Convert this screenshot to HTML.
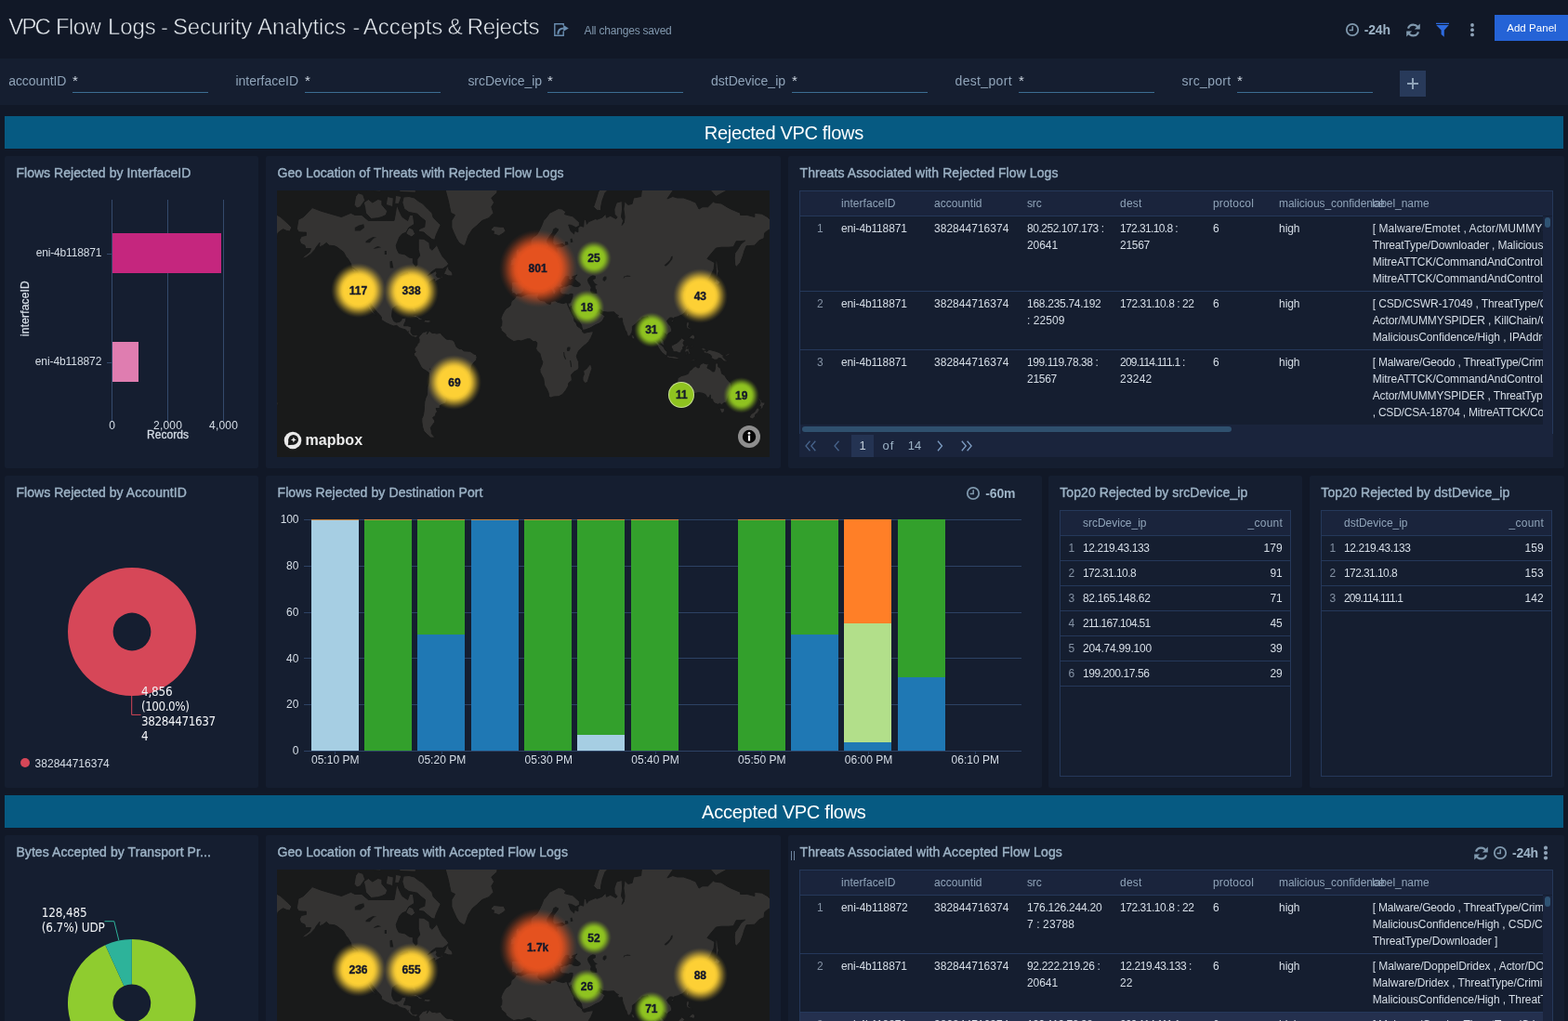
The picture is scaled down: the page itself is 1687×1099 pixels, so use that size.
<!DOCTYPE html>
<html lang="en"><head><meta charset="utf-8"><title>VPC Flow Logs - Security Analytics - Accepts &amp; Rejects</title>
<style>
html,body{margin:0;padding:0;}
body{width:1687px;height:1099px;overflow:hidden;background:#111827;font-family:"Liberation Sans",sans-serif;position:relative;}
.t{position:absolute;white-space:nowrap;}
#root{position:absolute;left:0;top:0;width:1687px;height:1099px;overflow:hidden;will-change:transform;}
.b{position:absolute;box-sizing:border-box;}
svg{position:absolute;overflow:hidden;}
</style></head><body><div id="root">
<!-- header -->
<h1 style="margin:0;font-size:inherit;font-weight:inherit">
<span class="t" style="left:9.20px;top:14.00px;font-size:24px;line-height:30px;color:#e8edf2;letter-spacing:-1.816px;-webkit-text-stroke:0.55px #111827;">VPC</span>
<span class="t" style="left:59.90px;top:14.00px;font-size:24px;line-height:30px;color:#e8edf2;letter-spacing:-0.593px;-webkit-text-stroke:0.55px #111827;">Flow</span>
<span class="t" style="left:115.90px;top:14.00px;font-size:24px;line-height:30px;color:#e8edf2;letter-spacing:-0.036px;-webkit-text-stroke:0.55px #111827;">Logs</span>
<span class="t" style="left:173.00px;top:14.00px;font-size:24px;line-height:30px;color:#e8edf2;-webkit-text-stroke:0.55px #111827;">-</span>
<span class="t" style="left:186.10px;top:14.00px;font-size:24px;line-height:30px;color:#e8edf2;letter-spacing:-0.237px;-webkit-text-stroke:0.55px #111827;">Security</span>
<span class="t" style="left:277.00px;top:14.00px;font-size:24px;line-height:30px;color:#e8edf2;letter-spacing:-0.104px;-webkit-text-stroke:0.55px #111827;">Analytics</span>
<span class="t" style="left:379.20px;top:14.00px;font-size:24px;line-height:30px;color:#e8edf2;-webkit-text-stroke:0.55px #111827;">-</span>
<span class="t" style="left:390.80px;top:14.00px;font-size:24px;line-height:30px;color:#e8edf2;letter-spacing:0.033px;-webkit-text-stroke:0.55px #111827;">Accepts</span>
<span class="t" style="left:481.80px;top:14.00px;font-size:24px;line-height:30px;color:#e8edf2;-webkit-text-stroke:0.55px #111827;">&amp;</span>
<span class="t" style="left:502.70px;top:14.00px;font-size:24px;line-height:30px;color:#e8edf2;letter-spacing:-0.361px;-webkit-text-stroke:0.55px #111827;">Rejects</span>
</h1>
<svg style="left:596px;top:24px" width="17" height="16" viewBox="0 0 17 16"><path d="M10.2 3.6V1.8H0.8V14.2H10.2V9.6" fill="none" stroke="#6a8db0" stroke-width="1.4"/><path d="M4.4 12.8C4.4 8.6 6.6 6.4 10.6 6.4" fill="none" stroke="#6a8db0" stroke-width="2"/><path d="M10.2 3.1L15.8 6.4L10.2 9.7Z" fill="#6a8db0"/></svg>
<span class="t" style="left:628.60px;top:26.00px;font-size:12px;line-height:15px;color:#8097ad;letter-spacing:-0.200px;">All changes saved</span>
<svg style="left:1446px;top:23px" width="18" height="18" viewBox="0 0 18 18"><circle cx="9" cy="9" r="6.2" fill="none" stroke="#7f98ad" stroke-width="1.8"/><path d="M9.2 5.2V9.6H5.6" fill="none" stroke="#7f98ad" stroke-width="1.5"/></svg>
<span class="t" style="left:1467.80px;top:23.00px;font-size:14px;line-height:18px;color:#9db3c6;font-weight:700;letter-spacing:-0.197px;">-24h</span>
<svg style="left:1512.5px;top:24.5px" width="15" height="15" viewBox="0 0 15 15"><path d="M12.9 5.6A5.7 5.7 0 0 0 2 5.6" fill="none" stroke="#7f98ad" stroke-width="2.2"/><path d="M14.8 0.4V6.4H8.8Z" fill="#7f98ad"/><path d="M2.1 9.4A5.7 5.7 0 0 0 13 9.4" fill="none" stroke="#7f98ad" stroke-width="2.2"/><path d="M0.2 14.6V8.6H6.2Z" fill="#7f98ad"/></svg>
<svg style="left:1544px;top:24px" width="16" height="17" viewBox="0 0 16 17"><path d="M1 0.8H15V2H1Z M1.2 3H14.8L9.8 8.6V15.8L6.6 13V8.6Z" fill="#2d6be0"/></svg>
<svg style="left:1580px;top:24px" width="8" height="16" viewBox="0 0 8 16"><circle cx="4" cy="3" r="1.9" fill="#8fa3b8"/><circle cx="4" cy="8.2" r="1.9" fill="#8fa3b8"/><circle cx="4" cy="13.4" r="1.9" fill="#8fa3b8"/></svg>
<div class="b" style="left:1608px;top:16px;width:90px;height:28px;background:#2563d6;"></div>
<span class="t" style="left:1621.20px;top:23.00px;font-size:11.5px;line-height:14px;color:#ffffff;letter-spacing:0.048px;">Add Panel</span>
<!-- filter bar -->
<div class="b" style="left:0px;top:63px;width:1687px;height:50px;background:#151e30;"></div>
<span class="t" style="left:9.20px;top:78.00px;font-size:14px;line-height:18px;color:#8fa3b8;letter-spacing:-0.093px;">accountID</span>
<span class="t" style="left:78.00px;top:77.00px;font-size:15px;line-height:19px;color:#cdd6e0;">*</span>
<div class="b" style="left:78px;top:99px;width:145.6px;height:1px;background:#3c6d92;"></div>
<span class="t" style="left:253.40px;top:78.00px;font-size:14px;line-height:18px;color:#8fa3b8;letter-spacing:-0.009px;">interfaceID</span>
<span class="t" style="left:328.00px;top:77.00px;font-size:15px;line-height:19px;color:#cdd6e0;">*</span>
<div class="b" style="left:328px;top:99px;width:145.6px;height:1px;background:#3c6d92;"></div>
<span class="t" style="left:503.40px;top:78.00px;font-size:14px;line-height:18px;color:#8fa3b8;letter-spacing:-0.045px;">srcDevice_ip</span>
<span class="t" style="left:589.00px;top:77.00px;font-size:15px;line-height:19px;color:#cdd6e0;">*</span>
<div class="b" style="left:589px;top:99px;width:145.6px;height:1px;background:#3c6d92;"></div>
<span class="t" style="left:765.00px;top:78.00px;font-size:14px;line-height:18px;color:#8fa3b8;letter-spacing:-0.013px;">dstDevice_ip</span>
<span class="t" style="left:852.00px;top:77.00px;font-size:15px;line-height:19px;color:#cdd6e0;">*</span>
<div class="b" style="left:852px;top:99px;width:145.6px;height:1px;background:#3c6d92;"></div>
<span class="t" style="left:1027.50px;top:78.00px;font-size:14px;line-height:18px;color:#8fa3b8;letter-spacing:0.348px;">dest_port</span>
<span class="t" style="left:1096.00px;top:77.00px;font-size:15px;line-height:19px;color:#cdd6e0;">*</span>
<div class="b" style="left:1096px;top:99px;width:145.6px;height:1px;background:#3c6d92;"></div>
<span class="t" style="left:1271.50px;top:78.00px;font-size:14px;line-height:18px;color:#8fa3b8;letter-spacing:0.303px;">src_port</span>
<span class="t" style="left:1331.00px;top:77.00px;font-size:15px;line-height:19px;color:#cdd6e0;">*</span>
<div class="b" style="left:1331px;top:99px;width:145.6px;height:1px;background:#3c6d92;"></div>
<div class="b" style="left:1506px;top:76px;width:28px;height:28px;background:#283a5a;"></div>
<div class="b" style="left:1514px;top:89px;width:12px;height:2px;background:#8fa3b8;"></div>
<div class="b" style="left:1519px;top:84px;width:2px;height:12px;background:#8fa3b8;"></div>
<div class="b" style="left:5px;top:125px;width:1677px;height:35px;background:#065a82;"></div>
<span class="t" style="left:757.84px;top:131.00px;font-size:20px;line-height:25px;color:#ffffff;letter-spacing:-0.319px;">Rejected VPC flows</span>
<div class="b" style="left:5px;top:856px;width:1677px;height:35px;background:#065a82;"></div>
<span class="t" style="left:755.12px;top:862.00px;font-size:20px;line-height:25px;color:#ffffff;letter-spacing:-0.261px;">Accepted VPC flows</span>
<div class="b" style="left:5px;top:168px;width:273px;height:336px;background:#151e30;border-radius:2px;"></div>
<div class="b" style="left:286px;top:168px;width:554px;height:336px;background:#151e30;border-radius:2px;"></div>
<div class="b" style="left:848px;top:168px;width:835px;height:336px;background:#151e30;border-radius:2px;"></div>
<div class="b" style="left:5px;top:512px;width:273px;height:336px;background:#151e30;border-radius:2px;"></div>
<div class="b" style="left:286px;top:512px;width:834.7px;height:336px;background:#151e30;border-radius:2px;"></div>
<div class="b" style="left:1128px;top:512px;width:273px;height:336px;background:#151e30;border-radius:2px;"></div>
<div class="b" style="left:1409px;top:512px;width:274px;height:336px;background:#151e30;border-radius:2px;"></div>
<div class="b" style="left:5px;top:899px;width:273px;height:210px;background:#151e30;border-radius:2px;"></div>
<div class="b" style="left:286px;top:899px;width:554px;height:210px;background:#151e30;border-radius:2px;"></div>
<div class="b" style="left:848px;top:899px;width:835px;height:210px;background:#151e30;border-radius:2px;"></div>
<span class="t" style="left:17.40px;top:177.00px;font-size:14px;line-height:18px;color:#9db3c6;letter-spacing:0.043px;-webkit-text-stroke:0.4px #9db3c6;">Flows Rejected by InterfaceID</span>
<span class="t" style="left:298.50px;top:177.00px;font-size:14px;line-height:18px;color:#9db3c6;letter-spacing:0.052px;-webkit-text-stroke:0.4px #9db3c6;">Geo Location of Threats with Rejected Flow Logs</span>
<span class="t" style="left:860.50px;top:177.00px;font-size:14px;line-height:18px;color:#9db3c6;letter-spacing:0.079px;-webkit-text-stroke:0.4px #9db3c6;">Threats Associated with Rejected Flow Logs</span>
<span class="t" style="left:17.40px;top:521.00px;font-size:14px;line-height:18px;color:#9db3c6;letter-spacing:0.052px;-webkit-text-stroke:0.4px #9db3c6;">Flows Rejected by AccountID</span>
<span class="t" style="left:298.50px;top:521.00px;font-size:14px;line-height:18px;color:#9db3c6;letter-spacing:0.092px;-webkit-text-stroke:0.4px #9db3c6;">Flows Rejected by Destination Port</span>
<span class="t" style="left:1140.30px;top:521.00px;font-size:14px;line-height:18px;color:#9db3c6;letter-spacing:0.067px;-webkit-text-stroke:0.4px #9db3c6;">Top20 Rejected by srcDevice_ip</span>
<span class="t" style="left:1421.30px;top:521.00px;font-size:14px;line-height:18px;color:#9db3c6;letter-spacing:0.100px;-webkit-text-stroke:0.4px #9db3c6;">Top20 Rejected by dstDevice_ip</span>
<span class="t" style="left:17.40px;top:908.00px;font-size:14px;line-height:18px;color:#9db3c6;letter-spacing:0.076px;-webkit-text-stroke:0.4px #9db3c6;">Bytes Accepted by Transport Pr...</span>
<span class="t" style="left:298.50px;top:908.00px;font-size:14px;line-height:18px;color:#9db3c6;letter-spacing:0.097px;-webkit-text-stroke:0.4px #9db3c6;">Geo Location of Threats with Accepted Flow Logs</span>
<span class="t" style="left:860.50px;top:908.00px;font-size:14px;line-height:18px;color:#9db3c6;letter-spacing:0.130px;-webkit-text-stroke:0.4px #9db3c6;">Threats Associated with Accepted Flow Logs</span>
<!-- bar chart -->
<div class="b" style="left:120.2px;top:215px;width:1px;height:238px;background:#344a6c;"></div>
<div class="b" style="left:180.3px;top:215px;width:1px;height:238px;background:#344a6c;"></div>
<div class="b" style="left:240.3px;top:215px;width:1px;height:238px;background:#344a6c;"></div>
<div class="b" style="left:120.7px;top:251px;width:117.3px;height:42.8px;background:#c5267e;"></div>
<div class="b" style="left:120.7px;top:368.1px;width:28.3px;height:42.5px;background:#df7db0;"></div>
<div class="b" style="left:115px;top:272.5px;width:5.5px;height:1px;background:#344a6c;"></div>
<div class="b" style="left:115px;top:389.7px;width:5.5px;height:1px;background:#344a6c;"></div>
<span class="t" style="left:38.64px;top:265.00px;font-size:12px;line-height:15px;color:#d5dde6;letter-spacing:-0.159px;">eni-4b118871</span>
<span class="t" style="left:37.72px;top:382.00px;font-size:12px;line-height:15px;color:#d5dde6;letter-spacing:-0.076px;">eni-4b118872</span>
<span class="t" style="left:117.16px;top:451.00px;font-size:12px;line-height:15px;color:#d5dde6;">0</span>
<span class="t" style="left:165.10px;top:451.00px;font-size:12px;line-height:15px;color:#d5dde6;letter-spacing:0.194px;">2,000</span>
<span class="t" style="left:225.10px;top:451.00px;font-size:12px;line-height:15px;color:#d5dde6;letter-spacing:0.194px;">4,000</span>
<span class="t" style="left:158.02px;top:461.00px;font-size:12px;line-height:15px;color:#d5dde6;letter-spacing:0.045px;-webkit-text-stroke:0.3px #d5dde6;">Records</span>
<span class="t" style="left:19.5px;top:361.5px;font-size:12px;line-height:14px;color:#d5dde6;transform:rotate(-90deg);transform-origin:0 0;letter-spacing:0.161px;-webkit-text-stroke:0.3px #d5dde6;">interfaceID</span>
<svg style="left:298px;top:205px" width="530" height="287" viewBox="0 0 530 287"><defs><filter id="bl205" x="-5%" y="-5%" width="110%" height="110%" color-interpolation-filters="sRGB"><feGaussianBlur stdDeviation="0.5"/></filter></defs><rect width="530" height="287" fill="#191a1a"/><g filter="url(#bl205)"><path d="M21.3,41.3L23.0,31.3L28.5,28.5L38.0,18.6L47.5,22.2L60.5,26.0L69.3,28.5L79.5,24.3L83.8,26.4L91.1,26.4L98.4,32.5L108.6,32.5L117.3,32.5L126.0,32.5L127.5,24.3L128.9,15.4L132.6,24.3L134.8,28.5L140.6,32.5L142.8,26.4L146.4,26.4L147.8,36.3L142.0,39.9L139.1,45.1L134.8,46.8L131.8,50.1L128.2,59.2L128.9,62.9L131.1,67.6L137.7,68.9L142.0,72.0L146.4,72.8L146.4,77.7L149.3,81.8L150.8,80.1L150.8,74.0L153.7,70.2L152.2,63.5L152.2,56.9L152.2,52.0L158.0,52.3L163.9,56.3L164.6,62.1L166.8,64.3L170.4,60.7L171.9,58.3L175.5,66.2L178.4,71.5L182.0,75.3L184.7,78.9L182.8,81.3L178.4,84.3L171.1,84.3L168.2,86.3L164.6,89.2L162.4,91.5L164.6,90.3L171.1,86.5L172.1,89.2L171.1,91.3L172.6,93.4L176.2,93.9L176.9,91.3L178.4,93.4L173.3,96.5L169.7,98.6L169.7,95.5L168.2,95.9L163.9,98.6L163.1,101.5L163.9,102.1L160.9,103.5L158.0,104.4L155.8,108.2L155.1,111.0L155.6,114.0L153.7,115.5L150.8,118.1L147.8,120.7L147.4,123.2L149.3,128.2L149.0,130.9L147.8,131.1L145.4,127.4L145.2,124.9L143.5,123.2L140.6,122.7L136.2,122.7L135.5,124.5L133.3,124.4L128.9,123.9L124.6,126.9L124.1,129.8L123.5,135.4L125.6,140.4L128.2,142.1L131.8,141.4L133.7,140.1L134.2,137.7L139.1,137.0L138.4,140.8L137.2,143.1L136.5,145.7L140.6,145.7L144.5,146.9L143.9,151.4L144.2,153.2L146.4,155.9L149.3,155.6L153.2,156.6L151.5,156.9L149.3,158.3L147.1,157.8L144.9,156.9L142.0,154.4L140.9,152.9L138.4,149.9L134.8,148.9L131.5,147.7L128.9,145.4L125.3,145.9L121.7,144.5L117.3,142.4L112.2,139.3L112.5,136.6L110.7,134.1L107.1,130.6L104.9,127.4L102.0,124.0L100.6,121.0L98.8,120.3L98.8,122.9L101.3,126.5L104.2,131.4L106.4,134.3L105.2,133.8L102.7,131.7L99.1,127.4L97.2,123.2L95.3,119.0L93.3,116.3L90.4,115.5L88.2,111.9L87.5,109.5L85.3,104.8L84.8,99.6L85.3,93.0L84.3,88.3L86.7,88.5L87.5,90.3L87.0,87.0L83.8,84.7L80.2,82.5L79.5,78.9L76.6,74.0L74.4,71.5L71.5,66.2L67.8,63.5L64.9,61.2L62.0,59.8L56.2,59.2L53.3,56.3L49.6,59.2L45.3,61.2L46.0,56.3L42.4,60.7L40.9,63.5L36.5,68.4L31.4,72.0L26.4,73.5L30.0,70.2L35.1,66.2L36.5,62.6L30.7,62.6L30.0,59.2L25.6,57.2L24.2,53.2L26.4,49.4L31.4,48.4L31.4,45.1L28.5,45.1L23.4,44.8ZM-502.5,41.3L-500.8,31.3L-495.3,28.5L-485.8,18.6L-476.4,22.2L-463.3,26.0L-454.5,28.5L-444.3,24.3L-440.0,26.4L-432.7,26.4L-425.4,32.5L-415.2,32.5L-406.5,32.5L-397.8,32.5L-396.3,24.3L-394.9,15.4L-391.2,24.3L-389.0,28.5L-383.2,32.5L-381.0,26.4L-377.4,26.4L-376.0,36.3L-381.8,39.9L-384.7,45.1L-389.0,46.8L-392.0,50.1L-395.6,59.2L-394.9,62.9L-392.7,67.6L-386.1,68.9L-381.8,72.0L-377.4,72.8L-377.4,77.7L-374.5,81.8L-373.0,80.1L-373.0,74.0L-370.1,70.2L-371.6,63.5L-371.6,56.9L-371.6,52.0L-365.8,52.3L-359.9,56.3L-359.2,62.1L-357.0,64.3L-353.4,60.7L-351.9,58.3L-348.3,66.2L-345.4,71.5L-341.8,75.3L-339.1,78.9L-341.0,81.3L-345.4,84.3L-352.7,84.3L-355.6,86.3L-359.2,89.2L-361.4,91.5L-359.2,90.3L-352.7,86.5L-351.7,89.2L-352.7,91.3L-351.2,93.4L-347.6,93.9L-346.9,91.3L-345.4,93.4L-350.5,96.5L-354.1,98.6L-354.1,95.5L-355.6,95.9L-359.9,98.6L-360.7,101.5L-359.9,102.1L-362.9,103.5L-365.8,104.4L-368.0,108.2L-368.7,111.0L-368.2,114.0L-370.1,115.5L-373.0,118.1L-376.0,120.7L-376.4,123.2L-374.5,128.2L-374.8,130.9L-376.0,131.1L-378.4,127.4L-378.6,124.9L-380.3,123.2L-383.2,122.7L-387.6,122.7L-388.3,124.5L-390.5,124.4L-394.9,123.9L-399.2,126.9L-399.7,129.8L-400.3,135.4L-398.2,140.4L-395.6,142.1L-392.0,141.4L-390.1,140.1L-389.6,137.7L-384.7,137.0L-385.4,140.8L-386.6,143.1L-387.3,145.7L-383.2,145.7L-379.3,146.9L-379.9,151.4L-379.6,153.2L-377.4,155.9L-374.5,155.6L-370.6,156.6L-372.3,156.9L-374.5,158.3L-376.7,157.8L-378.9,156.9L-381.8,154.4L-382.9,152.9L-385.4,149.9L-389.0,148.9L-392.3,147.7L-394.9,145.4L-398.5,145.9L-402.1,144.5L-406.5,142.4L-411.6,139.3L-411.3,136.6L-413.1,134.1L-416.7,130.6L-418.9,127.4L-421.8,124.0L-423.2,121.0L-425.0,120.3L-425.0,122.9L-422.5,126.5L-419.6,131.4L-417.4,134.3L-418.6,133.8L-421.1,131.7L-424.7,127.4L-426.6,123.2L-428.5,119.0L-430.5,116.3L-433.4,115.5L-435.6,111.9L-436.3,109.5L-438.5,104.8L-439.0,99.6L-438.5,93.0L-439.5,88.3L-437.1,88.5L-436.3,90.3L-436.8,87.0L-440.0,84.7L-443.6,82.5L-444.3,78.9L-447.2,74.0L-449.4,71.5L-452.3,66.2L-456.0,63.5L-458.9,61.2L-461.8,59.8L-467.6,59.2L-470.5,56.3L-474.2,59.2L-478.5,61.2L-477.8,56.3L-481.4,60.7L-482.9,63.5L-487.3,68.4L-492.4,72.0L-497.4,73.5L-493.8,70.2L-488.7,66.2L-487.3,62.6L-493.1,62.6L-493.8,59.2L-498.2,57.2L-499.6,53.2L-497.4,49.4L-492.4,48.4L-492.4,45.1L-495.3,45.1L-500.4,44.8ZM545.1,41.3L546.8,31.3L552.3,28.5L561.8,18.6L571.2,22.2L584.3,26.0L593.1,28.5L603.3,24.3L607.6,26.4L614.9,26.4L622.2,32.5L632.4,32.5L641.1,32.5L649.8,32.5L651.3,24.3L652.7,15.4L656.4,24.3L658.6,28.5L664.4,32.5L666.6,26.4L670.2,26.4L671.6,36.3L665.8,39.9L662.9,45.1L658.6,46.8L655.6,50.1L652.0,59.2L652.7,62.9L654.9,67.6L661.5,68.9L665.8,72.0L670.2,72.8L670.2,77.7L673.1,81.8L674.6,80.1L674.6,74.0L677.5,70.2L676.0,63.5L676.0,56.9L676.0,52.0L681.8,52.3L687.7,56.3L688.4,62.1L690.6,64.3L694.2,60.7L695.7,58.3L699.3,66.2L702.2,71.5L705.8,75.3L708.5,78.9L706.6,81.3L702.2,84.3L694.9,84.3L692.0,86.3L688.4,89.2L686.2,91.5L688.4,90.3L694.9,86.5L695.9,89.2L694.9,91.3L696.4,93.4L700.0,93.9L700.7,91.3L702.2,93.4L697.1,96.5L693.5,98.6L693.5,95.5L692.0,95.9L687.7,98.6L686.9,101.5L687.7,102.1L684.7,103.5L681.8,104.4L679.6,108.2L678.9,111.0L679.4,114.0L677.5,115.5L674.6,118.1L671.6,120.7L671.2,123.2L673.1,128.2L672.8,130.9L671.6,131.1L669.2,127.4L669.0,124.9L667.3,123.2L664.4,122.7L660.0,122.7L659.3,124.5L657.1,124.4L652.7,123.9L648.4,126.9L647.9,129.8L647.3,135.4L649.4,140.4L652.0,142.1L655.6,141.4L657.5,140.1L658.0,137.7L662.9,137.0L662.2,140.8L661.0,143.1L660.3,145.7L664.4,145.7L668.3,146.9L667.7,151.4L668.0,153.2L670.2,155.9L673.1,155.6L677.0,156.6L675.3,156.9L673.1,158.3L670.9,157.8L668.7,156.9L665.8,154.4L664.7,152.9L662.2,149.9L658.6,148.9L655.3,147.7L652.7,145.4L649.1,145.9L645.5,144.5L641.1,142.4L636.0,139.3L636.3,136.6L634.5,134.1L630.9,130.6L628.7,127.4L625.8,124.0L624.4,121.0L622.6,120.3L622.6,122.9L625.1,126.5L628.0,131.4L630.2,134.3L629.0,133.8L626.5,131.7L622.9,127.4L621.0,123.2L619.1,119.0L617.1,116.3L614.2,115.5L612.0,111.9L611.3,109.5L609.1,104.8L608.6,99.6L609.1,93.0L608.1,88.3L610.5,88.5L611.3,90.3L610.8,87.0L607.6,84.7L604.0,82.5L603.3,78.9L600.4,74.0L598.2,71.5L595.3,66.2L591.6,63.5L588.7,61.2L585.8,59.8L580.0,59.2L577.1,56.3L573.4,59.2L569.1,61.2L569.8,56.3L566.2,60.7L564.7,63.5L560.3,68.4L555.2,72.0L550.2,73.5L553.8,70.2L558.9,66.2L560.3,62.6L554.5,62.6L553.8,59.2L549.4,57.2L548.0,53.2L550.2,49.4L555.2,48.4L555.2,45.1L552.3,45.1L547.2,44.8ZM79.0,82.9L83.8,84.7L86.0,88.3L83.1,87.4L79.0,82.9ZM-444.8,82.9L-440.0,84.7L-437.8,88.3L-440.7,87.4L-444.8,82.9ZM602.8,82.9L607.6,84.7L609.8,88.3L606.9,87.4L602.8,82.9ZM176.2,37.0L173.3,43.4L171.1,48.4L169.7,53.2L166.8,52.6L160.9,47.8L158.0,45.1L152.2,44.1L152.9,41.7L158.8,39.2L159.5,32.5L154.4,28.5L150.8,25.2L146.4,24.3L142.0,23.5L136.9,20.0L134.8,13.0L136.2,7.0L142.0,6.5L147.8,8.0L152.2,11.5L156.6,14.0L162.4,20.0L166.8,24.3L168.2,29.3L173.3,34.4ZM-347.6,37.0L-350.5,43.4L-352.7,48.4L-354.1,53.2L-357.0,52.6L-362.9,47.8L-365.8,45.1L-371.6,44.1L-370.9,41.7L-365.0,39.2L-364.3,32.5L-369.4,28.5L-373.0,25.2L-377.4,24.3L-381.8,23.5L-386.9,20.0L-389.0,13.0L-387.6,7.0L-381.8,6.5L-376.0,8.0L-371.6,11.5L-367.2,14.0L-361.4,20.0L-357.0,24.3L-355.6,29.3L-350.5,34.4ZM700.0,37.0L697.1,43.4L694.9,48.4L693.5,53.2L690.6,52.6L684.7,47.8L681.8,45.1L676.0,44.1L676.7,41.7L682.6,39.2L683.3,32.5L678.2,28.5L674.6,25.2L670.2,24.3L665.8,23.5L660.7,20.0L658.6,13.0L660.0,7.0L665.8,6.5L671.6,8.0L676.0,11.5L680.4,14.0L686.2,20.0L690.6,24.3L692.0,29.3L697.1,34.4ZM95.5,24.3L101.3,30.5L108.6,29.7L112.9,28.5L117.3,26.4L118.7,22.2L112.9,15.4L112.9,10.5L108.6,9.5L102.7,13.0L98.4,9.5L93.3,13.0L94.7,18.6ZM-428.3,24.3L-422.5,30.5L-415.2,29.7L-410.9,28.5L-406.5,26.4L-405.1,22.2L-410.9,15.4L-410.9,10.5L-415.2,9.5L-421.1,13.0L-425.4,9.5L-430.5,13.0L-429.1,18.6ZM619.3,24.3L625.1,30.5L632.4,29.7L636.7,28.5L641.1,26.4L642.5,22.2L636.7,15.4L636.7,10.5L632.4,9.5L626.5,13.0L622.2,9.5L617.1,13.0L618.5,18.6ZM83.1,15.4L86.0,19.1L89.6,17.7L94.7,10.5L92.6,4.4L87.5,2.7L84.6,6.5ZM-440.7,15.4L-437.8,19.1L-434.2,17.7L-429.1,10.5L-431.2,4.4L-436.3,2.7L-439.2,6.5ZM606.9,15.4L609.8,19.1L613.4,17.7L618.5,10.5L616.4,4.4L611.3,2.7L608.4,6.5ZM131.8,1.6L149.3,2.2L149.3,-4.6L142.0,-12.1L131.8,-8.9ZM-392.0,1.6L-374.5,2.2L-374.5,-4.6L-381.8,-12.1L-392.0,-8.9ZM655.6,1.6L673.1,2.2L673.1,-4.6L665.8,-12.1L655.6,-8.9ZM117.3,15.4L124.6,17.7L125.3,8.0L118.7,6.5ZM-406.5,15.4L-399.2,17.7L-398.5,8.0L-405.1,6.5ZM641.1,15.4L648.4,17.7L649.1,8.0L642.5,6.5ZM126.7,14.4L131.1,14.4L134.0,6.5L127.5,5.4ZM-397.1,14.4L-392.7,14.4L-389.8,6.5L-396.3,5.4ZM650.5,14.4L654.9,14.4L657.8,6.5L651.3,5.4ZM96.9,-0.0L111.5,1.1L114.4,-5.8L105.7,-12.1L95.5,-7.7ZM-426.9,-0.0L-412.3,1.1L-409.4,-5.8L-418.1,-12.1L-428.3,-7.7ZM620.7,-0.0L635.3,1.1L638.2,-5.8L629.5,-12.1L619.3,-7.7ZM114.4,-0.0L124.6,-0.0L124.6,-10.8L115.8,-9.5ZM-409.4,-0.0L-399.2,-0.0L-399.2,-10.8L-408.0,-9.5ZM638.2,-0.0L648.4,-0.0L648.4,-10.8L639.6,-9.5ZM134.8,-8.9L152.2,-8.9L163.9,-26.1L175.5,-52.8L156.6,-63.9L131.8,-42.9L137.7,-18.8ZM-389.0,-8.9L-371.6,-8.9L-359.9,-26.1L-348.3,-52.8L-367.2,-63.9L-392.0,-42.9L-386.1,-18.8ZM658.6,-8.9L676.0,-8.9L687.7,-26.1L699.3,-52.8L680.4,-63.9L655.6,-42.9L661.5,-18.8ZM139.1,46.8L144.9,50.1L148.6,46.8L146.4,41.7L142.0,39.9L139.1,45.1ZM-384.7,46.8L-378.9,50.1L-375.2,46.8L-377.4,41.7L-381.8,39.9L-384.7,45.1ZM662.9,46.8L668.7,50.1L672.4,46.8L670.2,41.7L665.8,39.9L662.9,45.1ZM179.4,89.8L184.2,91.8L188.6,92.0L189.0,90.0L187.9,87.4L184.9,85.2L184.5,81.3L182.5,82.9L180.6,87.4ZM-344.4,89.8L-339.6,91.8L-335.2,92.0L-334.8,90.0L-335.9,87.4L-338.9,85.2L-339.3,81.3L-341.3,82.9L-343.2,87.4ZM703.2,89.8L708.0,91.8L712.4,92.0L712.8,90.0L711.7,87.4L708.7,85.2L708.3,81.3L706.3,82.9L704.4,87.4ZM142.0,136.5L145.7,134.6L149.3,134.4L153.7,137.0L157.7,139.0L152.9,139.4L152.2,138.5L150.8,137.0L146.4,135.7L143.5,136.2ZM-381.8,136.5L-378.1,134.6L-374.5,134.4L-370.1,137.0L-366.1,139.0L-370.9,139.4L-371.6,138.5L-373.0,137.0L-377.4,135.7L-380.3,136.2ZM665.8,136.5L669.5,134.6L673.1,134.4L677.5,137.0L681.5,139.0L676.7,139.4L676.0,138.5L674.6,137.0L670.2,135.7L667.3,136.2ZM157.4,141.8L159.5,139.4L163.9,139.6L166.2,141.4L162.4,142.4L160.2,142.1ZM-366.4,141.8L-364.3,139.4L-359.9,139.6L-357.6,141.4L-361.4,142.4L-363.6,142.1ZM681.2,141.8L683.3,139.4L687.7,139.6L690.0,141.4L686.2,142.4L684.0,142.1ZM160.9,-18.8L165.3,-8.9L169.7,-5.8L178.4,-5.8L181.3,-0.0L184.2,10.5L185.7,17.7L187.1,24.3L191.5,26.4L187.9,32.5L187.9,39.9L190.0,45.1L193.0,51.6L195.9,56.3L200.2,59.2L202.4,59.2L203.9,54.7L206.0,48.4L210.4,41.7L214.8,38.1L220.6,32.5L227.9,29.7L233.0,24.3L230.8,17.7L233.7,13.0L230.8,8.0L236.6,2.7L238.1,-5.8L236.6,-18.8L236.6,-34.1L207.5,-63.9L178.4,-52.8ZM-362.9,-18.8L-358.5,-8.9L-354.1,-5.8L-345.4,-5.8L-342.5,-0.0L-339.6,10.5L-338.1,17.7L-336.7,24.3L-332.3,26.4L-335.9,32.5L-335.9,39.9L-333.8,45.1L-330.9,51.6L-327.9,56.3L-323.6,59.2L-321.4,59.2L-319.9,54.7L-317.8,48.4L-313.4,41.7L-309.0,38.1L-303.2,32.5L-295.9,29.7L-290.8,24.3L-293.0,17.7L-290.1,13.0L-293.0,8.0L-287.2,2.7L-285.7,-5.8L-287.2,-18.8L-287.2,-34.1L-316.3,-63.9L-345.4,-52.8ZM684.7,-18.8L689.1,-8.9L693.5,-5.8L702.2,-5.8L705.1,-0.0L708.0,10.5L709.5,17.7L710.9,24.3L715.3,26.4L711.7,32.5L711.7,39.9L713.8,45.1L716.8,51.6L719.7,56.3L724.0,59.2L726.2,59.2L727.7,54.7L729.8,48.4L734.2,41.7L738.6,38.1L744.4,32.5L751.7,29.7L756.8,24.3L754.6,17.7L757.5,13.0L754.6,8.0L760.4,2.7L761.9,-5.8L760.4,-18.8L760.4,-34.1L731.3,-63.9L702.2,-52.8ZM230.3,41.7L233.7,38.5L239.5,39.2L243.9,39.2L245.9,43.4L243.9,45.8L238.8,48.8L235.1,47.5L232.7,46.8L233.7,44.1L230.8,43.4ZM-293.5,41.7L-290.1,38.5L-284.3,39.2L-279.9,39.2L-277.9,43.4L-279.9,45.8L-285.0,48.8L-288.7,47.5L-291.1,46.8L-290.1,44.1L-293.0,43.4ZM754.1,41.7L757.5,38.5L763.3,39.2L767.7,39.2L769.7,43.4L767.7,45.8L762.6,48.8L758.9,47.5L756.5,46.8L757.5,44.1L754.6,43.4ZM153.2,156.6L155.1,155.1L155.8,153.5L157.7,152.6L160.6,151.7L161.5,150.8L162.1,152.9L161.2,154.8L162.4,153.2L163.9,151.3L166.3,152.9L166.8,153.6L169.7,153.5L171.9,154.1L175.5,153.3L176.9,154.7L178.4,156.6L180.6,158.8L182.8,160.3L185.7,160.4L188.6,161.0L190.8,162.7L192.2,166.1L193.0,168.3L195.1,169.7L195.9,170.5L198.8,170.7L201.2,172.8L204.6,173.1L207.5,173.2L209.7,174.4L211.9,176.1L214.3,176.7L215.1,179.5L214.5,182.4L211.9,185.1L209.7,188.1L209.0,191.1L208.7,195.3L207.5,198.7L206.0,201.8L204.6,203.4L201.0,203.7L198.0,205.0L195.1,207.9L195.0,211.5L193.0,214.0L190.8,217.3L189.3,219.9L187.9,222.0L185.7,223.2L182.8,222.5L180.7,221.7L182.5,225.2L181.7,228.9L176.9,230.7L175.2,231.7L175.1,234.5L171.1,234.5L171.9,237.0L172.9,238.0L171.1,239.4L170.4,242.5L167.5,244.6L169.7,247.7L169.7,249.3L167.1,252.8L165.3,255.5L166.2,258.8L166.3,261.5L168.9,264.7L170.8,264.5L168.2,266.2L165.3,266.0L161.7,262.7L158.0,259.1L156.6,254.4L155.8,248.8L155.8,245.6L157.3,242.5L158.3,236.5L158.5,231.7L158.8,227.6L159.9,223.4L161.5,219.9L161.7,214.8L162.0,211.5L163.1,207.4L163.4,201.8L163.4,196.2L160.9,194.4L156.6,191.8L154.7,189.3L153.4,186.6L151.5,182.9L149.6,179.2L147.6,177.7L147.4,175.3L149.3,173.8L148.1,172.3L148.0,170.5L149.3,168.3L150.8,166.8L151.0,165.4L152.9,163.5L153.1,160.3L152.4,158.5ZM-370.6,156.6L-368.7,155.1L-368.0,153.5L-366.1,152.6L-363.2,151.7L-362.3,150.8L-361.7,152.9L-362.6,154.8L-361.4,153.2L-359.9,151.3L-357.5,152.9L-357.0,153.6L-354.1,153.5L-351.9,154.1L-348.3,153.3L-346.9,154.7L-345.4,156.6L-343.2,158.8L-341.0,160.3L-338.1,160.4L-335.2,161.0L-333.0,162.7L-331.6,166.1L-330.9,168.3L-328.7,169.7L-327.9,170.5L-325.0,170.7L-322.6,172.8L-319.2,173.1L-316.3,173.2L-314.1,174.4L-311.9,176.1L-309.5,176.7L-308.7,179.5L-309.3,182.4L-311.9,185.1L-314.1,188.1L-314.8,191.1L-315.1,195.3L-316.3,198.7L-317.8,201.8L-319.2,203.4L-322.8,203.7L-325.8,205.0L-328.7,207.9L-328.8,211.5L-330.9,214.0L-333.0,217.3L-334.5,219.9L-335.9,222.0L-338.1,223.2L-341.0,222.5L-343.1,221.7L-341.3,225.2L-342.1,228.9L-346.9,230.7L-348.6,231.7L-348.7,234.5L-352.7,234.5L-351.9,237.0L-350.9,238.0L-352.7,239.4L-353.4,242.5L-356.3,244.6L-354.1,247.7L-354.1,249.3L-356.7,252.8L-358.5,255.5L-357.6,258.8L-357.5,261.5L-354.9,264.7L-353.0,264.5L-355.6,266.2L-358.5,266.0L-362.1,262.7L-365.8,259.1L-367.2,254.4L-368.0,248.8L-368.0,245.6L-366.5,242.5L-365.5,236.5L-365.3,231.7L-365.0,227.6L-363.9,223.4L-362.3,219.9L-362.1,214.8L-361.8,211.5L-360.7,207.4L-360.4,201.8L-360.4,196.2L-362.9,194.4L-367.2,191.8L-369.1,189.3L-370.4,186.6L-372.3,182.9L-374.2,179.2L-376.2,177.7L-376.4,175.3L-374.5,173.8L-375.7,172.3L-375.8,170.5L-374.5,168.3L-373.0,166.8L-372.8,165.4L-370.9,163.5L-370.7,160.3L-371.4,158.5ZM677.0,156.6L678.9,155.1L679.6,153.5L681.5,152.6L684.4,151.7L685.3,150.8L685.9,152.9L685.0,154.8L686.2,153.2L687.7,151.3L690.1,152.9L690.6,153.6L693.5,153.5L695.7,154.1L699.3,153.3L700.7,154.7L702.2,156.6L704.4,158.8L706.6,160.3L709.5,160.4L712.4,161.0L714.6,162.7L716.0,166.1L716.8,168.3L718.9,169.7L719.7,170.5L722.6,170.7L725.0,172.8L728.4,173.1L731.3,173.2L733.5,174.4L735.7,176.1L738.1,176.7L738.9,179.5L738.3,182.4L735.7,185.1L733.5,188.1L732.8,191.1L732.5,195.3L731.3,198.7L729.8,201.8L728.4,203.4L724.8,203.7L721.8,205.0L718.9,207.9L718.8,211.5L716.8,214.0L714.6,217.3L713.1,219.9L711.7,222.0L709.5,223.2L706.6,222.5L704.5,221.7L706.3,225.2L705.5,228.9L700.7,230.7L699.0,231.7L698.9,234.5L694.9,234.5L695.7,237.0L696.7,238.0L694.9,239.4L694.2,242.5L691.3,244.6L693.5,247.7L693.5,249.3L690.9,252.8L689.1,255.5L690.0,258.8L690.1,261.5L692.7,264.7L694.6,264.5L692.0,266.2L689.1,266.0L685.5,262.7L681.8,259.1L680.4,254.4L679.6,248.8L679.6,245.6L681.1,242.5L682.1,236.5L682.3,231.7L682.6,227.6L683.7,223.4L685.3,219.9L685.5,214.8L685.8,211.5L686.9,207.4L687.2,201.8L687.2,196.2L684.7,194.4L680.4,191.8L678.5,189.3L677.2,186.6L675.3,182.9L673.4,179.2L671.4,177.7L671.2,175.3L673.1,173.8L671.9,172.3L671.8,170.5L673.1,168.3L674.6,166.8L674.8,165.4L676.7,163.5L676.9,160.3L676.2,158.5ZM257.1,113.1L262.8,114.2L265.7,113.1L270.1,111.3L277.3,111.2L280.3,110.4L281.7,111.2L280.7,115.5L281.4,116.9L283.2,118.3L287.8,119.1L290.4,121.5L294.1,122.5L295.1,119.5L299.2,118.8L302.1,120.3L307.9,121.7L310.8,120.7L312.7,121.2L313.0,123.2L314.4,126.5L316.6,131.7L317.6,133.8L319.5,137.0L320.0,140.8L321.7,142.4L323.2,146.2L325.6,147.7L328.6,150.7L328.7,152.2L330.4,153.6L334.1,152.6L340.2,151.6L339.9,153.8L337.7,158.8L335.5,162.4L332.6,165.4L329.7,167.5L326.8,170.5L324.6,172.6L323.2,175.8L322.3,178.5L323.2,181.4L324.6,184.4L324.9,190.3L323.9,192.9L319.5,195.3L316.6,198.4L317.4,204.2L313.7,207.4L313.4,210.6L311.1,214.5L307.2,219.6L303.1,221.7L297.7,222.0L294.8,223.1L292.5,222.0L292.2,218.2L290.4,214.0L287.8,209.8L286.8,202.6L283.2,195.6L282.9,192.6L285.3,187.3L285.8,184.4L284.6,182.1L283.5,177.7L282.9,175.6L279.5,172.2L278.5,170.0L279.5,167.5L279.8,163.9L278.4,162.4L275.9,162.7L273.7,161.0L272.2,159.8L269.3,159.8L267.2,160.5L262.8,162.0L259.9,161.4L254.8,162.6L252.2,161.0L249.0,158.9L246.3,156.6L246.1,154.7L243.9,152.9L241.3,150.8L241.3,149.2L240.2,147.4L241.7,145.4L242.0,140.8L241.0,137.7L242.4,133.8L244.6,129.8L246.8,126.9L249.7,125.2L251.4,123.5L251.7,121.5L252.3,119.0L255.5,116.7L257.0,114.2ZM-266.7,113.1L-261.0,114.2L-258.1,113.1L-253.7,111.3L-246.5,111.2L-243.5,110.4L-242.1,111.2L-243.1,115.5L-242.4,116.9L-240.6,118.3L-236.0,119.1L-233.4,121.5L-229.7,122.5L-228.7,119.5L-224.6,118.8L-221.7,120.3L-215.9,121.7L-213.0,120.7L-211.1,121.2L-210.8,123.2L-209.4,126.5L-207.2,131.7L-206.2,133.8L-204.3,137.0L-203.8,140.8L-202.1,142.4L-200.6,146.2L-198.2,147.7L-195.2,150.7L-195.1,152.2L-193.4,153.6L-189.7,152.6L-183.6,151.6L-183.9,153.8L-186.1,158.8L-188.3,162.4L-191.2,165.4L-194.1,167.5L-197.0,170.5L-199.2,172.6L-200.6,175.8L-201.5,178.5L-200.6,181.4L-199.2,184.4L-198.9,190.3L-199.9,192.9L-204.3,195.3L-207.2,198.4L-206.4,204.2L-210.1,207.4L-210.4,210.6L-212.7,214.5L-216.6,219.6L-220.7,221.7L-226.1,222.0L-229.0,223.1L-231.3,222.0L-231.6,218.2L-233.4,214.0L-236.0,209.8L-237.0,202.6L-240.6,195.6L-240.9,192.6L-238.5,187.3L-238.0,184.4L-239.2,182.1L-240.3,177.7L-240.9,175.6L-244.3,172.2L-245.3,170.0L-244.3,167.5L-244.0,163.9L-245.4,162.4L-247.9,162.7L-250.1,161.0L-251.6,159.8L-254.5,159.8L-256.6,160.5L-261.0,162.0L-263.9,161.4L-269.0,162.6L-271.6,161.0L-274.8,158.9L-277.5,156.6L-277.7,154.7L-279.9,152.9L-282.5,150.8L-282.5,149.2L-283.6,147.4L-282.1,145.4L-281.8,140.8L-282.8,137.7L-281.4,133.8L-279.2,129.8L-277.0,126.9L-274.1,125.2L-272.4,123.5L-272.1,121.5L-271.5,119.0L-268.3,116.7L-266.8,114.2ZM780.9,113.1L786.6,114.2L789.5,113.1L793.9,111.3L801.1,111.2L804.1,110.4L805.5,111.2L804.5,115.5L805.2,116.9L807.0,118.3L811.6,119.1L814.2,121.5L817.9,122.5L818.9,119.5L823.0,118.8L825.9,120.3L831.7,121.7L834.6,120.7L836.5,121.2L836.8,123.2L838.2,126.5L840.4,131.7L841.4,133.8L843.3,137.0L843.8,140.8L845.5,142.4L847.0,146.2L849.4,147.7L852.4,150.7L852.5,152.2L854.2,153.6L857.9,152.6L864.0,151.6L863.7,153.8L861.5,158.8L859.3,162.4L856.4,165.4L853.5,167.5L850.6,170.5L848.4,172.6L847.0,175.8L846.1,178.5L847.0,181.4L848.4,184.4L848.7,190.3L847.7,192.9L843.3,195.3L840.4,198.4L841.2,204.2L837.5,207.4L837.2,210.6L834.9,214.5L831.0,219.6L826.9,221.7L821.5,222.0L818.6,223.1L816.3,222.0L816.0,218.2L814.2,214.0L811.6,209.8L810.6,202.6L807.0,195.6L806.7,192.6L809.1,187.3L809.6,184.4L808.4,182.1L807.3,177.7L806.7,175.6L803.3,172.2L802.3,170.0L803.3,167.5L803.6,163.9L802.2,162.4L799.7,162.7L797.5,161.0L796.0,159.8L793.1,159.8L791.0,160.5L786.6,162.0L783.7,161.4L778.6,162.6L776.0,161.0L772.8,158.9L770.1,156.6L769.9,154.7L767.7,152.9L765.1,150.8L765.1,149.2L764.0,147.4L765.5,145.4L765.8,140.8L764.8,137.7L766.2,133.8L768.4,129.8L770.6,126.9L773.5,125.2L775.2,123.5L775.5,121.5L776.1,119.0L779.3,116.7L780.8,114.2ZM337.4,186.6L338.9,191.8L337.7,194.9L335.5,201.8L334.1,206.6L331.2,207.4L329.0,204.2L329.0,201.0L330.3,197.9L329.7,194.1L332.6,192.3L335.5,188.8ZM-186.4,186.6L-184.9,191.8L-186.1,194.9L-188.3,201.8L-189.7,206.6L-192.6,207.4L-194.8,204.2L-194.8,201.0L-193.5,197.9L-194.1,194.1L-191.2,192.3L-188.3,188.8ZM861.2,186.6L862.7,191.8L861.5,194.9L859.3,201.8L857.9,206.6L855.0,207.4L852.8,204.2L852.8,201.0L854.1,197.9L853.5,194.1L856.4,192.3L859.3,188.8ZM257.6,112.8L256.5,111.5L254.9,110.6L252.8,111.0L252.9,108.2L251.9,107.7L252.9,103.5L252.3,99.6L254.1,98.2L258.4,98.6L263.1,98.8L264.0,95.5L264.0,93.4L262.1,90.7L258.9,89.2L259.0,87.9L261.3,87.4L263.4,87.6L263.4,85.4L266.0,85.9L267.9,84.3L268.0,82.7L270.8,81.5L272.2,78.9L272.7,77.7L275.9,76.5L278.2,75.3L277.8,71.5L277.6,67.6L281.0,65.7L281.0,68.9L280.3,71.5L281.4,75.3L283.9,74.3L286.4,75.3L289.7,74.0L292.6,73.3L294.5,74.0L296.3,72.0L296.3,67.6L298.4,65.7L301.1,67.0L301.1,64.0L299.9,61.5L303.5,60.7L306.4,60.7L309.4,59.2L307.2,57.4L302.1,58.6L298.4,59.2L296.7,56.3L297.0,51.6L297.7,49.1L302.1,43.4L302.5,41.7L299.9,40.6L297.7,41.7L296.7,45.1L293.3,49.4L290.9,53.2L290.7,56.3L293.1,59.2L290.4,62.9L289.7,66.2L289.0,69.7L286.5,71.5L284.5,71.8L283.9,69.4L282.9,64.9L281.7,62.1L281.0,60.7L278.8,63.5L275.9,64.9L273.7,62.1L273.0,56.3L273.3,53.2L275.9,50.1L279.5,47.8L281.7,44.1L284.6,38.1L286.8,32.5L290.4,28.5L293.3,24.3L297.7,22.2L302.8,19.5L306.4,20.0L310.8,23.0L309.4,25.6L313.7,26.8L318.1,27.7L325.4,34.4L325.4,38.1L321.7,39.9L316.6,37.4L313.7,37.0L315.9,43.4L319.5,46.8L320.3,43.4L323.9,44.8L323.9,39.9L326.8,38.1L329.7,39.2L330.4,30.5L332.6,32.5L333.4,36.3L335.5,33.6L342.8,30.5L344.3,31.3L350.1,28.9L353.7,25.2L354.5,29.3L358.8,27.3L364.6,30.5L366.1,28.9L363.2,25.6L362.9,20.0L365.4,13.0L371.2,11.5L371.6,20.0L370.5,28.5L372.6,32.5L371.2,37.4L373.4,34.4L374.1,28.5L372.9,20.0L374.1,11.5L377.7,15.4L382.1,14.4L383.6,8.0L391.6,6.5L392.3,-0.0L401.0,-5.8L411.2,-8.3L417.0,-16.7L421.4,-12.1L430.1,-5.8L419.9,9.0L425.8,6.5L430.8,8.0L437.4,8.0L444.7,10.5L450.5,13.0L454.1,20.0L457.8,17.7L463.6,17.7L469.4,12.0L470.9,13.0L478.1,14.0L484.0,17.7L488.3,20.0L498.5,24.3L498.5,26.4L505.8,26.4L513.8,28.5L513.8,24.3L521.8,25.2L527.6,28.5L534.9,35.1L539.7,39.9L537.5,44.1L534.1,43.4L530.5,41.7L527.6,43.4L524.7,45.8L524.0,51.6L518.9,53.8L513.8,59.2L505.0,59.8L502.9,64.9L501.4,70.2L498.5,77.7L494.1,82.5L492.7,80.1L492.2,72.8L492.7,67.6L495.6,63.5L499.2,57.7L503.6,54.1L498.5,54.7L494.1,54.7L491.2,60.7L485.4,61.2L478.1,61.2L472.3,62.1L466.5,68.9L462.9,73.5L466.5,75.3L470.9,77.7L470.1,84.7L467.9,89.2L466.5,92.4L462.9,97.6L457.8,99.6L455.9,101.0L454.4,103.5L451.9,105.4L451.2,106.7L453.8,111.0L453.8,113.7L451.9,114.6L449.8,115.6L449.6,111.9L450.2,110.1L447.6,109.1L448.3,106.3L446.4,105.4L443.2,107.3L442.5,103.9L438.8,106.9L437.1,107.7L438.6,109.9L441.8,109.7L443.9,110.6L441.0,112.8L439.3,114.6L441.5,119.0L443.1,121.5L442.5,124.0L442.5,126.5L440.3,129.0L438.8,131.4L435.9,133.8L431.6,135.7L427.2,137.0L426.2,138.8L425.5,137.0L422.8,137.0L420.7,138.8L419.6,140.8L421.4,143.9L423.6,146.2L424.7,149.9L424.3,152.2L421.4,153.6L419.2,155.9L418.3,156.3L418.5,154.4L416.3,153.5L414.8,151.4L412.7,150.4L411.5,149.3L411.2,151.4L410.2,154.4L411.6,157.3L412.7,159.1L414.5,160.0L416.1,162.4L416.3,165.4L417.3,167.0L416.1,167.1L413.1,164.9L411.8,161.7L411.5,159.5L408.7,157.3L409.2,154.4L409.3,151.4L407.9,146.9L407.6,144.3L404.7,145.6L402.9,145.4L403.2,142.4L401.7,139.6L399.6,137.0L398.8,135.4L397.1,136.2L394.5,136.6L392.3,137.3L391.6,139.3L389.4,140.1L385.4,144.3L382.4,146.2L382.4,149.9L381.8,152.9L381.1,153.9L380.6,155.4L379.5,156.0L378.5,157.2L377.0,155.9L376.0,152.2L374.5,149.9L373.7,146.9L372.4,143.9L371.6,140.8L371.5,137.7L370.8,137.4L368.3,138.0L366.1,135.7L367.6,134.6L364.9,133.5L363.6,131.7L362.5,130.8L355.9,131.1L350.1,130.4L348.6,128.2L347.6,127.8L345.0,128.8L342.8,127.8L340.6,126.7L339.2,124.0L337.0,122.5L335.5,123.2L335.5,124.0L336.7,126.9L338.5,129.0L339.2,130.6L340.2,132.2L340.6,129.8L341.4,132.7L344.3,132.7L347.2,130.1L347.8,129.3L347.9,132.2L350.8,133.5L352.7,135.4L351.1,138.5L349.8,140.8L346.5,143.1L342.1,145.1L337.0,148.0L331.9,149.9L329.0,150.4L328.0,147.2L327.5,144.7L324.6,140.1L322.4,137.0L321.7,133.8L319.5,130.6L316.9,126.5L316.5,124.0L315.6,126.7L313.7,125.4L313.0,123.2L312.7,121.2L315.5,121.0L316.6,118.4L317.9,114.6L318.1,111.5L315.9,111.3L313.7,112.4L310.1,111.9L307.9,111.9L305.6,111.0L304.3,108.2L304.7,106.3L303.8,105.0L307.9,104.1L307.9,103.1L311.5,103.1L314.4,101.5L316.9,101.5L318.8,102.9L321.7,103.5L323.9,103.5L326.2,102.3L326.1,100.4L322.4,97.6L320.3,95.5L321.0,92.8L322.9,90.9L320.3,92.0L317.4,93.0L318.8,94.9L317.4,95.5L315.2,96.8L314.4,95.1L313.0,94.5L314.4,93.2L312.3,92.4L310.5,92.4L308.9,94.5L307.5,96.5L306.4,98.8L306.0,100.6L307.2,102.5L307.9,103.3L305.7,103.7L304.0,105.0L303.5,103.9L300.6,103.7L300.3,105.4L298.9,104.6L298.7,106.3L299.5,107.7L300.6,109.1L299.5,109.5L299.2,111.9L298.1,111.7L297.0,111.0L296.5,108.6L294.8,106.0L293.9,104.4L294.1,101.9L292.6,100.6L290.4,99.2L288.3,97.2L286.8,95.1L285.6,94.3L283.6,94.9L283.7,97.2L285.5,98.6L286.8,101.2L289.0,101.7L289.0,102.7L292.6,105.2L291.9,105.8L290.4,104.4L289.7,106.0L290.7,107.3L289.7,108.6L289.0,109.1L288.5,109.1L289.0,107.3L288.3,105.4L286.8,104.1L284.6,103.1L283.5,101.9L281.7,100.6L281.0,99.6L280.3,97.6L278.4,96.8L276.6,98.0L274.4,99.4L272.2,98.8L270.4,99.2L270.4,101.5L268.9,102.9L266.7,103.9L265.3,106.3L266.0,107.7L264.7,109.1L263.2,110.4L262.5,111.3L259.2,111.5ZM-266.2,112.8L-267.3,111.5L-268.9,110.6L-271.0,111.0L-270.9,108.2L-271.9,107.7L-270.9,103.5L-271.5,99.6L-269.7,98.2L-265.4,98.6L-260.7,98.8L-259.8,95.5L-259.8,93.4L-261.7,90.7L-264.9,89.2L-264.8,87.9L-262.5,87.4L-260.4,87.6L-260.4,85.4L-257.8,85.9L-255.9,84.3L-255.8,82.7L-253.0,81.5L-251.6,78.9L-251.1,77.7L-247.9,76.5L-245.6,75.3L-246.0,71.5L-246.2,67.6L-242.8,65.7L-242.8,68.9L-243.5,71.5L-242.4,75.3L-239.9,74.3L-237.4,75.3L-234.1,74.0L-231.2,73.3L-229.3,74.0L-227.5,72.0L-227.5,67.6L-225.4,65.7L-222.7,67.0L-222.7,64.0L-223.9,61.5L-220.3,60.7L-217.4,60.7L-214.4,59.2L-216.6,57.4L-221.7,58.6L-225.4,59.2L-227.1,56.3L-226.8,51.6L-226.1,49.1L-221.7,43.4L-221.3,41.7L-223.9,40.6L-226.1,41.7L-227.1,45.1L-230.5,49.4L-232.9,53.2L-233.1,56.3L-230.7,59.2L-233.4,62.9L-234.1,66.2L-234.8,69.7L-237.3,71.5L-239.3,71.8L-239.9,69.4L-240.9,64.9L-242.1,62.1L-242.8,60.7L-245.0,63.5L-247.9,64.9L-250.1,62.1L-250.8,56.3L-250.5,53.2L-247.9,50.1L-244.3,47.8L-242.1,44.1L-239.2,38.1L-237.0,32.5L-233.4,28.5L-230.5,24.3L-226.1,22.2L-221.0,19.5L-217.4,20.0L-213.0,23.0L-214.4,25.6L-210.1,26.8L-205.7,27.7L-198.4,34.4L-198.4,38.1L-202.1,39.9L-207.2,37.4L-210.1,37.0L-207.9,43.4L-204.3,46.8L-203.5,43.4L-199.9,44.8L-199.9,39.9L-197.0,38.1L-194.1,39.2L-193.4,30.5L-191.2,32.5L-190.4,36.3L-188.3,33.6L-181.0,30.5L-179.5,31.3L-173.7,28.9L-170.1,25.2L-169.3,29.3L-165.0,27.3L-159.2,30.5L-157.7,28.9L-160.6,25.6L-160.9,20.0L-158.4,13.0L-152.6,11.5L-152.2,20.0L-153.3,28.5L-151.2,32.5L-152.6,37.4L-150.4,34.4L-149.7,28.5L-150.9,20.0L-149.7,11.5L-146.1,15.4L-141.7,14.4L-140.2,8.0L-132.2,6.5L-131.5,-0.0L-122.8,-5.8L-112.6,-8.3L-106.8,-16.7L-102.4,-12.1L-93.7,-5.8L-103.9,9.0L-98.0,6.5L-93.0,8.0L-86.4,8.0L-79.1,10.5L-73.3,13.0L-69.7,20.0L-66.0,17.7L-60.2,17.7L-54.4,12.0L-52.9,13.0L-45.7,14.0L-39.8,17.7L-35.5,20.0L-25.3,24.3L-25.3,26.4L-18.0,26.4L-10.0,28.5L-10.0,24.3L-2.0,25.2L3.8,28.5L11.1,35.1L15.9,39.9L13.7,44.1L10.3,43.4L6.7,41.7L3.8,43.4L0.9,45.8L0.2,51.6L-4.9,53.8L-10.0,59.2L-18.8,59.8L-20.9,64.9L-22.4,70.2L-25.3,77.7L-29.7,82.5L-31.1,80.1L-31.6,72.8L-31.1,67.6L-28.2,63.5L-24.6,57.7L-20.2,54.1L-25.3,54.7L-29.7,54.7L-32.6,60.7L-38.4,61.2L-45.7,61.2L-51.5,62.1L-57.3,68.9L-60.9,73.5L-57.3,75.3L-52.9,77.7L-53.7,84.7L-55.9,89.2L-57.3,92.4L-60.9,97.6L-66.0,99.6L-67.9,101.0L-69.4,103.5L-71.9,105.4L-72.6,106.7L-70.0,111.0L-70.0,113.7L-71.9,114.6L-74.0,115.6L-74.2,111.9L-73.6,110.1L-76.2,109.1L-75.5,106.3L-77.4,105.4L-80.6,107.3L-81.3,103.9L-85.0,106.9L-86.7,107.7L-85.2,109.9L-82.0,109.7L-79.9,110.6L-82.8,112.8L-84.5,114.6L-82.3,119.0L-80.7,121.5L-81.3,124.0L-81.3,126.5L-83.5,129.0L-85.0,131.4L-87.9,133.8L-92.2,135.7L-96.6,137.0L-97.6,138.8L-98.3,137.0L-101.0,137.0L-103.1,138.8L-104.2,140.8L-102.4,143.9L-100.2,146.2L-99.1,149.9L-99.5,152.2L-102.4,153.6L-104.6,155.9L-105.5,156.3L-105.3,154.4L-107.5,153.5L-109.0,151.4L-111.1,150.4L-112.3,149.3L-112.6,151.4L-113.6,154.4L-112.2,157.3L-111.1,159.1L-109.3,160.0L-107.7,162.4L-107.5,165.4L-106.5,167.0L-107.7,167.1L-110.7,164.9L-112.0,161.7L-112.3,159.5L-115.1,157.3L-114.6,154.4L-114.5,151.4L-115.9,146.9L-116.2,144.3L-119.1,145.6L-120.9,145.4L-120.6,142.4L-122.1,139.6L-124.2,137.0L-125.0,135.4L-126.7,136.2L-129.3,136.6L-131.5,137.3L-132.2,139.3L-134.4,140.1L-138.4,144.3L-141.4,146.2L-141.4,149.9L-142.0,152.9L-142.7,153.9L-143.2,155.4L-144.3,156.0L-145.3,157.2L-146.8,155.9L-147.8,152.2L-149.3,149.9L-150.1,146.9L-151.4,143.9L-152.2,140.8L-152.3,137.7L-153.0,137.4L-155.5,138.0L-157.7,135.7L-156.2,134.6L-158.9,133.5L-160.2,131.7L-161.3,130.8L-167.9,131.1L-173.7,130.4L-175.2,128.2L-176.2,127.8L-178.8,128.8L-181.0,127.8L-183.2,126.7L-184.6,124.0L-186.8,122.5L-188.3,123.2L-188.3,124.0L-187.1,126.9L-185.3,129.0L-184.6,130.6L-183.6,132.2L-183.2,129.8L-182.4,132.7L-179.5,132.7L-176.6,130.1L-176.0,129.3L-175.9,132.2L-173.0,133.5L-171.1,135.4L-172.7,138.5L-174.0,140.8L-177.3,143.1L-181.7,145.1L-186.8,148.0L-191.9,149.9L-194.8,150.4L-195.8,147.2L-196.3,144.7L-199.2,140.1L-201.4,137.0L-202.1,133.8L-204.3,130.6L-206.9,126.5L-207.3,124.0L-208.2,126.7L-210.1,125.4L-210.8,123.2L-211.1,121.2L-208.3,121.0L-207.2,118.4L-205.9,114.6L-205.7,111.5L-207.9,111.3L-210.1,112.4L-213.7,111.9L-215.9,111.9L-218.2,111.0L-219.5,108.2L-219.1,106.3L-220.0,105.0L-215.9,104.1L-215.9,103.1L-212.3,103.1L-209.4,101.5L-206.9,101.5L-205.0,102.9L-202.1,103.5L-199.9,103.5L-197.6,102.3L-197.7,100.4L-201.4,97.6L-203.5,95.5L-202.8,92.8L-200.9,90.9L-203.5,92.0L-206.4,93.0L-205.0,94.9L-206.4,95.5L-208.6,96.8L-209.4,95.1L-210.8,94.5L-209.4,93.2L-211.5,92.4L-213.3,92.4L-214.9,94.5L-216.3,96.5L-217.4,98.8L-217.8,100.6L-216.6,102.5L-215.9,103.3L-218.1,103.7L-219.8,105.0L-220.3,103.9L-223.2,103.7L-223.5,105.4L-224.9,104.6L-225.1,106.3L-224.3,107.7L-223.2,109.1L-224.3,109.5L-224.6,111.9L-225.7,111.7L-226.8,111.0L-227.3,108.6L-229.0,106.0L-229.9,104.4L-229.7,101.9L-231.2,100.6L-233.4,99.2L-235.5,97.2L-237.0,95.1L-238.2,94.3L-240.2,94.9L-240.1,97.2L-238.3,98.6L-237.0,101.2L-234.8,101.7L-234.8,102.7L-231.2,105.2L-231.9,105.8L-233.4,104.4L-234.1,106.0L-233.1,107.3L-234.1,108.6L-234.8,109.1L-235.3,109.1L-234.8,107.3L-235.5,105.4L-237.0,104.1L-239.2,103.1L-240.3,101.9L-242.1,100.6L-242.8,99.6L-243.5,97.6L-245.4,96.8L-247.2,98.0L-249.4,99.4L-251.6,98.8L-253.4,99.2L-253.4,101.5L-254.9,102.9L-257.1,103.9L-258.5,106.3L-257.8,107.7L-259.1,109.1L-260.6,110.4L-261.3,111.3L-264.6,111.5ZM781.4,112.8L780.3,111.5L778.7,110.6L776.6,111.0L776.7,108.2L775.7,107.7L776.7,103.5L776.1,99.6L777.9,98.2L782.2,98.6L786.9,98.8L787.8,95.5L787.8,93.4L785.9,90.7L782.7,89.2L782.8,87.9L785.1,87.4L787.2,87.6L787.2,85.4L789.8,85.9L791.7,84.3L791.8,82.7L794.6,81.5L796.0,78.9L796.5,77.7L799.7,76.5L802.0,75.3L801.6,71.5L801.4,67.6L804.8,65.7L804.8,68.9L804.1,71.5L805.2,75.3L807.7,74.3L810.2,75.3L813.5,74.0L816.4,73.3L818.3,74.0L820.1,72.0L820.1,67.6L822.2,65.7L824.9,67.0L824.9,64.0L823.7,61.5L827.3,60.7L830.2,60.7L833.2,59.2L831.0,57.4L825.9,58.6L822.2,59.2L820.5,56.3L820.8,51.6L821.5,49.1L825.9,43.4L826.3,41.7L823.7,40.6L821.5,41.7L820.5,45.1L817.1,49.4L814.7,53.2L814.5,56.3L816.9,59.2L814.2,62.9L813.5,66.2L812.8,69.7L810.3,71.5L808.3,71.8L807.7,69.4L806.7,64.9L805.5,62.1L804.8,60.7L802.6,63.5L799.7,64.9L797.5,62.1L796.8,56.3L797.1,53.2L799.7,50.1L803.3,47.8L805.5,44.1L808.4,38.1L810.6,32.5L814.2,28.5L817.1,24.3L821.5,22.2L826.6,19.5L830.2,20.0L834.6,23.0L833.2,25.6L837.5,26.8L841.9,27.7L849.2,34.4L849.2,38.1L845.5,39.9L840.4,37.4L837.5,37.0L839.7,43.4L843.3,46.8L844.1,43.4L847.7,44.8L847.7,39.9L850.6,38.1L853.5,39.2L854.2,30.5L856.4,32.5L857.2,36.3L859.3,33.6L866.6,30.5L868.1,31.3L873.9,28.9L877.5,25.2L878.3,29.3L882.6,27.3L888.4,30.5L889.9,28.9L887.0,25.6L886.7,20.0L889.2,13.0L895.0,11.5L895.4,20.0L894.3,28.5L896.4,32.5L895.0,37.4L897.2,34.4L897.9,28.5L896.7,20.0L897.9,11.5L901.5,15.4L905.9,14.4L907.4,8.0L915.4,6.5L916.1,-0.0L924.8,-5.8L935.0,-8.3L940.8,-16.7L945.2,-12.1L953.9,-5.8L943.7,9.0L949.6,6.5L954.6,8.0L961.2,8.0L968.5,10.5L974.3,13.0L977.9,20.0L981.6,17.7L987.4,17.7L993.2,12.0L994.7,13.0L1001.9,14.0L1007.8,17.7L1012.1,20.0L1022.3,24.3L1022.3,26.4L1029.6,26.4L1037.6,28.5L1037.6,24.3L1045.6,25.2L1051.4,28.5L1058.7,35.1L1063.5,39.9L1061.3,44.1L1057.9,43.4L1054.3,41.7L1051.4,43.4L1048.5,45.8L1047.8,51.6L1042.7,53.8L1037.6,59.2L1028.8,59.8L1026.7,64.9L1025.2,70.2L1022.3,77.7L1017.9,82.5L1016.5,80.1L1016.0,72.8L1016.5,67.6L1019.4,63.5L1023.0,57.7L1027.4,54.1L1022.3,54.7L1017.9,54.7L1015.0,60.7L1009.2,61.2L1001.9,61.2L996.1,62.1L990.3,68.9L986.7,73.5L990.3,75.3L994.7,77.7L993.9,84.7L991.7,89.2L990.3,92.4L986.7,97.6L981.6,99.6L979.7,101.0L978.2,103.5L975.7,105.4L975.0,106.7L977.6,111.0L977.6,113.7L975.7,114.6L973.6,115.6L973.4,111.9L974.0,110.1L971.4,109.1L972.1,106.3L970.2,105.4L967.0,107.3L966.3,103.9L962.6,106.9L960.9,107.7L962.4,109.9L965.6,109.7L967.7,110.6L964.8,112.8L963.1,114.6L965.3,119.0L966.9,121.5L966.3,124.0L966.3,126.5L964.1,129.0L962.6,131.4L959.7,133.8L955.4,135.7L951.0,137.0L950.0,138.8L949.3,137.0L946.6,137.0L944.5,138.8L943.4,140.8L945.2,143.9L947.4,146.2L948.5,149.9L948.1,152.2L945.2,153.6L943.0,155.9L942.1,156.3L942.3,154.4L940.1,153.5L938.6,151.4L936.5,150.4L935.3,149.3L935.0,151.4L934.0,154.4L935.4,157.3L936.5,159.1L938.3,160.0L939.9,162.4L940.1,165.4L941.1,167.0L939.9,167.1L936.9,164.9L935.6,161.7L935.3,159.5L932.5,157.3L933.0,154.4L933.1,151.4L931.7,146.9L931.4,144.3L928.5,145.6L926.7,145.4L927.0,142.4L925.5,139.6L923.4,137.0L922.6,135.4L920.9,136.2L918.3,136.6L916.1,137.3L915.4,139.3L913.2,140.1L909.2,144.3L906.2,146.2L906.2,149.9L905.6,152.9L904.9,153.9L904.4,155.4L903.3,156.0L902.3,157.2L900.8,155.9L899.8,152.2L898.3,149.9L897.5,146.9L896.2,143.9L895.4,140.8L895.3,137.7L894.6,137.4L892.1,138.0L889.9,135.7L891.4,134.6L888.7,133.5L887.4,131.7L886.3,130.8L879.7,131.1L873.9,130.4L872.4,128.2L871.4,127.8L868.8,128.8L866.6,127.8L864.4,126.7L863.0,124.0L860.8,122.5L859.3,123.2L859.3,124.0L860.5,126.9L862.3,129.0L863.0,130.6L864.0,132.2L864.4,129.8L865.2,132.7L868.1,132.7L871.0,130.1L871.6,129.3L871.7,132.2L874.6,133.5L876.5,135.4L874.9,138.5L873.6,140.8L870.3,143.1L865.9,145.1L860.8,148.0L855.7,149.9L852.8,150.4L851.8,147.2L851.3,144.7L848.4,140.1L846.2,137.0L845.5,133.8L843.3,130.6L840.7,126.5L840.3,124.0L839.4,126.7L837.5,125.4L836.8,123.2L836.5,121.2L839.3,121.0L840.4,118.4L841.7,114.6L841.9,111.5L839.7,111.3L837.5,112.4L833.9,111.9L831.7,111.9L829.4,111.0L828.1,108.2L828.5,106.3L827.6,105.0L831.7,104.1L831.7,103.1L835.3,103.1L838.2,101.5L840.7,101.5L842.6,102.9L845.5,103.5L847.7,103.5L850.0,102.3L849.9,100.4L846.2,97.6L844.1,95.5L844.8,92.8L846.7,90.9L844.1,92.0L841.2,93.0L842.6,94.9L841.2,95.5L839.0,96.8L838.2,95.1L836.8,94.5L838.2,93.2L836.1,92.4L834.3,92.4L832.7,94.5L831.3,96.5L830.2,98.8L829.8,100.6L831.0,102.5L831.7,103.3L829.5,103.7L827.8,105.0L827.3,103.9L824.4,103.7L824.1,105.4L822.7,104.6L822.5,106.3L823.3,107.7L824.4,109.1L823.3,109.5L823.0,111.9L821.9,111.7L820.8,111.0L820.3,108.6L818.6,106.0L817.7,104.4L817.9,101.9L816.4,100.6L814.2,99.2L812.1,97.2L810.6,95.1L809.4,94.3L807.4,94.9L807.5,97.2L809.3,98.6L810.6,101.2L812.8,101.7L812.8,102.7L816.4,105.2L815.7,105.8L814.2,104.4L813.5,106.0L814.5,107.3L813.5,108.6L812.8,109.1L812.3,109.1L812.8,107.3L812.1,105.4L810.6,104.1L808.4,103.1L807.3,101.9L805.5,100.6L804.8,99.6L804.1,97.6L802.2,96.8L800.4,98.0L798.2,99.4L796.0,98.8L794.2,99.2L794.2,101.5L792.7,102.9L790.5,103.9L789.1,106.3L789.8,107.7L788.5,109.1L787.0,110.4L786.3,111.3L783.0,111.5ZM257.4,84.5L260.6,84.1L263.5,83.1L267.6,82.0L268.2,78.5L266.1,77.7L265.4,75.3L263.5,72.8L262.8,70.2L262.8,65.7L259.9,65.7L261.0,63.2L258.4,63.2L257.0,66.2L257.7,70.2L258.4,72.8L260.9,73.0L261.3,75.8L259.2,77.0L259.6,79.4L258.1,80.6L261.0,81.5L259.4,82.5ZM-266.4,84.5L-263.2,84.1L-260.3,83.1L-256.2,82.0L-255.6,78.5L-257.7,77.7L-258.4,75.3L-260.3,72.8L-261.0,70.2L-261.0,65.7L-263.9,65.7L-262.8,63.2L-265.4,63.2L-266.8,66.2L-266.1,70.2L-265.4,72.8L-262.9,73.0L-262.5,75.8L-264.6,77.0L-264.2,79.4L-265.7,80.6L-262.8,81.5L-264.4,82.5ZM781.2,84.5L784.4,84.1L787.3,83.1L791.4,82.0L792.0,78.5L789.9,77.7L789.2,75.3L787.3,72.8L786.6,70.2L786.6,65.7L783.7,65.7L784.8,63.2L782.2,63.2L780.8,66.2L781.5,70.2L782.2,72.8L784.7,73.0L785.1,75.8L783.0,77.0L783.4,79.4L781.9,80.6L784.8,81.5L783.2,82.5ZM251.2,81.1L254.1,80.8L256.7,79.6L257.0,76.5L257.6,73.8L256.2,72.0L253.8,72.3L253.3,74.3L251.2,74.8L251.9,77.2L251.2,79.6ZM-272.6,81.1L-269.7,80.8L-267.1,79.6L-266.8,76.5L-266.2,73.8L-267.6,72.0L-270.0,72.3L-270.5,74.3L-272.6,74.8L-271.9,77.2L-272.6,79.6ZM775.0,81.1L777.9,80.8L780.5,79.6L780.8,76.5L781.4,73.8L780.0,72.0L777.6,72.3L777.1,74.3L775.0,74.8L775.7,77.2L775.0,79.6ZM283.9,109.1L288.4,108.8L287.8,111.5L283.9,109.9ZM-239.9,109.1L-235.4,108.8L-236.0,111.5L-239.9,109.9ZM807.7,109.1L812.2,108.8L811.6,111.5L807.7,109.9ZM277.6,107.3L279.8,106.9L279.8,103.5L277.8,103.9ZM-246.2,107.3L-244.0,106.9L-244.0,103.5L-246.0,103.9ZM801.4,107.3L803.6,106.9L803.6,103.5L801.6,103.9ZM340.6,17.7L343.5,9.0L345.7,1.6L349.4,-3.5L355.9,-7.7L364.6,-12.1L366.1,-8.9L358.8,-3.5L353.0,2.7L350.1,10.5L348.6,17.7L348.6,21.7L344.3,21.3ZM-183.2,17.7L-180.3,9.0L-178.1,1.6L-174.4,-3.5L-167.9,-7.7L-159.2,-12.1L-157.7,-8.9L-165.0,-3.5L-170.8,2.7L-173.7,10.5L-175.2,17.7L-175.2,21.7L-179.5,21.3ZM864.4,17.7L867.3,9.0L869.5,1.6L873.2,-3.5L879.7,-7.7L888.4,-12.1L889.9,-8.9L882.6,-3.5L876.8,2.7L873.9,10.5L872.4,17.7L872.4,21.7L868.1,21.3ZM465.0,-1.7L472.3,6.5L484.0,-0.0L476.7,-5.8L465.0,-5.8ZM-58.8,-1.7L-51.5,6.5L-39.8,-0.0L-47.1,-5.8L-58.8,-5.8ZM988.8,-1.7L996.1,6.5L1007.8,-0.0L1000.5,-5.8L988.8,-5.8ZM281.7,-26.1L290.4,-9.5L300.6,-18.8L305.0,-34.1L290.4,-36.7ZM-242.1,-26.1L-233.4,-9.5L-223.2,-18.8L-218.8,-34.1L-233.4,-36.7ZM805.5,-26.1L814.2,-9.5L824.4,-18.8L828.8,-34.1L814.2,-36.7ZM456.2,116.3L457.8,116.0L462.1,115.5L464.7,115.5L467.7,115.1L469.4,114.2L470.6,111.9L470.9,109.1L472.3,106.0L471.4,102.7L469.7,103.5L469.4,106.0L468.7,108.2L465.8,111.0L464.7,110.4L463.6,112.8L462.9,113.5L459.2,113.7L456.3,115.5ZM-67.6,116.3L-66.0,116.0L-61.7,115.5L-59.1,115.5L-56.1,115.1L-54.4,114.2L-53.2,111.9L-52.9,109.1L-51.5,106.0L-52.4,102.7L-54.1,103.5L-54.4,106.0L-55.1,108.2L-58.0,111.0L-59.1,110.4L-60.2,112.8L-60.9,113.5L-64.6,113.7L-67.5,115.5ZM980.0,116.3L981.6,116.0L985.9,115.5L988.5,115.5L991.5,115.1L993.2,114.2L994.4,111.9L994.7,109.1L996.1,106.0L995.2,102.7L993.5,103.5L993.2,106.0L992.5,108.2L989.6,111.0L988.5,110.4L987.4,112.8L986.7,113.5L983.0,113.7L980.1,115.5ZM469.4,102.5L470.9,100.6L474.2,101.5L477.4,99.0L475.7,97.6L472.0,94.5L471.6,98.6L469.8,99.6ZM-54.4,102.5L-52.9,100.6L-49.6,101.5L-46.4,99.0L-48.1,97.6L-51.8,94.5L-52.2,98.6L-54.0,99.6ZM993.2,102.5L994.7,100.6L998.0,101.5L1001.2,99.0L999.5,97.6L995.8,94.5L995.4,98.6L993.6,99.6ZM454.9,117.2L457.3,117.0L457.0,120.7L455.3,121.2L454.4,118.1ZM-68.9,117.2L-66.5,117.0L-66.8,120.7L-68.5,121.2L-69.4,118.1ZM978.7,117.2L981.1,117.0L980.8,120.7L979.1,121.2L978.2,118.1ZM472.3,74.5L473.8,77.7L474.2,82.5L475.2,87.0L473.8,91.8L472.3,93.4L472.3,89.2L472.3,84.7L472.0,80.1ZM-51.5,74.5L-50.0,77.7L-49.6,82.5L-48.6,87.0L-50.0,91.8L-51.5,93.4L-51.5,89.2L-51.5,84.7L-51.8,80.1ZM996.1,74.5L997.6,77.7L998.0,82.5L999.0,87.0L997.6,91.8L996.1,93.4L996.1,89.2L996.1,84.7L995.8,80.1ZM441.8,131.1L443.2,131.7L441.5,136.2L440.4,134.1ZM-82.0,131.1L-80.6,131.7L-82.3,136.2L-83.4,134.1ZM965.6,131.1L967.0,131.7L965.3,136.2L964.2,134.1ZM423.9,140.5L426.5,139.3L427.2,139.8L425.0,142.1ZM-99.9,140.5L-97.3,139.3L-96.6,139.8L-98.8,142.1ZM947.7,140.5L950.3,139.3L951.0,139.8L948.8,142.1ZM381.8,154.8L383.8,156.6L384.7,158.8L382.8,160.3L381.8,158.1ZM-142.0,154.8L-140.0,156.6L-139.1,158.8L-141.0,160.3L-142.0,158.1ZM905.6,154.8L907.6,156.6L908.5,158.8L906.6,160.3L905.6,158.1ZM441.0,141.6L443.5,141.8L443.2,144.7L442.5,146.9L445.4,148.7L446.1,150.4L443.9,149.2L441.8,148.7L440.7,147.2L440.2,145.0ZM-82.8,141.6L-80.3,141.8L-80.6,144.7L-81.3,146.9L-78.4,148.7L-77.7,150.4L-79.9,149.2L-82.0,148.7L-83.1,147.2L-83.6,145.0ZM964.8,141.6L967.3,141.8L967.0,144.7L966.3,146.9L969.2,148.7L969.9,150.4L967.7,149.2L965.6,148.7L964.5,147.2L964.0,145.0ZM443.2,158.8L445.4,156.4L448.2,154.8L449.8,158.1L448.3,160.5L446.1,159.5ZM-80.6,158.8L-78.4,156.4L-75.6,154.8L-74.0,158.1L-75.5,160.5L-77.7,159.5ZM967.0,158.8L969.2,156.4L972.0,154.8L973.6,158.1L972.1,160.5L969.9,159.5ZM424.3,166.8L425.8,166.5L427.6,165.4L430.1,164.2L433.0,161.7L435.6,158.8L437.0,159.8L438.8,161.4L437.4,162.7L437.0,164.6L438.6,167.5L436.7,168.3L436.7,170.5L435.2,172.2L434.5,174.8L432.3,174.8L430.1,173.7L427.9,173.8L426.0,173.1L425.8,171.2L424.3,169.0ZM-99.5,166.8L-98.0,166.5L-96.2,165.4L-93.7,164.2L-90.8,161.7L-88.2,158.8L-86.8,159.8L-85.0,161.4L-86.4,162.7L-86.8,164.6L-85.2,167.5L-87.1,168.3L-87.1,170.5L-88.6,172.2L-89.3,174.8L-91.5,174.8L-93.7,173.7L-95.9,173.8L-97.8,173.1L-98.0,171.2L-99.5,169.0ZM948.1,166.8L949.6,166.5L951.4,165.4L953.9,164.2L956.8,161.7L959.4,158.8L960.8,159.8L962.6,161.4L961.2,162.7L960.8,164.6L962.4,167.5L960.5,168.3L960.5,170.5L959.0,172.2L958.3,174.8L956.1,174.8L953.9,173.7L951.7,173.8L949.8,173.1L949.6,171.2L948.1,169.0ZM404.4,160.8L407.6,161.4L411.6,165.4L413.4,166.1L416.3,169.0L417.7,171.9L419.9,173.7L419.6,177.5L417.7,177.3L414.5,174.8L412.4,172.2L410.5,169.4L409.0,166.5L406.8,164.2ZM-119.4,160.8L-116.2,161.4L-112.2,165.4L-110.4,166.1L-107.5,169.0L-106.1,171.9L-103.9,173.7L-104.2,177.5L-106.1,177.3L-109.3,174.8L-111.4,172.2L-113.3,169.4L-114.8,166.5L-117.0,164.2ZM928.2,160.8L931.4,161.4L935.4,165.4L937.2,166.1L940.1,169.0L941.5,171.9L943.7,173.7L943.4,177.5L941.5,177.3L938.3,174.8L936.2,172.2L934.3,169.4L932.8,166.5L930.6,164.2ZM418.8,178.9L420.7,177.7L423.6,178.6L426.9,178.5L429.7,179.2L432.3,180.4L432.2,181.6L427.2,181.1L422.8,180.4L420.5,179.8ZM-105.0,178.9L-103.1,177.7L-100.2,178.6L-96.9,178.5L-94.1,179.2L-91.5,180.4L-91.6,181.6L-96.6,181.1L-101.0,180.4L-103.3,179.8ZM942.6,178.9L944.5,177.7L947.4,178.6L950.7,178.5L953.5,179.2L956.1,180.4L956.0,181.6L951.0,181.1L946.6,180.4L944.3,179.8ZM445.4,184.1L447.6,182.1L450.8,181.3L449.8,182.4L446.8,183.9ZM-78.4,184.1L-76.2,182.1L-73.0,181.3L-74.0,182.4L-77.0,183.9ZM969.2,184.1L971.4,182.1L974.6,181.3L973.6,182.4L970.6,183.9ZM440.0,167.8L441.5,167.1L444.7,167.7L447.9,166.7L446.8,168.4L441.8,168.4L440.6,170.2L442.5,170.3L445.1,170.2L445.1,170.7L442.9,171.8L443.9,173.8L444.7,175.6L443.6,176.3L442.5,175.1L441.8,173.1L440.7,173.4L440.9,177.0L439.6,177.0L439.6,174.1L438.6,173.1L439.6,170.5ZM-83.8,167.8L-82.3,167.1L-79.1,167.7L-75.9,166.7L-77.0,168.4L-82.0,168.4L-83.2,170.2L-81.3,170.3L-78.7,170.2L-78.7,170.7L-80.9,171.8L-79.9,173.8L-79.1,175.6L-80.2,176.3L-81.3,175.1L-82.0,173.1L-83.1,173.4L-82.9,177.0L-84.2,177.0L-84.2,174.1L-85.2,173.1L-84.2,170.5ZM963.8,167.8L965.3,167.1L968.5,167.7L971.7,166.7L970.6,168.4L965.6,168.4L964.4,170.2L966.3,170.3L968.9,170.2L968.9,170.7L966.7,171.8L967.7,173.8L968.5,175.6L967.4,176.3L966.3,175.1L965.6,173.1L964.5,173.4L964.7,177.0L963.4,177.0L963.4,174.1L962.4,173.1L963.4,170.5ZM456.3,170.2L458.5,169.6L460.7,170.2L462.1,173.8L465.0,171.3L470.9,172.8L475.9,174.5L478.1,176.3L480.7,177.7L479.6,178.9L481.8,181.4L485.0,184.1L481.0,183.9L478.1,181.0L475.2,180.2L473.8,182.1L470.9,182.3L467.9,180.7L466.5,181.1L467.7,178.9L466.5,177.0L462.9,175.4L459.2,174.8L458.9,173.1L460.7,172.3L458.5,172.2ZM-67.5,170.2L-65.3,169.6L-63.1,170.2L-61.7,173.8L-58.8,171.3L-52.9,172.8L-47.9,174.5L-45.7,176.3L-43.1,177.7L-44.2,178.9L-42.0,181.4L-38.8,184.1L-42.8,183.9L-45.7,181.0L-48.6,180.2L-50.0,182.1L-52.9,182.3L-55.9,180.7L-57.3,181.1L-56.1,178.9L-57.3,177.0L-60.9,175.4L-64.6,174.8L-64.9,173.1L-63.1,172.3L-65.3,172.2ZM980.1,170.2L982.3,169.6L984.5,170.2L985.9,173.8L988.8,171.3L994.7,172.8L999.7,174.5L1001.9,176.3L1004.5,177.7L1003.4,178.9L1005.6,181.4L1008.8,184.1L1004.8,183.9L1001.9,181.0L999.0,180.2L997.6,182.1L994.7,182.3L991.7,180.7L990.3,181.1L991.5,178.9L990.3,177.0L986.7,175.4L983.0,174.8L982.7,173.1L984.5,172.3L982.3,172.2ZM481.8,177.2L486.9,175.1L487.3,176.3L484.0,178.2ZM-42.0,177.2L-36.9,175.1L-36.5,176.3L-39.8,178.2ZM1005.6,177.2L1010.7,175.1L1011.1,176.3L1007.8,178.2ZM431.1,202.6L431.9,201.5L435.2,199.5L438.8,198.7L442.5,197.2L443.6,194.4L445.8,193.0L448.3,190.3L450.5,189.3L452.7,190.8L454.1,190.9L455.1,187.8L456.3,186.9L458.5,185.7L462.1,186.9L464.7,186.6L463.6,188.8L462.9,191.1L465.8,192.6L468.7,194.9L470.6,194.9L471.6,191.1L471.7,187.3L473.0,184.7L474.5,187.3L474.9,190.0L477.1,191.1L478.1,194.9L478.6,197.2L481.8,199.0L483.5,202.3L485.4,204.7L488.3,207.4L489.0,211.8L488.3,216.5L486.1,220.8L484.4,225.2L483.8,227.9L480.3,228.9L478.6,230.9L476.4,229.2L474.5,230.3L470.9,229.0L469.1,227.0L468.7,224.9L466.5,224.5L466.5,221.7L466.2,219.9L465.3,222.5L463.6,223.1L462.9,222.9L461.0,219.6L457.8,218.2L453.4,217.5L449.0,218.7L446.1,219.9L445.4,221.5L440.3,221.5L437.4,223.4L434.5,223.2L433.0,222.2L434.0,218.2L433.0,214.8L432.3,211.5L430.8,208.2L430.8,205.8ZM-92.7,202.6L-91.9,201.5L-88.6,199.5L-85.0,198.7L-81.3,197.2L-80.2,194.4L-78.0,193.0L-75.5,190.3L-73.3,189.3L-71.1,190.8L-69.7,190.9L-68.7,187.8L-67.5,186.9L-65.3,185.7L-61.7,186.9L-59.1,186.6L-60.2,188.8L-60.9,191.1L-58.0,192.6L-55.1,194.9L-53.2,194.9L-52.2,191.1L-52.1,187.3L-50.8,184.7L-49.3,187.3L-48.9,190.0L-46.7,191.1L-45.7,194.9L-45.2,197.2L-42.0,199.0L-40.3,202.3L-38.4,204.7L-35.5,207.4L-34.8,211.8L-35.5,216.5L-37.7,220.8L-39.4,225.2L-40.0,227.9L-43.5,228.9L-45.2,230.9L-47.4,229.2L-49.3,230.3L-52.9,229.0L-54.7,227.0L-55.1,224.9L-57.3,224.5L-57.3,221.7L-57.6,219.9L-58.5,222.5L-60.2,223.1L-60.9,222.9L-62.8,219.6L-66.0,218.2L-70.4,217.5L-74.8,218.7L-77.7,219.9L-78.4,221.5L-83.5,221.5L-86.4,223.4L-89.3,223.2L-90.8,222.2L-89.8,218.2L-90.8,214.8L-91.5,211.5L-93.0,208.2L-93.0,205.8ZM954.9,202.6L955.7,201.5L959.0,199.5L962.6,198.7L966.3,197.2L967.4,194.4L969.6,193.0L972.1,190.3L974.3,189.3L976.5,190.8L977.9,190.9L978.9,187.8L980.1,186.9L982.3,185.7L985.9,186.9L988.5,186.6L987.4,188.8L986.7,191.1L989.6,192.6L992.5,194.9L994.4,194.9L995.4,191.1L995.5,187.3L996.8,184.7L998.3,187.3L998.7,190.0L1000.9,191.1L1001.9,194.9L1002.4,197.2L1005.6,199.0L1007.3,202.3L1009.2,204.7L1012.1,207.4L1012.8,211.8L1012.1,216.5L1009.9,220.8L1008.2,225.2L1007.6,227.9L1004.1,228.9L1002.4,230.9L1000.2,229.2L998.3,230.3L994.7,229.0L992.9,227.0L992.5,224.9L990.3,224.5L990.3,221.7L990.0,219.9L989.1,222.5L987.4,223.1L986.7,222.9L984.8,219.6L981.6,218.2L977.2,217.5L972.8,218.7L969.9,219.9L969.2,221.5L964.1,221.5L961.2,223.4L958.3,223.2L956.8,222.2L957.8,218.2L956.8,214.8L956.1,211.5L954.6,208.2L954.6,205.8ZM476.2,233.9L478.9,234.7L481.5,234.3L481.3,237.4L479.6,239.4L478.1,239.4L477.0,236.8ZM-47.6,233.9L-44.9,234.7L-42.3,234.3L-42.5,237.4L-44.2,239.4L-45.7,239.4L-46.8,236.8ZM1000.0,233.9L1002.7,234.7L1005.3,234.3L1005.1,237.4L1003.4,239.4L1001.9,239.4L1000.8,236.8ZM517.0,222.4L519.3,224.3L521.1,226.1L521.8,228.1L525.1,228.1L524.5,231.1L523.2,231.7L522.9,233.6L520.8,235.7L519.9,235.1L520.6,232.8L518.6,231.3L519.9,229.8L519.9,227.4L519.2,225.8L517.4,223.8ZM-6.8,222.4L-4.5,224.3L-2.7,226.1L-2.0,228.1L1.3,228.1L0.7,231.1L-0.6,231.7L-0.9,233.6L-3.0,235.7L-3.9,235.1L-3.2,232.8L-5.2,231.3L-3.9,229.8L-3.9,227.4L-4.6,225.8L-6.4,223.8ZM1040.8,222.4L1043.1,224.3L1044.9,226.1L1045.6,228.1L1048.9,228.1L1048.3,231.1L1047.0,231.7L1046.7,233.6L1044.6,235.7L1043.7,235.1L1044.4,232.8L1042.4,231.3L1043.7,229.8L1043.7,227.4L1043.0,225.8L1041.2,223.8ZM517.0,233.6L519.3,235.9L517.1,239.8L514.9,241.0L514.1,244.1L511.6,245.8L509.4,245.0L508.0,244.1L510.1,240.8L513.8,238.4L515.2,235.9ZM-6.8,233.6L-4.5,235.9L-6.7,239.8L-8.9,241.0L-9.7,244.1L-12.2,245.8L-14.4,245.0L-15.8,244.1L-13.7,240.8L-10.0,238.4L-8.6,235.9ZM1040.8,233.6L1043.1,235.9L1040.9,239.8L1038.7,241.0L1037.9,244.1L1035.4,245.8L1033.2,245.0L1031.8,244.1L1033.9,240.8L1037.6,238.4L1039.0,235.9ZM166.8,305.5L172.6,294.6L181.3,288.6L182.8,291.2L175.5,298.1L172.6,307.5ZM-357.0,305.5L-351.2,294.6L-342.5,288.6L-341.0,291.2L-348.3,298.1L-351.2,307.5ZM690.6,305.5L696.4,294.6L705.1,288.6L706.6,291.2L699.3,298.1L696.4,307.5Z" fill="#343332" stroke="#191a1a" stroke-width="1" stroke-linejoin="round"/><path d="M337.7,110.1L339.9,111.3L344.3,111.0L344.0,106.9L342.8,105.4L342.5,102.5L345.0,101.5L342.1,100.0L339.9,96.5L342.8,95.1L342.8,92.0L339.9,91.3L337.0,92.4L334.8,94.5L333.8,96.5L334.8,99.6L336.4,101.9L337.7,104.4L337.0,106.9ZM350.5,96.5L352.3,98.0L354.5,95.5L354.5,92.8L352.3,92.4L350.8,93.9ZM416.7,81.1L418.5,81.5L421.4,78.9L425.3,74.0L425.8,70.7L424.3,71.0L422.8,74.8L419.9,77.7L417.7,79.6ZM372.6,94.9L374.8,92.8L379.9,92.8L380.6,92.0L377.0,91.5L373.4,92.4ZM309.6,59.2L313.4,58.3L313.0,55.4L310.1,55.0ZM315.9,56.3L318.5,55.4L317.4,51.6L315.6,52.3ZM312.0,169.7L313.0,168.6L315.5,168.6L315.6,170.5L314.4,172.9L312.3,172.9L311.8,171.2ZM308.2,173.9L309.1,173.9L309.6,177.7L311.1,181.6L310.2,181.9L308.6,178.5ZM315.0,182.9L316.0,183.0L316.8,186.6L317.1,190.2L316.0,190.0L315.6,186.6ZM131.8,92.0L136.2,89.2L140.6,88.1L142.5,91.3L142.3,92.4L139.1,92.4L134.8,92.0ZM138.0,101.5L140.1,101.5L141.6,94.9L142.0,93.7L139.1,94.1L137.7,96.5ZM142.8,93.7L147.1,93.4L149.3,95.5L148.6,96.5L146.8,99.2L145.7,99.6L144.2,97.6L144.5,95.1ZM144.5,102.3L147.8,102.1L150.8,100.2L150.8,99.6L147.1,100.2L144.6,101.5ZM149.7,99.0L154.7,98.6L154.4,97.2L150.8,97.8ZM121.7,83.6L125.3,83.6L123.8,75.8L121.4,76.5ZM95.5,56.3L99.8,56.3L104.2,51.6L107.1,50.7L103.5,50.1L98.4,52.6L95.5,54.7ZM83.8,43.4L89.6,43.4L94.0,39.9L93.3,36.3L88.2,37.4L83.8,39.9ZM103.5,62.9L108.6,62.1L112.2,61.2L108.6,60.1L105.7,61.2ZM115.8,68.9L118.0,68.9L118.0,64.9L115.8,64.9ZM140.6,152.6L142.0,152.6L142.0,151.4L140.9,151.3ZM163.9,191.5L164.9,191.8L165.6,193.3L164.6,193.0Z" fill="#191a1a"/></g></svg>
<div class="b" style="left:356.0px;top:282.9px;width:59.0px;height:59.0px;border-radius:50%;background:radial-gradient(circle closest-side,#fdd035 0%,#fdd035 52%,#fdd035ee 60%,#fdd035c0 68%,#fdd03580 77%,#fdd03540 86%,#fdd03514 94%,#fdd03500 100%);"></div>
<span class="t" style="left:375.82px;top:306.00px;font-size:12px;line-height:15px;color:#14182a;font-weight:700;-webkit-text-stroke:0.35px #14182a;">117</span>
<div class="b" style="left:413.1px;top:283.5px;width:59.0px;height:59.0px;border-radius:50%;background:radial-gradient(circle closest-side,#fdd035 0%,#fdd035 52%,#fdd035ee 60%,#fdd035c0 68%,#fdd03580 77%,#fdd03540 86%,#fdd03514 94%,#fdd03500 100%);"></div>
<span class="t" style="left:432.59px;top:306.00px;font-size:12px;line-height:15px;color:#14182a;font-weight:700;-webkit-text-stroke:0.35px #14182a;">338</span>
<div class="b" style="left:536.6px;top:246.6px;width:84.0px;height:84.0px;border-radius:50%;background:radial-gradient(circle closest-side,#e5521f 0%,#e5521f 52%,#e5521fee 60%,#e5521fc0 68%,#e5521f80 77%,#e5521f40 86%,#e5521f14 94%,#e5521f00 100%);"></div>
<span class="t" style="left:568.59px;top:282.00px;font-size:12px;line-height:15px;color:#14182a;font-weight:700;-webkit-text-stroke:0.35px #14182a;">801</span>
<div class="b" style="left:619.6px;top:258.8px;width:38.6px;height:38.6px;border-radius:50%;background:radial-gradient(circle closest-side,#8fc320 0%,#8fc320 52%,#8fc320ee 60%,#8fc320c0 68%,#8fc32080 77%,#8fc32040 86%,#8fc32014 94%,#8fc32000 100%);"></div>
<span class="t" style="left:632.23px;top:271.00px;font-size:12px;line-height:15px;color:#14182a;font-weight:700;-webkit-text-stroke:0.35px #14182a;">25</span>
<div class="b" style="left:612.1px;top:311.7px;width:38.6px;height:38.6px;border-radius:50%;background:radial-gradient(circle closest-side,#8fc320 0%,#8fc320 52%,#8fc320ee 60%,#8fc320c0 68%,#8fc32080 77%,#8fc32040 86%,#8fc32014 94%,#8fc32000 100%);"></div>
<span class="t" style="left:624.73px;top:324.00px;font-size:12px;line-height:15px;color:#14182a;font-weight:700;-webkit-text-stroke:0.35px #14182a;">18</span>
<div class="b" style="left:723.8px;top:288.7px;width:59.0px;height:59.0px;border-radius:50%;background:radial-gradient(circle closest-side,#fdd035 0%,#fdd035 52%,#fdd035ee 60%,#fdd035c0 68%,#fdd03580 77%,#fdd03540 86%,#fdd03514 94%,#fdd03500 100%);"></div>
<span class="t" style="left:746.63px;top:312.00px;font-size:12px;line-height:15px;color:#14182a;font-weight:700;-webkit-text-stroke:0.35px #14182a;">43</span>
<div class="b" style="left:681.5px;top:335.5px;width:38.6px;height:38.6px;border-radius:50%;background:radial-gradient(circle closest-side,#8fc320 0%,#8fc320 52%,#8fc320ee 60%,#8fc320c0 68%,#8fc32080 77%,#8fc32040 86%,#8fc32014 94%,#8fc32000 100%);"></div>
<span class="t" style="left:694.13px;top:348.00px;font-size:12px;line-height:15px;color:#14182a;font-weight:700;-webkit-text-stroke:0.35px #14182a;">31</span>
<div class="b" style="left:459.4px;top:382.3px;width:59.0px;height:59.0px;border-radius:50%;background:radial-gradient(circle closest-side,#fdd035 0%,#fdd035 52%,#fdd035ee 60%,#fdd035c0 68%,#fdd03580 77%,#fdd03540 86%,#fdd03514 94%,#fdd03500 100%);"></div>
<span class="t" style="left:482.23px;top:405.00px;font-size:12px;line-height:15px;color:#14182a;font-weight:700;-webkit-text-stroke:0.35px #14182a;">69</span>
<div class="b" style="left:719.4px;top:410.9px;width:28.0px;height:28.0px;border-radius:50%;background:#8fc320;border:1px solid rgba(255,255,255,0.5);"></div>
<span class="t" style="left:727.06px;top:418.00px;font-size:12px;line-height:15px;color:#14182a;font-weight:700;-webkit-text-stroke:0.35px #14182a;">11</span>
<div class="b" style="left:778.4px;top:406.2px;width:38.6px;height:38.6px;border-radius:50%;background:radial-gradient(circle closest-side,#8fc320 0%,#8fc320 52%,#8fc320ee 60%,#8fc320c0 68%,#8fc32080 77%,#8fc32040 86%,#8fc32014 94%,#8fc32000 100%);"></div>
<span class="t" style="left:791.03px;top:419.00px;font-size:12px;line-height:15px;color:#14182a;font-weight:700;-webkit-text-stroke:0.35px #14182a;">19</span>
<svg style="left:304.4px;top:463.4px" width="22" height="22" viewBox="0 0 22 22"><circle cx="11" cy="11" r="9.3" fill="#e9e9e9"/><circle cx="11.7" cy="10.3" r="5.3" fill="#191a1a"/><path d="M5.8 16.2L6.6 9.2L12.8 15.4Z" fill="#191a1a"/><path d="M11.9 7.4L12.8 9.5L14.9 10.4L12.8 11.3L11.9 13.4L11 11.3L8.9 10.4L11 9.5Z" fill="#e9e9e9"/></svg>
<span class="t" style="left:328.60px;top:464.00px;font-size:16px;line-height:20px;color:#ececec;font-weight:700;letter-spacing:0.026px;">mapbox</span>
<svg style="left:794px;top:458px" width="24" height="24" viewBox="0 0 24 24"><circle cx="12" cy="12" r="12" fill="#8e8e8e"/><circle cx="12" cy="12" r="7.2" fill="#050505"/><circle cx="12" cy="8.3" r="1.35" fill="#fff"/><rect x="10.9" y="10.6" width="2.2" height="6" fill="#fff"/></svg>
<svg style="left:298px;top:936px" width="530" height="170" viewBox="0 0 530 170"><defs><filter id="bl936" x="-5%" y="-5%" width="110%" height="110%" color-interpolation-filters="sRGB"><feGaussianBlur stdDeviation="0.5"/></filter></defs><rect width="530" height="170" fill="#191a1a"/><g filter="url(#bl936)"><path d="M21.3,41.3L23.0,31.3L28.5,28.5L38.0,18.6L47.5,22.2L60.5,26.0L69.3,28.5L79.5,24.3L83.8,26.4L91.1,26.4L98.4,32.5L108.6,32.5L117.3,32.5L126.0,32.5L127.5,24.3L128.9,15.4L132.6,24.3L134.8,28.5L140.6,32.5L142.8,26.4L146.4,26.4L147.8,36.3L142.0,39.9L139.1,45.1L134.8,46.8L131.8,50.1L128.2,59.2L128.9,62.9L131.1,67.6L137.7,68.9L142.0,72.0L146.4,72.8L146.4,77.7L149.3,81.8L150.8,80.1L150.8,74.0L153.7,70.2L152.2,63.5L152.2,56.9L152.2,52.0L158.0,52.3L163.9,56.3L164.6,62.1L166.8,64.3L170.4,60.7L171.9,58.3L175.5,66.2L178.4,71.5L182.0,75.3L184.7,78.9L182.8,81.3L178.4,84.3L171.1,84.3L168.2,86.3L164.6,89.2L162.4,91.5L164.6,90.3L171.1,86.5L172.1,89.2L171.1,91.3L172.6,93.4L176.2,93.9L176.9,91.3L178.4,93.4L173.3,96.5L169.7,98.6L169.7,95.5L168.2,95.9L163.9,98.6L163.1,101.5L163.9,102.1L160.9,103.5L158.0,104.4L155.8,108.2L155.1,111.0L155.6,114.0L153.7,115.5L150.8,118.1L147.8,120.7L147.4,123.2L149.3,128.2L149.0,130.9L147.8,131.1L145.4,127.4L145.2,124.9L143.5,123.2L140.6,122.7L136.2,122.7L135.5,124.5L133.3,124.4L128.9,123.9L124.6,126.9L124.1,129.8L123.5,135.4L125.6,140.4L128.2,142.1L131.8,141.4L133.7,140.1L134.2,137.7L139.1,137.0L138.4,140.8L137.2,143.1L136.5,145.7L140.6,145.7L144.5,146.9L143.9,151.4L144.2,153.2L146.4,155.9L149.3,155.6L153.2,156.6L151.5,156.9L149.3,158.3L147.1,157.8L144.9,156.9L142.0,154.4L140.9,152.9L138.4,149.9L134.8,148.9L131.5,147.7L128.9,145.4L125.3,145.9L121.7,144.5L117.3,142.4L112.2,139.3L112.5,136.6L110.7,134.1L107.1,130.6L104.9,127.4L102.0,124.0L100.6,121.0L98.8,120.3L98.8,122.9L101.3,126.5L104.2,131.4L106.4,134.3L105.2,133.8L102.7,131.7L99.1,127.4L97.2,123.2L95.3,119.0L93.3,116.3L90.4,115.5L88.2,111.9L87.5,109.5L85.3,104.8L84.8,99.6L85.3,93.0L84.3,88.3L86.7,88.5L87.5,90.3L87.0,87.0L83.8,84.7L80.2,82.5L79.5,78.9L76.6,74.0L74.4,71.5L71.5,66.2L67.8,63.5L64.9,61.2L62.0,59.8L56.2,59.2L53.3,56.3L49.6,59.2L45.3,61.2L46.0,56.3L42.4,60.7L40.9,63.5L36.5,68.4L31.4,72.0L26.4,73.5L30.0,70.2L35.1,66.2L36.5,62.6L30.7,62.6L30.0,59.2L25.6,57.2L24.2,53.2L26.4,49.4L31.4,48.4L31.4,45.1L28.5,45.1L23.4,44.8ZM-502.5,41.3L-500.8,31.3L-495.3,28.5L-485.8,18.6L-476.4,22.2L-463.3,26.0L-454.5,28.5L-444.3,24.3L-440.0,26.4L-432.7,26.4L-425.4,32.5L-415.2,32.5L-406.5,32.5L-397.8,32.5L-396.3,24.3L-394.9,15.4L-391.2,24.3L-389.0,28.5L-383.2,32.5L-381.0,26.4L-377.4,26.4L-376.0,36.3L-381.8,39.9L-384.7,45.1L-389.0,46.8L-392.0,50.1L-395.6,59.2L-394.9,62.9L-392.7,67.6L-386.1,68.9L-381.8,72.0L-377.4,72.8L-377.4,77.7L-374.5,81.8L-373.0,80.1L-373.0,74.0L-370.1,70.2L-371.6,63.5L-371.6,56.9L-371.6,52.0L-365.8,52.3L-359.9,56.3L-359.2,62.1L-357.0,64.3L-353.4,60.7L-351.9,58.3L-348.3,66.2L-345.4,71.5L-341.8,75.3L-339.1,78.9L-341.0,81.3L-345.4,84.3L-352.7,84.3L-355.6,86.3L-359.2,89.2L-361.4,91.5L-359.2,90.3L-352.7,86.5L-351.7,89.2L-352.7,91.3L-351.2,93.4L-347.6,93.9L-346.9,91.3L-345.4,93.4L-350.5,96.5L-354.1,98.6L-354.1,95.5L-355.6,95.9L-359.9,98.6L-360.7,101.5L-359.9,102.1L-362.9,103.5L-365.8,104.4L-368.0,108.2L-368.7,111.0L-368.2,114.0L-370.1,115.5L-373.0,118.1L-376.0,120.7L-376.4,123.2L-374.5,128.2L-374.8,130.9L-376.0,131.1L-378.4,127.4L-378.6,124.9L-380.3,123.2L-383.2,122.7L-387.6,122.7L-388.3,124.5L-390.5,124.4L-394.9,123.9L-399.2,126.9L-399.7,129.8L-400.3,135.4L-398.2,140.4L-395.6,142.1L-392.0,141.4L-390.1,140.1L-389.6,137.7L-384.7,137.0L-385.4,140.8L-386.6,143.1L-387.3,145.7L-383.2,145.7L-379.3,146.9L-379.9,151.4L-379.6,153.2L-377.4,155.9L-374.5,155.6L-370.6,156.6L-372.3,156.9L-374.5,158.3L-376.7,157.8L-378.9,156.9L-381.8,154.4L-382.9,152.9L-385.4,149.9L-389.0,148.9L-392.3,147.7L-394.9,145.4L-398.5,145.9L-402.1,144.5L-406.5,142.4L-411.6,139.3L-411.3,136.6L-413.1,134.1L-416.7,130.6L-418.9,127.4L-421.8,124.0L-423.2,121.0L-425.0,120.3L-425.0,122.9L-422.5,126.5L-419.6,131.4L-417.4,134.3L-418.6,133.8L-421.1,131.7L-424.7,127.4L-426.6,123.2L-428.5,119.0L-430.5,116.3L-433.4,115.5L-435.6,111.9L-436.3,109.5L-438.5,104.8L-439.0,99.6L-438.5,93.0L-439.5,88.3L-437.1,88.5L-436.3,90.3L-436.8,87.0L-440.0,84.7L-443.6,82.5L-444.3,78.9L-447.2,74.0L-449.4,71.5L-452.3,66.2L-456.0,63.5L-458.9,61.2L-461.8,59.8L-467.6,59.2L-470.5,56.3L-474.2,59.2L-478.5,61.2L-477.8,56.3L-481.4,60.7L-482.9,63.5L-487.3,68.4L-492.4,72.0L-497.4,73.5L-493.8,70.2L-488.7,66.2L-487.3,62.6L-493.1,62.6L-493.8,59.2L-498.2,57.2L-499.6,53.2L-497.4,49.4L-492.4,48.4L-492.4,45.1L-495.3,45.1L-500.4,44.8ZM545.1,41.3L546.8,31.3L552.3,28.5L561.8,18.6L571.2,22.2L584.3,26.0L593.1,28.5L603.3,24.3L607.6,26.4L614.9,26.4L622.2,32.5L632.4,32.5L641.1,32.5L649.8,32.5L651.3,24.3L652.7,15.4L656.4,24.3L658.6,28.5L664.4,32.5L666.6,26.4L670.2,26.4L671.6,36.3L665.8,39.9L662.9,45.1L658.6,46.8L655.6,50.1L652.0,59.2L652.7,62.9L654.9,67.6L661.5,68.9L665.8,72.0L670.2,72.8L670.2,77.7L673.1,81.8L674.6,80.1L674.6,74.0L677.5,70.2L676.0,63.5L676.0,56.9L676.0,52.0L681.8,52.3L687.7,56.3L688.4,62.1L690.6,64.3L694.2,60.7L695.7,58.3L699.3,66.2L702.2,71.5L705.8,75.3L708.5,78.9L706.6,81.3L702.2,84.3L694.9,84.3L692.0,86.3L688.4,89.2L686.2,91.5L688.4,90.3L694.9,86.5L695.9,89.2L694.9,91.3L696.4,93.4L700.0,93.9L700.7,91.3L702.2,93.4L697.1,96.5L693.5,98.6L693.5,95.5L692.0,95.9L687.7,98.6L686.9,101.5L687.7,102.1L684.7,103.5L681.8,104.4L679.6,108.2L678.9,111.0L679.4,114.0L677.5,115.5L674.6,118.1L671.6,120.7L671.2,123.2L673.1,128.2L672.8,130.9L671.6,131.1L669.2,127.4L669.0,124.9L667.3,123.2L664.4,122.7L660.0,122.7L659.3,124.5L657.1,124.4L652.7,123.9L648.4,126.9L647.9,129.8L647.3,135.4L649.4,140.4L652.0,142.1L655.6,141.4L657.5,140.1L658.0,137.7L662.9,137.0L662.2,140.8L661.0,143.1L660.3,145.7L664.4,145.7L668.3,146.9L667.7,151.4L668.0,153.2L670.2,155.9L673.1,155.6L677.0,156.6L675.3,156.9L673.1,158.3L670.9,157.8L668.7,156.9L665.8,154.4L664.7,152.9L662.2,149.9L658.6,148.9L655.3,147.7L652.7,145.4L649.1,145.9L645.5,144.5L641.1,142.4L636.0,139.3L636.3,136.6L634.5,134.1L630.9,130.6L628.7,127.4L625.8,124.0L624.4,121.0L622.6,120.3L622.6,122.9L625.1,126.5L628.0,131.4L630.2,134.3L629.0,133.8L626.5,131.7L622.9,127.4L621.0,123.2L619.1,119.0L617.1,116.3L614.2,115.5L612.0,111.9L611.3,109.5L609.1,104.8L608.6,99.6L609.1,93.0L608.1,88.3L610.5,88.5L611.3,90.3L610.8,87.0L607.6,84.7L604.0,82.5L603.3,78.9L600.4,74.0L598.2,71.5L595.3,66.2L591.6,63.5L588.7,61.2L585.8,59.8L580.0,59.2L577.1,56.3L573.4,59.2L569.1,61.2L569.8,56.3L566.2,60.7L564.7,63.5L560.3,68.4L555.2,72.0L550.2,73.5L553.8,70.2L558.9,66.2L560.3,62.6L554.5,62.6L553.8,59.2L549.4,57.2L548.0,53.2L550.2,49.4L555.2,48.4L555.2,45.1L552.3,45.1L547.2,44.8ZM79.0,82.9L83.8,84.7L86.0,88.3L83.1,87.4L79.0,82.9ZM-444.8,82.9L-440.0,84.7L-437.8,88.3L-440.7,87.4L-444.8,82.9ZM602.8,82.9L607.6,84.7L609.8,88.3L606.9,87.4L602.8,82.9ZM176.2,37.0L173.3,43.4L171.1,48.4L169.7,53.2L166.8,52.6L160.9,47.8L158.0,45.1L152.2,44.1L152.9,41.7L158.8,39.2L159.5,32.5L154.4,28.5L150.8,25.2L146.4,24.3L142.0,23.5L136.9,20.0L134.8,13.0L136.2,7.0L142.0,6.5L147.8,8.0L152.2,11.5L156.6,14.0L162.4,20.0L166.8,24.3L168.2,29.3L173.3,34.4ZM-347.6,37.0L-350.5,43.4L-352.7,48.4L-354.1,53.2L-357.0,52.6L-362.9,47.8L-365.8,45.1L-371.6,44.1L-370.9,41.7L-365.0,39.2L-364.3,32.5L-369.4,28.5L-373.0,25.2L-377.4,24.3L-381.8,23.5L-386.9,20.0L-389.0,13.0L-387.6,7.0L-381.8,6.5L-376.0,8.0L-371.6,11.5L-367.2,14.0L-361.4,20.0L-357.0,24.3L-355.6,29.3L-350.5,34.4ZM700.0,37.0L697.1,43.4L694.9,48.4L693.5,53.2L690.6,52.6L684.7,47.8L681.8,45.1L676.0,44.1L676.7,41.7L682.6,39.2L683.3,32.5L678.2,28.5L674.6,25.2L670.2,24.3L665.8,23.5L660.7,20.0L658.6,13.0L660.0,7.0L665.8,6.5L671.6,8.0L676.0,11.5L680.4,14.0L686.2,20.0L690.6,24.3L692.0,29.3L697.1,34.4ZM95.5,24.3L101.3,30.5L108.6,29.7L112.9,28.5L117.3,26.4L118.7,22.2L112.9,15.4L112.9,10.5L108.6,9.5L102.7,13.0L98.4,9.5L93.3,13.0L94.7,18.6ZM-428.3,24.3L-422.5,30.5L-415.2,29.7L-410.9,28.5L-406.5,26.4L-405.1,22.2L-410.9,15.4L-410.9,10.5L-415.2,9.5L-421.1,13.0L-425.4,9.5L-430.5,13.0L-429.1,18.6ZM619.3,24.3L625.1,30.5L632.4,29.7L636.7,28.5L641.1,26.4L642.5,22.2L636.7,15.4L636.7,10.5L632.4,9.5L626.5,13.0L622.2,9.5L617.1,13.0L618.5,18.6ZM83.1,15.4L86.0,19.1L89.6,17.7L94.7,10.5L92.6,4.4L87.5,2.7L84.6,6.5ZM-440.7,15.4L-437.8,19.1L-434.2,17.7L-429.1,10.5L-431.2,4.4L-436.3,2.7L-439.2,6.5ZM606.9,15.4L609.8,19.1L613.4,17.7L618.5,10.5L616.4,4.4L611.3,2.7L608.4,6.5ZM131.8,1.6L149.3,2.2L149.3,-4.6L142.0,-12.1L131.8,-8.9ZM-392.0,1.6L-374.5,2.2L-374.5,-4.6L-381.8,-12.1L-392.0,-8.9ZM655.6,1.6L673.1,2.2L673.1,-4.6L665.8,-12.1L655.6,-8.9ZM117.3,15.4L124.6,17.7L125.3,8.0L118.7,6.5ZM-406.5,15.4L-399.2,17.7L-398.5,8.0L-405.1,6.5ZM641.1,15.4L648.4,17.7L649.1,8.0L642.5,6.5ZM126.7,14.4L131.1,14.4L134.0,6.5L127.5,5.4ZM-397.1,14.4L-392.7,14.4L-389.8,6.5L-396.3,5.4ZM650.5,14.4L654.9,14.4L657.8,6.5L651.3,5.4ZM96.9,-0.0L111.5,1.1L114.4,-5.8L105.7,-12.1L95.5,-7.7ZM-426.9,-0.0L-412.3,1.1L-409.4,-5.8L-418.1,-12.1L-428.3,-7.7ZM620.7,-0.0L635.3,1.1L638.2,-5.8L629.5,-12.1L619.3,-7.7ZM114.4,-0.0L124.6,-0.0L124.6,-10.8L115.8,-9.5ZM-409.4,-0.0L-399.2,-0.0L-399.2,-10.8L-408.0,-9.5ZM638.2,-0.0L648.4,-0.0L648.4,-10.8L639.6,-9.5ZM134.8,-8.9L152.2,-8.9L163.9,-26.1L175.5,-52.8L156.6,-63.9L131.8,-42.9L137.7,-18.8ZM-389.0,-8.9L-371.6,-8.9L-359.9,-26.1L-348.3,-52.8L-367.2,-63.9L-392.0,-42.9L-386.1,-18.8ZM658.6,-8.9L676.0,-8.9L687.7,-26.1L699.3,-52.8L680.4,-63.9L655.6,-42.9L661.5,-18.8ZM139.1,46.8L144.9,50.1L148.6,46.8L146.4,41.7L142.0,39.9L139.1,45.1ZM-384.7,46.8L-378.9,50.1L-375.2,46.8L-377.4,41.7L-381.8,39.9L-384.7,45.1ZM662.9,46.8L668.7,50.1L672.4,46.8L670.2,41.7L665.8,39.9L662.9,45.1ZM179.4,89.8L184.2,91.8L188.6,92.0L189.0,90.0L187.9,87.4L184.9,85.2L184.5,81.3L182.5,82.9L180.6,87.4ZM-344.4,89.8L-339.6,91.8L-335.2,92.0L-334.8,90.0L-335.9,87.4L-338.9,85.2L-339.3,81.3L-341.3,82.9L-343.2,87.4ZM703.2,89.8L708.0,91.8L712.4,92.0L712.8,90.0L711.7,87.4L708.7,85.2L708.3,81.3L706.3,82.9L704.4,87.4ZM142.0,136.5L145.7,134.6L149.3,134.4L153.7,137.0L157.7,139.0L152.9,139.4L152.2,138.5L150.8,137.0L146.4,135.7L143.5,136.2ZM-381.8,136.5L-378.1,134.6L-374.5,134.4L-370.1,137.0L-366.1,139.0L-370.9,139.4L-371.6,138.5L-373.0,137.0L-377.4,135.7L-380.3,136.2ZM665.8,136.5L669.5,134.6L673.1,134.4L677.5,137.0L681.5,139.0L676.7,139.4L676.0,138.5L674.6,137.0L670.2,135.7L667.3,136.2ZM157.4,141.8L159.5,139.4L163.9,139.6L166.2,141.4L162.4,142.4L160.2,142.1ZM-366.4,141.8L-364.3,139.4L-359.9,139.6L-357.6,141.4L-361.4,142.4L-363.6,142.1ZM681.2,141.8L683.3,139.4L687.7,139.6L690.0,141.4L686.2,142.4L684.0,142.1ZM160.9,-18.8L165.3,-8.9L169.7,-5.8L178.4,-5.8L181.3,-0.0L184.2,10.5L185.7,17.7L187.1,24.3L191.5,26.4L187.9,32.5L187.9,39.9L190.0,45.1L193.0,51.6L195.9,56.3L200.2,59.2L202.4,59.2L203.9,54.7L206.0,48.4L210.4,41.7L214.8,38.1L220.6,32.5L227.9,29.7L233.0,24.3L230.8,17.7L233.7,13.0L230.8,8.0L236.6,2.7L238.1,-5.8L236.6,-18.8L236.6,-34.1L207.5,-63.9L178.4,-52.8ZM-362.9,-18.8L-358.5,-8.9L-354.1,-5.8L-345.4,-5.8L-342.5,-0.0L-339.6,10.5L-338.1,17.7L-336.7,24.3L-332.3,26.4L-335.9,32.5L-335.9,39.9L-333.8,45.1L-330.9,51.6L-327.9,56.3L-323.6,59.2L-321.4,59.2L-319.9,54.7L-317.8,48.4L-313.4,41.7L-309.0,38.1L-303.2,32.5L-295.9,29.7L-290.8,24.3L-293.0,17.7L-290.1,13.0L-293.0,8.0L-287.2,2.7L-285.7,-5.8L-287.2,-18.8L-287.2,-34.1L-316.3,-63.9L-345.4,-52.8ZM684.7,-18.8L689.1,-8.9L693.5,-5.8L702.2,-5.8L705.1,-0.0L708.0,10.5L709.5,17.7L710.9,24.3L715.3,26.4L711.7,32.5L711.7,39.9L713.8,45.1L716.8,51.6L719.7,56.3L724.0,59.2L726.2,59.2L727.7,54.7L729.8,48.4L734.2,41.7L738.6,38.1L744.4,32.5L751.7,29.7L756.8,24.3L754.6,17.7L757.5,13.0L754.6,8.0L760.4,2.7L761.9,-5.8L760.4,-18.8L760.4,-34.1L731.3,-63.9L702.2,-52.8ZM230.3,41.7L233.7,38.5L239.5,39.2L243.9,39.2L245.9,43.4L243.9,45.8L238.8,48.8L235.1,47.5L232.7,46.8L233.7,44.1L230.8,43.4ZM-293.5,41.7L-290.1,38.5L-284.3,39.2L-279.9,39.2L-277.9,43.4L-279.9,45.8L-285.0,48.8L-288.7,47.5L-291.1,46.8L-290.1,44.1L-293.0,43.4ZM754.1,41.7L757.5,38.5L763.3,39.2L767.7,39.2L769.7,43.4L767.7,45.8L762.6,48.8L758.9,47.5L756.5,46.8L757.5,44.1L754.6,43.4ZM153.2,156.6L155.1,155.1L155.8,153.5L157.7,152.6L160.6,151.7L161.5,150.8L162.1,152.9L161.2,154.8L162.4,153.2L163.9,151.3L166.3,152.9L166.8,153.6L169.7,153.5L171.9,154.1L175.5,153.3L176.9,154.7L178.4,156.6L180.6,158.8L182.8,160.3L185.7,160.4L188.6,161.0L190.8,162.7L192.2,166.1L193.0,168.3L195.1,169.7L195.9,170.5L198.8,170.7L201.2,172.8L204.6,173.1L207.5,173.2L209.7,174.4L211.9,176.1L214.3,176.7L215.1,179.5L214.5,182.4L211.9,185.1L209.7,188.1L209.0,191.1L208.7,195.3L207.5,198.7L206.0,201.8L204.6,203.4L201.0,203.7L198.0,205.0L195.1,207.9L195.0,211.5L193.0,214.0L190.8,217.3L189.3,219.9L187.9,222.0L185.7,223.2L182.8,222.5L180.7,221.7L182.5,225.2L181.7,228.9L176.9,230.7L175.2,231.7L175.1,234.5L171.1,234.5L171.9,237.0L172.9,238.0L171.1,239.4L170.4,242.5L167.5,244.6L169.7,247.7L169.7,249.3L167.1,252.8L165.3,255.5L166.2,258.8L166.3,261.5L168.9,264.7L170.8,264.5L168.2,266.2L165.3,266.0L161.7,262.7L158.0,259.1L156.6,254.4L155.8,248.8L155.8,245.6L157.3,242.5L158.3,236.5L158.5,231.7L158.8,227.6L159.9,223.4L161.5,219.9L161.7,214.8L162.0,211.5L163.1,207.4L163.4,201.8L163.4,196.2L160.9,194.4L156.6,191.8L154.7,189.3L153.4,186.6L151.5,182.9L149.6,179.2L147.6,177.7L147.4,175.3L149.3,173.8L148.1,172.3L148.0,170.5L149.3,168.3L150.8,166.8L151.0,165.4L152.9,163.5L153.1,160.3L152.4,158.5ZM-370.6,156.6L-368.7,155.1L-368.0,153.5L-366.1,152.6L-363.2,151.7L-362.3,150.8L-361.7,152.9L-362.6,154.8L-361.4,153.2L-359.9,151.3L-357.5,152.9L-357.0,153.6L-354.1,153.5L-351.9,154.1L-348.3,153.3L-346.9,154.7L-345.4,156.6L-343.2,158.8L-341.0,160.3L-338.1,160.4L-335.2,161.0L-333.0,162.7L-331.6,166.1L-330.9,168.3L-328.7,169.7L-327.9,170.5L-325.0,170.7L-322.6,172.8L-319.2,173.1L-316.3,173.2L-314.1,174.4L-311.9,176.1L-309.5,176.7L-308.7,179.5L-309.3,182.4L-311.9,185.1L-314.1,188.1L-314.8,191.1L-315.1,195.3L-316.3,198.7L-317.8,201.8L-319.2,203.4L-322.8,203.7L-325.8,205.0L-328.7,207.9L-328.8,211.5L-330.9,214.0L-333.0,217.3L-334.5,219.9L-335.9,222.0L-338.1,223.2L-341.0,222.5L-343.1,221.7L-341.3,225.2L-342.1,228.9L-346.9,230.7L-348.6,231.7L-348.7,234.5L-352.7,234.5L-351.9,237.0L-350.9,238.0L-352.7,239.4L-353.4,242.5L-356.3,244.6L-354.1,247.7L-354.1,249.3L-356.7,252.8L-358.5,255.5L-357.6,258.8L-357.5,261.5L-354.9,264.7L-353.0,264.5L-355.6,266.2L-358.5,266.0L-362.1,262.7L-365.8,259.1L-367.2,254.4L-368.0,248.8L-368.0,245.6L-366.5,242.5L-365.5,236.5L-365.3,231.7L-365.0,227.6L-363.9,223.4L-362.3,219.9L-362.1,214.8L-361.8,211.5L-360.7,207.4L-360.4,201.8L-360.4,196.2L-362.9,194.4L-367.2,191.8L-369.1,189.3L-370.4,186.6L-372.3,182.9L-374.2,179.2L-376.2,177.7L-376.4,175.3L-374.5,173.8L-375.7,172.3L-375.8,170.5L-374.5,168.3L-373.0,166.8L-372.8,165.4L-370.9,163.5L-370.7,160.3L-371.4,158.5ZM677.0,156.6L678.9,155.1L679.6,153.5L681.5,152.6L684.4,151.7L685.3,150.8L685.9,152.9L685.0,154.8L686.2,153.2L687.7,151.3L690.1,152.9L690.6,153.6L693.5,153.5L695.7,154.1L699.3,153.3L700.7,154.7L702.2,156.6L704.4,158.8L706.6,160.3L709.5,160.4L712.4,161.0L714.6,162.7L716.0,166.1L716.8,168.3L718.9,169.7L719.7,170.5L722.6,170.7L725.0,172.8L728.4,173.1L731.3,173.2L733.5,174.4L735.7,176.1L738.1,176.7L738.9,179.5L738.3,182.4L735.7,185.1L733.5,188.1L732.8,191.1L732.5,195.3L731.3,198.7L729.8,201.8L728.4,203.4L724.8,203.7L721.8,205.0L718.9,207.9L718.8,211.5L716.8,214.0L714.6,217.3L713.1,219.9L711.7,222.0L709.5,223.2L706.6,222.5L704.5,221.7L706.3,225.2L705.5,228.9L700.7,230.7L699.0,231.7L698.9,234.5L694.9,234.5L695.7,237.0L696.7,238.0L694.9,239.4L694.2,242.5L691.3,244.6L693.5,247.7L693.5,249.3L690.9,252.8L689.1,255.5L690.0,258.8L690.1,261.5L692.7,264.7L694.6,264.5L692.0,266.2L689.1,266.0L685.5,262.7L681.8,259.1L680.4,254.4L679.6,248.8L679.6,245.6L681.1,242.5L682.1,236.5L682.3,231.7L682.6,227.6L683.7,223.4L685.3,219.9L685.5,214.8L685.8,211.5L686.9,207.4L687.2,201.8L687.2,196.2L684.7,194.4L680.4,191.8L678.5,189.3L677.2,186.6L675.3,182.9L673.4,179.2L671.4,177.7L671.2,175.3L673.1,173.8L671.9,172.3L671.8,170.5L673.1,168.3L674.6,166.8L674.8,165.4L676.7,163.5L676.9,160.3L676.2,158.5ZM257.1,113.1L262.8,114.2L265.7,113.1L270.1,111.3L277.3,111.2L280.3,110.4L281.7,111.2L280.7,115.5L281.4,116.9L283.2,118.3L287.8,119.1L290.4,121.5L294.1,122.5L295.1,119.5L299.2,118.8L302.1,120.3L307.9,121.7L310.8,120.7L312.7,121.2L313.0,123.2L314.4,126.5L316.6,131.7L317.6,133.8L319.5,137.0L320.0,140.8L321.7,142.4L323.2,146.2L325.6,147.7L328.6,150.7L328.7,152.2L330.4,153.6L334.1,152.6L340.2,151.6L339.9,153.8L337.7,158.8L335.5,162.4L332.6,165.4L329.7,167.5L326.8,170.5L324.6,172.6L323.2,175.8L322.3,178.5L323.2,181.4L324.6,184.4L324.9,190.3L323.9,192.9L319.5,195.3L316.6,198.4L317.4,204.2L313.7,207.4L313.4,210.6L311.1,214.5L307.2,219.6L303.1,221.7L297.7,222.0L294.8,223.1L292.5,222.0L292.2,218.2L290.4,214.0L287.8,209.8L286.8,202.6L283.2,195.6L282.9,192.6L285.3,187.3L285.8,184.4L284.6,182.1L283.5,177.7L282.9,175.6L279.5,172.2L278.5,170.0L279.5,167.5L279.8,163.9L278.4,162.4L275.9,162.7L273.7,161.0L272.2,159.8L269.3,159.8L267.2,160.5L262.8,162.0L259.9,161.4L254.8,162.6L252.2,161.0L249.0,158.9L246.3,156.6L246.1,154.7L243.9,152.9L241.3,150.8L241.3,149.2L240.2,147.4L241.7,145.4L242.0,140.8L241.0,137.7L242.4,133.8L244.6,129.8L246.8,126.9L249.7,125.2L251.4,123.5L251.7,121.5L252.3,119.0L255.5,116.7L257.0,114.2ZM-266.7,113.1L-261.0,114.2L-258.1,113.1L-253.7,111.3L-246.5,111.2L-243.5,110.4L-242.1,111.2L-243.1,115.5L-242.4,116.9L-240.6,118.3L-236.0,119.1L-233.4,121.5L-229.7,122.5L-228.7,119.5L-224.6,118.8L-221.7,120.3L-215.9,121.7L-213.0,120.7L-211.1,121.2L-210.8,123.2L-209.4,126.5L-207.2,131.7L-206.2,133.8L-204.3,137.0L-203.8,140.8L-202.1,142.4L-200.6,146.2L-198.2,147.7L-195.2,150.7L-195.1,152.2L-193.4,153.6L-189.7,152.6L-183.6,151.6L-183.9,153.8L-186.1,158.8L-188.3,162.4L-191.2,165.4L-194.1,167.5L-197.0,170.5L-199.2,172.6L-200.6,175.8L-201.5,178.5L-200.6,181.4L-199.2,184.4L-198.9,190.3L-199.9,192.9L-204.3,195.3L-207.2,198.4L-206.4,204.2L-210.1,207.4L-210.4,210.6L-212.7,214.5L-216.6,219.6L-220.7,221.7L-226.1,222.0L-229.0,223.1L-231.3,222.0L-231.6,218.2L-233.4,214.0L-236.0,209.8L-237.0,202.6L-240.6,195.6L-240.9,192.6L-238.5,187.3L-238.0,184.4L-239.2,182.1L-240.3,177.7L-240.9,175.6L-244.3,172.2L-245.3,170.0L-244.3,167.5L-244.0,163.9L-245.4,162.4L-247.9,162.7L-250.1,161.0L-251.6,159.8L-254.5,159.8L-256.6,160.5L-261.0,162.0L-263.9,161.4L-269.0,162.6L-271.6,161.0L-274.8,158.9L-277.5,156.6L-277.7,154.7L-279.9,152.9L-282.5,150.8L-282.5,149.2L-283.6,147.4L-282.1,145.4L-281.8,140.8L-282.8,137.7L-281.4,133.8L-279.2,129.8L-277.0,126.9L-274.1,125.2L-272.4,123.5L-272.1,121.5L-271.5,119.0L-268.3,116.7L-266.8,114.2ZM780.9,113.1L786.6,114.2L789.5,113.1L793.9,111.3L801.1,111.2L804.1,110.4L805.5,111.2L804.5,115.5L805.2,116.9L807.0,118.3L811.6,119.1L814.2,121.5L817.9,122.5L818.9,119.5L823.0,118.8L825.9,120.3L831.7,121.7L834.6,120.7L836.5,121.2L836.8,123.2L838.2,126.5L840.4,131.7L841.4,133.8L843.3,137.0L843.8,140.8L845.5,142.4L847.0,146.2L849.4,147.7L852.4,150.7L852.5,152.2L854.2,153.6L857.9,152.6L864.0,151.6L863.7,153.8L861.5,158.8L859.3,162.4L856.4,165.4L853.5,167.5L850.6,170.5L848.4,172.6L847.0,175.8L846.1,178.5L847.0,181.4L848.4,184.4L848.7,190.3L847.7,192.9L843.3,195.3L840.4,198.4L841.2,204.2L837.5,207.4L837.2,210.6L834.9,214.5L831.0,219.6L826.9,221.7L821.5,222.0L818.6,223.1L816.3,222.0L816.0,218.2L814.2,214.0L811.6,209.8L810.6,202.6L807.0,195.6L806.7,192.6L809.1,187.3L809.6,184.4L808.4,182.1L807.3,177.7L806.7,175.6L803.3,172.2L802.3,170.0L803.3,167.5L803.6,163.9L802.2,162.4L799.7,162.7L797.5,161.0L796.0,159.8L793.1,159.8L791.0,160.5L786.6,162.0L783.7,161.4L778.6,162.6L776.0,161.0L772.8,158.9L770.1,156.6L769.9,154.7L767.7,152.9L765.1,150.8L765.1,149.2L764.0,147.4L765.5,145.4L765.8,140.8L764.8,137.7L766.2,133.8L768.4,129.8L770.6,126.9L773.5,125.2L775.2,123.5L775.5,121.5L776.1,119.0L779.3,116.7L780.8,114.2ZM337.4,186.6L338.9,191.8L337.7,194.9L335.5,201.8L334.1,206.6L331.2,207.4L329.0,204.2L329.0,201.0L330.3,197.9L329.7,194.1L332.6,192.3L335.5,188.8ZM-186.4,186.6L-184.9,191.8L-186.1,194.9L-188.3,201.8L-189.7,206.6L-192.6,207.4L-194.8,204.2L-194.8,201.0L-193.5,197.9L-194.1,194.1L-191.2,192.3L-188.3,188.8ZM861.2,186.6L862.7,191.8L861.5,194.9L859.3,201.8L857.9,206.6L855.0,207.4L852.8,204.2L852.8,201.0L854.1,197.9L853.5,194.1L856.4,192.3L859.3,188.8ZM257.6,112.8L256.5,111.5L254.9,110.6L252.8,111.0L252.9,108.2L251.9,107.7L252.9,103.5L252.3,99.6L254.1,98.2L258.4,98.6L263.1,98.8L264.0,95.5L264.0,93.4L262.1,90.7L258.9,89.2L259.0,87.9L261.3,87.4L263.4,87.6L263.4,85.4L266.0,85.9L267.9,84.3L268.0,82.7L270.8,81.5L272.2,78.9L272.7,77.7L275.9,76.5L278.2,75.3L277.8,71.5L277.6,67.6L281.0,65.7L281.0,68.9L280.3,71.5L281.4,75.3L283.9,74.3L286.4,75.3L289.7,74.0L292.6,73.3L294.5,74.0L296.3,72.0L296.3,67.6L298.4,65.7L301.1,67.0L301.1,64.0L299.9,61.5L303.5,60.7L306.4,60.7L309.4,59.2L307.2,57.4L302.1,58.6L298.4,59.2L296.7,56.3L297.0,51.6L297.7,49.1L302.1,43.4L302.5,41.7L299.9,40.6L297.7,41.7L296.7,45.1L293.3,49.4L290.9,53.2L290.7,56.3L293.1,59.2L290.4,62.9L289.7,66.2L289.0,69.7L286.5,71.5L284.5,71.8L283.9,69.4L282.9,64.9L281.7,62.1L281.0,60.7L278.8,63.5L275.9,64.9L273.7,62.1L273.0,56.3L273.3,53.2L275.9,50.1L279.5,47.8L281.7,44.1L284.6,38.1L286.8,32.5L290.4,28.5L293.3,24.3L297.7,22.2L302.8,19.5L306.4,20.0L310.8,23.0L309.4,25.6L313.7,26.8L318.1,27.7L325.4,34.4L325.4,38.1L321.7,39.9L316.6,37.4L313.7,37.0L315.9,43.4L319.5,46.8L320.3,43.4L323.9,44.8L323.9,39.9L326.8,38.1L329.7,39.2L330.4,30.5L332.6,32.5L333.4,36.3L335.5,33.6L342.8,30.5L344.3,31.3L350.1,28.9L353.7,25.2L354.5,29.3L358.8,27.3L364.6,30.5L366.1,28.9L363.2,25.6L362.9,20.0L365.4,13.0L371.2,11.5L371.6,20.0L370.5,28.5L372.6,32.5L371.2,37.4L373.4,34.4L374.1,28.5L372.9,20.0L374.1,11.5L377.7,15.4L382.1,14.4L383.6,8.0L391.6,6.5L392.3,-0.0L401.0,-5.8L411.2,-8.3L417.0,-16.7L421.4,-12.1L430.1,-5.8L419.9,9.0L425.8,6.5L430.8,8.0L437.4,8.0L444.7,10.5L450.5,13.0L454.1,20.0L457.8,17.7L463.6,17.7L469.4,12.0L470.9,13.0L478.1,14.0L484.0,17.7L488.3,20.0L498.5,24.3L498.5,26.4L505.8,26.4L513.8,28.5L513.8,24.3L521.8,25.2L527.6,28.5L534.9,35.1L539.7,39.9L537.5,44.1L534.1,43.4L530.5,41.7L527.6,43.4L524.7,45.8L524.0,51.6L518.9,53.8L513.8,59.2L505.0,59.8L502.9,64.9L501.4,70.2L498.5,77.7L494.1,82.5L492.7,80.1L492.2,72.8L492.7,67.6L495.6,63.5L499.2,57.7L503.6,54.1L498.5,54.7L494.1,54.7L491.2,60.7L485.4,61.2L478.1,61.2L472.3,62.1L466.5,68.9L462.9,73.5L466.5,75.3L470.9,77.7L470.1,84.7L467.9,89.2L466.5,92.4L462.9,97.6L457.8,99.6L455.9,101.0L454.4,103.5L451.9,105.4L451.2,106.7L453.8,111.0L453.8,113.7L451.9,114.6L449.8,115.6L449.6,111.9L450.2,110.1L447.6,109.1L448.3,106.3L446.4,105.4L443.2,107.3L442.5,103.9L438.8,106.9L437.1,107.7L438.6,109.9L441.8,109.7L443.9,110.6L441.0,112.8L439.3,114.6L441.5,119.0L443.1,121.5L442.5,124.0L442.5,126.5L440.3,129.0L438.8,131.4L435.9,133.8L431.6,135.7L427.2,137.0L426.2,138.8L425.5,137.0L422.8,137.0L420.7,138.8L419.6,140.8L421.4,143.9L423.6,146.2L424.7,149.9L424.3,152.2L421.4,153.6L419.2,155.9L418.3,156.3L418.5,154.4L416.3,153.5L414.8,151.4L412.7,150.4L411.5,149.3L411.2,151.4L410.2,154.4L411.6,157.3L412.7,159.1L414.5,160.0L416.1,162.4L416.3,165.4L417.3,167.0L416.1,167.1L413.1,164.9L411.8,161.7L411.5,159.5L408.7,157.3L409.2,154.4L409.3,151.4L407.9,146.9L407.6,144.3L404.7,145.6L402.9,145.4L403.2,142.4L401.7,139.6L399.6,137.0L398.8,135.4L397.1,136.2L394.5,136.6L392.3,137.3L391.6,139.3L389.4,140.1L385.4,144.3L382.4,146.2L382.4,149.9L381.8,152.9L381.1,153.9L380.6,155.4L379.5,156.0L378.5,157.2L377.0,155.9L376.0,152.2L374.5,149.9L373.7,146.9L372.4,143.9L371.6,140.8L371.5,137.7L370.8,137.4L368.3,138.0L366.1,135.7L367.6,134.6L364.9,133.5L363.6,131.7L362.5,130.8L355.9,131.1L350.1,130.4L348.6,128.2L347.6,127.8L345.0,128.8L342.8,127.8L340.6,126.7L339.2,124.0L337.0,122.5L335.5,123.2L335.5,124.0L336.7,126.9L338.5,129.0L339.2,130.6L340.2,132.2L340.6,129.8L341.4,132.7L344.3,132.7L347.2,130.1L347.8,129.3L347.9,132.2L350.8,133.5L352.7,135.4L351.1,138.5L349.8,140.8L346.5,143.1L342.1,145.1L337.0,148.0L331.9,149.9L329.0,150.4L328.0,147.2L327.5,144.7L324.6,140.1L322.4,137.0L321.7,133.8L319.5,130.6L316.9,126.5L316.5,124.0L315.6,126.7L313.7,125.4L313.0,123.2L312.7,121.2L315.5,121.0L316.6,118.4L317.9,114.6L318.1,111.5L315.9,111.3L313.7,112.4L310.1,111.9L307.9,111.9L305.6,111.0L304.3,108.2L304.7,106.3L303.8,105.0L307.9,104.1L307.9,103.1L311.5,103.1L314.4,101.5L316.9,101.5L318.8,102.9L321.7,103.5L323.9,103.5L326.2,102.3L326.1,100.4L322.4,97.6L320.3,95.5L321.0,92.8L322.9,90.9L320.3,92.0L317.4,93.0L318.8,94.9L317.4,95.5L315.2,96.8L314.4,95.1L313.0,94.5L314.4,93.2L312.3,92.4L310.5,92.4L308.9,94.5L307.5,96.5L306.4,98.8L306.0,100.6L307.2,102.5L307.9,103.3L305.7,103.7L304.0,105.0L303.5,103.9L300.6,103.7L300.3,105.4L298.9,104.6L298.7,106.3L299.5,107.7L300.6,109.1L299.5,109.5L299.2,111.9L298.1,111.7L297.0,111.0L296.5,108.6L294.8,106.0L293.9,104.4L294.1,101.9L292.6,100.6L290.4,99.2L288.3,97.2L286.8,95.1L285.6,94.3L283.6,94.9L283.7,97.2L285.5,98.6L286.8,101.2L289.0,101.7L289.0,102.7L292.6,105.2L291.9,105.8L290.4,104.4L289.7,106.0L290.7,107.3L289.7,108.6L289.0,109.1L288.5,109.1L289.0,107.3L288.3,105.4L286.8,104.1L284.6,103.1L283.5,101.9L281.7,100.6L281.0,99.6L280.3,97.6L278.4,96.8L276.6,98.0L274.4,99.4L272.2,98.8L270.4,99.2L270.4,101.5L268.9,102.9L266.7,103.9L265.3,106.3L266.0,107.7L264.7,109.1L263.2,110.4L262.5,111.3L259.2,111.5ZM-266.2,112.8L-267.3,111.5L-268.9,110.6L-271.0,111.0L-270.9,108.2L-271.9,107.7L-270.9,103.5L-271.5,99.6L-269.7,98.2L-265.4,98.6L-260.7,98.8L-259.8,95.5L-259.8,93.4L-261.7,90.7L-264.9,89.2L-264.8,87.9L-262.5,87.4L-260.4,87.6L-260.4,85.4L-257.8,85.9L-255.9,84.3L-255.8,82.7L-253.0,81.5L-251.6,78.9L-251.1,77.7L-247.9,76.5L-245.6,75.3L-246.0,71.5L-246.2,67.6L-242.8,65.7L-242.8,68.9L-243.5,71.5L-242.4,75.3L-239.9,74.3L-237.4,75.3L-234.1,74.0L-231.2,73.3L-229.3,74.0L-227.5,72.0L-227.5,67.6L-225.4,65.7L-222.7,67.0L-222.7,64.0L-223.9,61.5L-220.3,60.7L-217.4,60.7L-214.4,59.2L-216.6,57.4L-221.7,58.6L-225.4,59.2L-227.1,56.3L-226.8,51.6L-226.1,49.1L-221.7,43.4L-221.3,41.7L-223.9,40.6L-226.1,41.7L-227.1,45.1L-230.5,49.4L-232.9,53.2L-233.1,56.3L-230.7,59.2L-233.4,62.9L-234.1,66.2L-234.8,69.7L-237.3,71.5L-239.3,71.8L-239.9,69.4L-240.9,64.9L-242.1,62.1L-242.8,60.7L-245.0,63.5L-247.9,64.9L-250.1,62.1L-250.8,56.3L-250.5,53.2L-247.9,50.1L-244.3,47.8L-242.1,44.1L-239.2,38.1L-237.0,32.5L-233.4,28.5L-230.5,24.3L-226.1,22.2L-221.0,19.5L-217.4,20.0L-213.0,23.0L-214.4,25.6L-210.1,26.8L-205.7,27.7L-198.4,34.4L-198.4,38.1L-202.1,39.9L-207.2,37.4L-210.1,37.0L-207.9,43.4L-204.3,46.8L-203.5,43.4L-199.9,44.8L-199.9,39.9L-197.0,38.1L-194.1,39.2L-193.4,30.5L-191.2,32.5L-190.4,36.3L-188.3,33.6L-181.0,30.5L-179.5,31.3L-173.7,28.9L-170.1,25.2L-169.3,29.3L-165.0,27.3L-159.2,30.5L-157.7,28.9L-160.6,25.6L-160.9,20.0L-158.4,13.0L-152.6,11.5L-152.2,20.0L-153.3,28.5L-151.2,32.5L-152.6,37.4L-150.4,34.4L-149.7,28.5L-150.9,20.0L-149.7,11.5L-146.1,15.4L-141.7,14.4L-140.2,8.0L-132.2,6.5L-131.5,-0.0L-122.8,-5.8L-112.6,-8.3L-106.8,-16.7L-102.4,-12.1L-93.7,-5.8L-103.9,9.0L-98.0,6.5L-93.0,8.0L-86.4,8.0L-79.1,10.5L-73.3,13.0L-69.7,20.0L-66.0,17.7L-60.2,17.7L-54.4,12.0L-52.9,13.0L-45.7,14.0L-39.8,17.7L-35.5,20.0L-25.3,24.3L-25.3,26.4L-18.0,26.4L-10.0,28.5L-10.0,24.3L-2.0,25.2L3.8,28.5L11.1,35.1L15.9,39.9L13.7,44.1L10.3,43.4L6.7,41.7L3.8,43.4L0.9,45.8L0.2,51.6L-4.9,53.8L-10.0,59.2L-18.8,59.8L-20.9,64.9L-22.4,70.2L-25.3,77.7L-29.7,82.5L-31.1,80.1L-31.6,72.8L-31.1,67.6L-28.2,63.5L-24.6,57.7L-20.2,54.1L-25.3,54.7L-29.7,54.7L-32.6,60.7L-38.4,61.2L-45.7,61.2L-51.5,62.1L-57.3,68.9L-60.9,73.5L-57.3,75.3L-52.9,77.7L-53.7,84.7L-55.9,89.2L-57.3,92.4L-60.9,97.6L-66.0,99.6L-67.9,101.0L-69.4,103.5L-71.9,105.4L-72.6,106.7L-70.0,111.0L-70.0,113.7L-71.9,114.6L-74.0,115.6L-74.2,111.9L-73.6,110.1L-76.2,109.1L-75.5,106.3L-77.4,105.4L-80.6,107.3L-81.3,103.9L-85.0,106.9L-86.7,107.7L-85.2,109.9L-82.0,109.7L-79.9,110.6L-82.8,112.8L-84.5,114.6L-82.3,119.0L-80.7,121.5L-81.3,124.0L-81.3,126.5L-83.5,129.0L-85.0,131.4L-87.9,133.8L-92.2,135.7L-96.6,137.0L-97.6,138.8L-98.3,137.0L-101.0,137.0L-103.1,138.8L-104.2,140.8L-102.4,143.9L-100.2,146.2L-99.1,149.9L-99.5,152.2L-102.4,153.6L-104.6,155.9L-105.5,156.3L-105.3,154.4L-107.5,153.5L-109.0,151.4L-111.1,150.4L-112.3,149.3L-112.6,151.4L-113.6,154.4L-112.2,157.3L-111.1,159.1L-109.3,160.0L-107.7,162.4L-107.5,165.4L-106.5,167.0L-107.7,167.1L-110.7,164.9L-112.0,161.7L-112.3,159.5L-115.1,157.3L-114.6,154.4L-114.5,151.4L-115.9,146.9L-116.2,144.3L-119.1,145.6L-120.9,145.4L-120.6,142.4L-122.1,139.6L-124.2,137.0L-125.0,135.4L-126.7,136.2L-129.3,136.6L-131.5,137.3L-132.2,139.3L-134.4,140.1L-138.4,144.3L-141.4,146.2L-141.4,149.9L-142.0,152.9L-142.7,153.9L-143.2,155.4L-144.3,156.0L-145.3,157.2L-146.8,155.9L-147.8,152.2L-149.3,149.9L-150.1,146.9L-151.4,143.9L-152.2,140.8L-152.3,137.7L-153.0,137.4L-155.5,138.0L-157.7,135.7L-156.2,134.6L-158.9,133.5L-160.2,131.7L-161.3,130.8L-167.9,131.1L-173.7,130.4L-175.2,128.2L-176.2,127.8L-178.8,128.8L-181.0,127.8L-183.2,126.7L-184.6,124.0L-186.8,122.5L-188.3,123.2L-188.3,124.0L-187.1,126.9L-185.3,129.0L-184.6,130.6L-183.6,132.2L-183.2,129.8L-182.4,132.7L-179.5,132.7L-176.6,130.1L-176.0,129.3L-175.9,132.2L-173.0,133.5L-171.1,135.4L-172.7,138.5L-174.0,140.8L-177.3,143.1L-181.7,145.1L-186.8,148.0L-191.9,149.9L-194.8,150.4L-195.8,147.2L-196.3,144.7L-199.2,140.1L-201.4,137.0L-202.1,133.8L-204.3,130.6L-206.9,126.5L-207.3,124.0L-208.2,126.7L-210.1,125.4L-210.8,123.2L-211.1,121.2L-208.3,121.0L-207.2,118.4L-205.9,114.6L-205.7,111.5L-207.9,111.3L-210.1,112.4L-213.7,111.9L-215.9,111.9L-218.2,111.0L-219.5,108.2L-219.1,106.3L-220.0,105.0L-215.9,104.1L-215.9,103.1L-212.3,103.1L-209.4,101.5L-206.9,101.5L-205.0,102.9L-202.1,103.5L-199.9,103.5L-197.6,102.3L-197.7,100.4L-201.4,97.6L-203.5,95.5L-202.8,92.8L-200.9,90.9L-203.5,92.0L-206.4,93.0L-205.0,94.9L-206.4,95.5L-208.6,96.8L-209.4,95.1L-210.8,94.5L-209.4,93.2L-211.5,92.4L-213.3,92.4L-214.9,94.5L-216.3,96.5L-217.4,98.8L-217.8,100.6L-216.6,102.5L-215.9,103.3L-218.1,103.7L-219.8,105.0L-220.3,103.9L-223.2,103.7L-223.5,105.4L-224.9,104.6L-225.1,106.3L-224.3,107.7L-223.2,109.1L-224.3,109.5L-224.6,111.9L-225.7,111.7L-226.8,111.0L-227.3,108.6L-229.0,106.0L-229.9,104.4L-229.7,101.9L-231.2,100.6L-233.4,99.2L-235.5,97.2L-237.0,95.1L-238.2,94.3L-240.2,94.9L-240.1,97.2L-238.3,98.6L-237.0,101.2L-234.8,101.7L-234.8,102.7L-231.2,105.2L-231.9,105.8L-233.4,104.4L-234.1,106.0L-233.1,107.3L-234.1,108.6L-234.8,109.1L-235.3,109.1L-234.8,107.3L-235.5,105.4L-237.0,104.1L-239.2,103.1L-240.3,101.9L-242.1,100.6L-242.8,99.6L-243.5,97.6L-245.4,96.8L-247.2,98.0L-249.4,99.4L-251.6,98.8L-253.4,99.2L-253.4,101.5L-254.9,102.9L-257.1,103.9L-258.5,106.3L-257.8,107.7L-259.1,109.1L-260.6,110.4L-261.3,111.3L-264.6,111.5ZM781.4,112.8L780.3,111.5L778.7,110.6L776.6,111.0L776.7,108.2L775.7,107.7L776.7,103.5L776.1,99.6L777.9,98.2L782.2,98.6L786.9,98.8L787.8,95.5L787.8,93.4L785.9,90.7L782.7,89.2L782.8,87.9L785.1,87.4L787.2,87.6L787.2,85.4L789.8,85.9L791.7,84.3L791.8,82.7L794.6,81.5L796.0,78.9L796.5,77.7L799.7,76.5L802.0,75.3L801.6,71.5L801.4,67.6L804.8,65.7L804.8,68.9L804.1,71.5L805.2,75.3L807.7,74.3L810.2,75.3L813.5,74.0L816.4,73.3L818.3,74.0L820.1,72.0L820.1,67.6L822.2,65.7L824.9,67.0L824.9,64.0L823.7,61.5L827.3,60.7L830.2,60.7L833.2,59.2L831.0,57.4L825.9,58.6L822.2,59.2L820.5,56.3L820.8,51.6L821.5,49.1L825.9,43.4L826.3,41.7L823.7,40.6L821.5,41.7L820.5,45.1L817.1,49.4L814.7,53.2L814.5,56.3L816.9,59.2L814.2,62.9L813.5,66.2L812.8,69.7L810.3,71.5L808.3,71.8L807.7,69.4L806.7,64.9L805.5,62.1L804.8,60.7L802.6,63.5L799.7,64.9L797.5,62.1L796.8,56.3L797.1,53.2L799.7,50.1L803.3,47.8L805.5,44.1L808.4,38.1L810.6,32.5L814.2,28.5L817.1,24.3L821.5,22.2L826.6,19.5L830.2,20.0L834.6,23.0L833.2,25.6L837.5,26.8L841.9,27.7L849.2,34.4L849.2,38.1L845.5,39.9L840.4,37.4L837.5,37.0L839.7,43.4L843.3,46.8L844.1,43.4L847.7,44.8L847.7,39.9L850.6,38.1L853.5,39.2L854.2,30.5L856.4,32.5L857.2,36.3L859.3,33.6L866.6,30.5L868.1,31.3L873.9,28.9L877.5,25.2L878.3,29.3L882.6,27.3L888.4,30.5L889.9,28.9L887.0,25.6L886.7,20.0L889.2,13.0L895.0,11.5L895.4,20.0L894.3,28.5L896.4,32.5L895.0,37.4L897.2,34.4L897.9,28.5L896.7,20.0L897.9,11.5L901.5,15.4L905.9,14.4L907.4,8.0L915.4,6.5L916.1,-0.0L924.8,-5.8L935.0,-8.3L940.8,-16.7L945.2,-12.1L953.9,-5.8L943.7,9.0L949.6,6.5L954.6,8.0L961.2,8.0L968.5,10.5L974.3,13.0L977.9,20.0L981.6,17.7L987.4,17.7L993.2,12.0L994.7,13.0L1001.9,14.0L1007.8,17.7L1012.1,20.0L1022.3,24.3L1022.3,26.4L1029.6,26.4L1037.6,28.5L1037.6,24.3L1045.6,25.2L1051.4,28.5L1058.7,35.1L1063.5,39.9L1061.3,44.1L1057.9,43.4L1054.3,41.7L1051.4,43.4L1048.5,45.8L1047.8,51.6L1042.7,53.8L1037.6,59.2L1028.8,59.8L1026.7,64.9L1025.2,70.2L1022.3,77.7L1017.9,82.5L1016.5,80.1L1016.0,72.8L1016.5,67.6L1019.4,63.5L1023.0,57.7L1027.4,54.1L1022.3,54.7L1017.9,54.7L1015.0,60.7L1009.2,61.2L1001.9,61.2L996.1,62.1L990.3,68.9L986.7,73.5L990.3,75.3L994.7,77.7L993.9,84.7L991.7,89.2L990.3,92.4L986.7,97.6L981.6,99.6L979.7,101.0L978.2,103.5L975.7,105.4L975.0,106.7L977.6,111.0L977.6,113.7L975.7,114.6L973.6,115.6L973.4,111.9L974.0,110.1L971.4,109.1L972.1,106.3L970.2,105.4L967.0,107.3L966.3,103.9L962.6,106.9L960.9,107.7L962.4,109.9L965.6,109.7L967.7,110.6L964.8,112.8L963.1,114.6L965.3,119.0L966.9,121.5L966.3,124.0L966.3,126.5L964.1,129.0L962.6,131.4L959.7,133.8L955.4,135.7L951.0,137.0L950.0,138.8L949.3,137.0L946.6,137.0L944.5,138.8L943.4,140.8L945.2,143.9L947.4,146.2L948.5,149.9L948.1,152.2L945.2,153.6L943.0,155.9L942.1,156.3L942.3,154.4L940.1,153.5L938.6,151.4L936.5,150.4L935.3,149.3L935.0,151.4L934.0,154.4L935.4,157.3L936.5,159.1L938.3,160.0L939.9,162.4L940.1,165.4L941.1,167.0L939.9,167.1L936.9,164.9L935.6,161.7L935.3,159.5L932.5,157.3L933.0,154.4L933.1,151.4L931.7,146.9L931.4,144.3L928.5,145.6L926.7,145.4L927.0,142.4L925.5,139.6L923.4,137.0L922.6,135.4L920.9,136.2L918.3,136.6L916.1,137.3L915.4,139.3L913.2,140.1L909.2,144.3L906.2,146.2L906.2,149.9L905.6,152.9L904.9,153.9L904.4,155.4L903.3,156.0L902.3,157.2L900.8,155.9L899.8,152.2L898.3,149.9L897.5,146.9L896.2,143.9L895.4,140.8L895.3,137.7L894.6,137.4L892.1,138.0L889.9,135.7L891.4,134.6L888.7,133.5L887.4,131.7L886.3,130.8L879.7,131.1L873.9,130.4L872.4,128.2L871.4,127.8L868.8,128.8L866.6,127.8L864.4,126.7L863.0,124.0L860.8,122.5L859.3,123.2L859.3,124.0L860.5,126.9L862.3,129.0L863.0,130.6L864.0,132.2L864.4,129.8L865.2,132.7L868.1,132.7L871.0,130.1L871.6,129.3L871.7,132.2L874.6,133.5L876.5,135.4L874.9,138.5L873.6,140.8L870.3,143.1L865.9,145.1L860.8,148.0L855.7,149.9L852.8,150.4L851.8,147.2L851.3,144.7L848.4,140.1L846.2,137.0L845.5,133.8L843.3,130.6L840.7,126.5L840.3,124.0L839.4,126.7L837.5,125.4L836.8,123.2L836.5,121.2L839.3,121.0L840.4,118.4L841.7,114.6L841.9,111.5L839.7,111.3L837.5,112.4L833.9,111.9L831.7,111.9L829.4,111.0L828.1,108.2L828.5,106.3L827.6,105.0L831.7,104.1L831.7,103.1L835.3,103.1L838.2,101.5L840.7,101.5L842.6,102.9L845.5,103.5L847.7,103.5L850.0,102.3L849.9,100.4L846.2,97.6L844.1,95.5L844.8,92.8L846.7,90.9L844.1,92.0L841.2,93.0L842.6,94.9L841.2,95.5L839.0,96.8L838.2,95.1L836.8,94.5L838.2,93.2L836.1,92.4L834.3,92.4L832.7,94.5L831.3,96.5L830.2,98.8L829.8,100.6L831.0,102.5L831.7,103.3L829.5,103.7L827.8,105.0L827.3,103.9L824.4,103.7L824.1,105.4L822.7,104.6L822.5,106.3L823.3,107.7L824.4,109.1L823.3,109.5L823.0,111.9L821.9,111.7L820.8,111.0L820.3,108.6L818.6,106.0L817.7,104.4L817.9,101.9L816.4,100.6L814.2,99.2L812.1,97.2L810.6,95.1L809.4,94.3L807.4,94.9L807.5,97.2L809.3,98.6L810.6,101.2L812.8,101.7L812.8,102.7L816.4,105.2L815.7,105.8L814.2,104.4L813.5,106.0L814.5,107.3L813.5,108.6L812.8,109.1L812.3,109.1L812.8,107.3L812.1,105.4L810.6,104.1L808.4,103.1L807.3,101.9L805.5,100.6L804.8,99.6L804.1,97.6L802.2,96.8L800.4,98.0L798.2,99.4L796.0,98.8L794.2,99.2L794.2,101.5L792.7,102.9L790.5,103.9L789.1,106.3L789.8,107.7L788.5,109.1L787.0,110.4L786.3,111.3L783.0,111.5ZM257.4,84.5L260.6,84.1L263.5,83.1L267.6,82.0L268.2,78.5L266.1,77.7L265.4,75.3L263.5,72.8L262.8,70.2L262.8,65.7L259.9,65.7L261.0,63.2L258.4,63.2L257.0,66.2L257.7,70.2L258.4,72.8L260.9,73.0L261.3,75.8L259.2,77.0L259.6,79.4L258.1,80.6L261.0,81.5L259.4,82.5ZM-266.4,84.5L-263.2,84.1L-260.3,83.1L-256.2,82.0L-255.6,78.5L-257.7,77.7L-258.4,75.3L-260.3,72.8L-261.0,70.2L-261.0,65.7L-263.9,65.7L-262.8,63.2L-265.4,63.2L-266.8,66.2L-266.1,70.2L-265.4,72.8L-262.9,73.0L-262.5,75.8L-264.6,77.0L-264.2,79.4L-265.7,80.6L-262.8,81.5L-264.4,82.5ZM781.2,84.5L784.4,84.1L787.3,83.1L791.4,82.0L792.0,78.5L789.9,77.7L789.2,75.3L787.3,72.8L786.6,70.2L786.6,65.7L783.7,65.7L784.8,63.2L782.2,63.2L780.8,66.2L781.5,70.2L782.2,72.8L784.7,73.0L785.1,75.8L783.0,77.0L783.4,79.4L781.9,80.6L784.8,81.5L783.2,82.5ZM251.2,81.1L254.1,80.8L256.7,79.6L257.0,76.5L257.6,73.8L256.2,72.0L253.8,72.3L253.3,74.3L251.2,74.8L251.9,77.2L251.2,79.6ZM-272.6,81.1L-269.7,80.8L-267.1,79.6L-266.8,76.5L-266.2,73.8L-267.6,72.0L-270.0,72.3L-270.5,74.3L-272.6,74.8L-271.9,77.2L-272.6,79.6ZM775.0,81.1L777.9,80.8L780.5,79.6L780.8,76.5L781.4,73.8L780.0,72.0L777.6,72.3L777.1,74.3L775.0,74.8L775.7,77.2L775.0,79.6ZM283.9,109.1L288.4,108.8L287.8,111.5L283.9,109.9ZM-239.9,109.1L-235.4,108.8L-236.0,111.5L-239.9,109.9ZM807.7,109.1L812.2,108.8L811.6,111.5L807.7,109.9ZM277.6,107.3L279.8,106.9L279.8,103.5L277.8,103.9ZM-246.2,107.3L-244.0,106.9L-244.0,103.5L-246.0,103.9ZM801.4,107.3L803.6,106.9L803.6,103.5L801.6,103.9ZM340.6,17.7L343.5,9.0L345.7,1.6L349.4,-3.5L355.9,-7.7L364.6,-12.1L366.1,-8.9L358.8,-3.5L353.0,2.7L350.1,10.5L348.6,17.7L348.6,21.7L344.3,21.3ZM-183.2,17.7L-180.3,9.0L-178.1,1.6L-174.4,-3.5L-167.9,-7.7L-159.2,-12.1L-157.7,-8.9L-165.0,-3.5L-170.8,2.7L-173.7,10.5L-175.2,17.7L-175.2,21.7L-179.5,21.3ZM864.4,17.7L867.3,9.0L869.5,1.6L873.2,-3.5L879.7,-7.7L888.4,-12.1L889.9,-8.9L882.6,-3.5L876.8,2.7L873.9,10.5L872.4,17.7L872.4,21.7L868.1,21.3ZM465.0,-1.7L472.3,6.5L484.0,-0.0L476.7,-5.8L465.0,-5.8ZM-58.8,-1.7L-51.5,6.5L-39.8,-0.0L-47.1,-5.8L-58.8,-5.8ZM988.8,-1.7L996.1,6.5L1007.8,-0.0L1000.5,-5.8L988.8,-5.8ZM281.7,-26.1L290.4,-9.5L300.6,-18.8L305.0,-34.1L290.4,-36.7ZM-242.1,-26.1L-233.4,-9.5L-223.2,-18.8L-218.8,-34.1L-233.4,-36.7ZM805.5,-26.1L814.2,-9.5L824.4,-18.8L828.8,-34.1L814.2,-36.7ZM456.2,116.3L457.8,116.0L462.1,115.5L464.7,115.5L467.7,115.1L469.4,114.2L470.6,111.9L470.9,109.1L472.3,106.0L471.4,102.7L469.7,103.5L469.4,106.0L468.7,108.2L465.8,111.0L464.7,110.4L463.6,112.8L462.9,113.5L459.2,113.7L456.3,115.5ZM-67.6,116.3L-66.0,116.0L-61.7,115.5L-59.1,115.5L-56.1,115.1L-54.4,114.2L-53.2,111.9L-52.9,109.1L-51.5,106.0L-52.4,102.7L-54.1,103.5L-54.4,106.0L-55.1,108.2L-58.0,111.0L-59.1,110.4L-60.2,112.8L-60.9,113.5L-64.6,113.7L-67.5,115.5ZM980.0,116.3L981.6,116.0L985.9,115.5L988.5,115.5L991.5,115.1L993.2,114.2L994.4,111.9L994.7,109.1L996.1,106.0L995.2,102.7L993.5,103.5L993.2,106.0L992.5,108.2L989.6,111.0L988.5,110.4L987.4,112.8L986.7,113.5L983.0,113.7L980.1,115.5ZM469.4,102.5L470.9,100.6L474.2,101.5L477.4,99.0L475.7,97.6L472.0,94.5L471.6,98.6L469.8,99.6ZM-54.4,102.5L-52.9,100.6L-49.6,101.5L-46.4,99.0L-48.1,97.6L-51.8,94.5L-52.2,98.6L-54.0,99.6ZM993.2,102.5L994.7,100.6L998.0,101.5L1001.2,99.0L999.5,97.6L995.8,94.5L995.4,98.6L993.6,99.6ZM454.9,117.2L457.3,117.0L457.0,120.7L455.3,121.2L454.4,118.1ZM-68.9,117.2L-66.5,117.0L-66.8,120.7L-68.5,121.2L-69.4,118.1ZM978.7,117.2L981.1,117.0L980.8,120.7L979.1,121.2L978.2,118.1ZM472.3,74.5L473.8,77.7L474.2,82.5L475.2,87.0L473.8,91.8L472.3,93.4L472.3,89.2L472.3,84.7L472.0,80.1ZM-51.5,74.5L-50.0,77.7L-49.6,82.5L-48.6,87.0L-50.0,91.8L-51.5,93.4L-51.5,89.2L-51.5,84.7L-51.8,80.1ZM996.1,74.5L997.6,77.7L998.0,82.5L999.0,87.0L997.6,91.8L996.1,93.4L996.1,89.2L996.1,84.7L995.8,80.1ZM441.8,131.1L443.2,131.7L441.5,136.2L440.4,134.1ZM-82.0,131.1L-80.6,131.7L-82.3,136.2L-83.4,134.1ZM965.6,131.1L967.0,131.7L965.3,136.2L964.2,134.1ZM423.9,140.5L426.5,139.3L427.2,139.8L425.0,142.1ZM-99.9,140.5L-97.3,139.3L-96.6,139.8L-98.8,142.1ZM947.7,140.5L950.3,139.3L951.0,139.8L948.8,142.1ZM381.8,154.8L383.8,156.6L384.7,158.8L382.8,160.3L381.8,158.1ZM-142.0,154.8L-140.0,156.6L-139.1,158.8L-141.0,160.3L-142.0,158.1ZM905.6,154.8L907.6,156.6L908.5,158.8L906.6,160.3L905.6,158.1ZM441.0,141.6L443.5,141.8L443.2,144.7L442.5,146.9L445.4,148.7L446.1,150.4L443.9,149.2L441.8,148.7L440.7,147.2L440.2,145.0ZM-82.8,141.6L-80.3,141.8L-80.6,144.7L-81.3,146.9L-78.4,148.7L-77.7,150.4L-79.9,149.2L-82.0,148.7L-83.1,147.2L-83.6,145.0ZM964.8,141.6L967.3,141.8L967.0,144.7L966.3,146.9L969.2,148.7L969.9,150.4L967.7,149.2L965.6,148.7L964.5,147.2L964.0,145.0ZM443.2,158.8L445.4,156.4L448.2,154.8L449.8,158.1L448.3,160.5L446.1,159.5ZM-80.6,158.8L-78.4,156.4L-75.6,154.8L-74.0,158.1L-75.5,160.5L-77.7,159.5ZM967.0,158.8L969.2,156.4L972.0,154.8L973.6,158.1L972.1,160.5L969.9,159.5ZM424.3,166.8L425.8,166.5L427.6,165.4L430.1,164.2L433.0,161.7L435.6,158.8L437.0,159.8L438.8,161.4L437.4,162.7L437.0,164.6L438.6,167.5L436.7,168.3L436.7,170.5L435.2,172.2L434.5,174.8L432.3,174.8L430.1,173.7L427.9,173.8L426.0,173.1L425.8,171.2L424.3,169.0ZM-99.5,166.8L-98.0,166.5L-96.2,165.4L-93.7,164.2L-90.8,161.7L-88.2,158.8L-86.8,159.8L-85.0,161.4L-86.4,162.7L-86.8,164.6L-85.2,167.5L-87.1,168.3L-87.1,170.5L-88.6,172.2L-89.3,174.8L-91.5,174.8L-93.7,173.7L-95.9,173.8L-97.8,173.1L-98.0,171.2L-99.5,169.0ZM948.1,166.8L949.6,166.5L951.4,165.4L953.9,164.2L956.8,161.7L959.4,158.8L960.8,159.8L962.6,161.4L961.2,162.7L960.8,164.6L962.4,167.5L960.5,168.3L960.5,170.5L959.0,172.2L958.3,174.8L956.1,174.8L953.9,173.7L951.7,173.8L949.8,173.1L949.6,171.2L948.1,169.0ZM404.4,160.8L407.6,161.4L411.6,165.4L413.4,166.1L416.3,169.0L417.7,171.9L419.9,173.7L419.6,177.5L417.7,177.3L414.5,174.8L412.4,172.2L410.5,169.4L409.0,166.5L406.8,164.2ZM-119.4,160.8L-116.2,161.4L-112.2,165.4L-110.4,166.1L-107.5,169.0L-106.1,171.9L-103.9,173.7L-104.2,177.5L-106.1,177.3L-109.3,174.8L-111.4,172.2L-113.3,169.4L-114.8,166.5L-117.0,164.2ZM928.2,160.8L931.4,161.4L935.4,165.4L937.2,166.1L940.1,169.0L941.5,171.9L943.7,173.7L943.4,177.5L941.5,177.3L938.3,174.8L936.2,172.2L934.3,169.4L932.8,166.5L930.6,164.2ZM418.8,178.9L420.7,177.7L423.6,178.6L426.9,178.5L429.7,179.2L432.3,180.4L432.2,181.6L427.2,181.1L422.8,180.4L420.5,179.8ZM-105.0,178.9L-103.1,177.7L-100.2,178.6L-96.9,178.5L-94.1,179.2L-91.5,180.4L-91.6,181.6L-96.6,181.1L-101.0,180.4L-103.3,179.8ZM942.6,178.9L944.5,177.7L947.4,178.6L950.7,178.5L953.5,179.2L956.1,180.4L956.0,181.6L951.0,181.1L946.6,180.4L944.3,179.8ZM445.4,184.1L447.6,182.1L450.8,181.3L449.8,182.4L446.8,183.9ZM-78.4,184.1L-76.2,182.1L-73.0,181.3L-74.0,182.4L-77.0,183.9ZM969.2,184.1L971.4,182.1L974.6,181.3L973.6,182.4L970.6,183.9ZM440.0,167.8L441.5,167.1L444.7,167.7L447.9,166.7L446.8,168.4L441.8,168.4L440.6,170.2L442.5,170.3L445.1,170.2L445.1,170.7L442.9,171.8L443.9,173.8L444.7,175.6L443.6,176.3L442.5,175.1L441.8,173.1L440.7,173.4L440.9,177.0L439.6,177.0L439.6,174.1L438.6,173.1L439.6,170.5ZM-83.8,167.8L-82.3,167.1L-79.1,167.7L-75.9,166.7L-77.0,168.4L-82.0,168.4L-83.2,170.2L-81.3,170.3L-78.7,170.2L-78.7,170.7L-80.9,171.8L-79.9,173.8L-79.1,175.6L-80.2,176.3L-81.3,175.1L-82.0,173.1L-83.1,173.4L-82.9,177.0L-84.2,177.0L-84.2,174.1L-85.2,173.1L-84.2,170.5ZM963.8,167.8L965.3,167.1L968.5,167.7L971.7,166.7L970.6,168.4L965.6,168.4L964.4,170.2L966.3,170.3L968.9,170.2L968.9,170.7L966.7,171.8L967.7,173.8L968.5,175.6L967.4,176.3L966.3,175.1L965.6,173.1L964.5,173.4L964.7,177.0L963.4,177.0L963.4,174.1L962.4,173.1L963.4,170.5ZM456.3,170.2L458.5,169.6L460.7,170.2L462.1,173.8L465.0,171.3L470.9,172.8L475.9,174.5L478.1,176.3L480.7,177.7L479.6,178.9L481.8,181.4L485.0,184.1L481.0,183.9L478.1,181.0L475.2,180.2L473.8,182.1L470.9,182.3L467.9,180.7L466.5,181.1L467.7,178.9L466.5,177.0L462.9,175.4L459.2,174.8L458.9,173.1L460.7,172.3L458.5,172.2ZM-67.5,170.2L-65.3,169.6L-63.1,170.2L-61.7,173.8L-58.8,171.3L-52.9,172.8L-47.9,174.5L-45.7,176.3L-43.1,177.7L-44.2,178.9L-42.0,181.4L-38.8,184.1L-42.8,183.9L-45.7,181.0L-48.6,180.2L-50.0,182.1L-52.9,182.3L-55.9,180.7L-57.3,181.1L-56.1,178.9L-57.3,177.0L-60.9,175.4L-64.6,174.8L-64.9,173.1L-63.1,172.3L-65.3,172.2ZM980.1,170.2L982.3,169.6L984.5,170.2L985.9,173.8L988.8,171.3L994.7,172.8L999.7,174.5L1001.9,176.3L1004.5,177.7L1003.4,178.9L1005.6,181.4L1008.8,184.1L1004.8,183.9L1001.9,181.0L999.0,180.2L997.6,182.1L994.7,182.3L991.7,180.7L990.3,181.1L991.5,178.9L990.3,177.0L986.7,175.4L983.0,174.8L982.7,173.1L984.5,172.3L982.3,172.2ZM481.8,177.2L486.9,175.1L487.3,176.3L484.0,178.2ZM-42.0,177.2L-36.9,175.1L-36.5,176.3L-39.8,178.2ZM1005.6,177.2L1010.7,175.1L1011.1,176.3L1007.8,178.2ZM431.1,202.6L431.9,201.5L435.2,199.5L438.8,198.7L442.5,197.2L443.6,194.4L445.8,193.0L448.3,190.3L450.5,189.3L452.7,190.8L454.1,190.9L455.1,187.8L456.3,186.9L458.5,185.7L462.1,186.9L464.7,186.6L463.6,188.8L462.9,191.1L465.8,192.6L468.7,194.9L470.6,194.9L471.6,191.1L471.7,187.3L473.0,184.7L474.5,187.3L474.9,190.0L477.1,191.1L478.1,194.9L478.6,197.2L481.8,199.0L483.5,202.3L485.4,204.7L488.3,207.4L489.0,211.8L488.3,216.5L486.1,220.8L484.4,225.2L483.8,227.9L480.3,228.9L478.6,230.9L476.4,229.2L474.5,230.3L470.9,229.0L469.1,227.0L468.7,224.9L466.5,224.5L466.5,221.7L466.2,219.9L465.3,222.5L463.6,223.1L462.9,222.9L461.0,219.6L457.8,218.2L453.4,217.5L449.0,218.7L446.1,219.9L445.4,221.5L440.3,221.5L437.4,223.4L434.5,223.2L433.0,222.2L434.0,218.2L433.0,214.8L432.3,211.5L430.8,208.2L430.8,205.8ZM-92.7,202.6L-91.9,201.5L-88.6,199.5L-85.0,198.7L-81.3,197.2L-80.2,194.4L-78.0,193.0L-75.5,190.3L-73.3,189.3L-71.1,190.8L-69.7,190.9L-68.7,187.8L-67.5,186.9L-65.3,185.7L-61.7,186.9L-59.1,186.6L-60.2,188.8L-60.9,191.1L-58.0,192.6L-55.1,194.9L-53.2,194.9L-52.2,191.1L-52.1,187.3L-50.8,184.7L-49.3,187.3L-48.9,190.0L-46.7,191.1L-45.7,194.9L-45.2,197.2L-42.0,199.0L-40.3,202.3L-38.4,204.7L-35.5,207.4L-34.8,211.8L-35.5,216.5L-37.7,220.8L-39.4,225.2L-40.0,227.9L-43.5,228.9L-45.2,230.9L-47.4,229.2L-49.3,230.3L-52.9,229.0L-54.7,227.0L-55.1,224.9L-57.3,224.5L-57.3,221.7L-57.6,219.9L-58.5,222.5L-60.2,223.1L-60.9,222.9L-62.8,219.6L-66.0,218.2L-70.4,217.5L-74.8,218.7L-77.7,219.9L-78.4,221.5L-83.5,221.5L-86.4,223.4L-89.3,223.2L-90.8,222.2L-89.8,218.2L-90.8,214.8L-91.5,211.5L-93.0,208.2L-93.0,205.8ZM954.9,202.6L955.7,201.5L959.0,199.5L962.6,198.7L966.3,197.2L967.4,194.4L969.6,193.0L972.1,190.3L974.3,189.3L976.5,190.8L977.9,190.9L978.9,187.8L980.1,186.9L982.3,185.7L985.9,186.9L988.5,186.6L987.4,188.8L986.7,191.1L989.6,192.6L992.5,194.9L994.4,194.9L995.4,191.1L995.5,187.3L996.8,184.7L998.3,187.3L998.7,190.0L1000.9,191.1L1001.9,194.9L1002.4,197.2L1005.6,199.0L1007.3,202.3L1009.2,204.7L1012.1,207.4L1012.8,211.8L1012.1,216.5L1009.9,220.8L1008.2,225.2L1007.6,227.9L1004.1,228.9L1002.4,230.9L1000.2,229.2L998.3,230.3L994.7,229.0L992.9,227.0L992.5,224.9L990.3,224.5L990.3,221.7L990.0,219.9L989.1,222.5L987.4,223.1L986.7,222.9L984.8,219.6L981.6,218.2L977.2,217.5L972.8,218.7L969.9,219.9L969.2,221.5L964.1,221.5L961.2,223.4L958.3,223.2L956.8,222.2L957.8,218.2L956.8,214.8L956.1,211.5L954.6,208.2L954.6,205.8ZM476.2,233.9L478.9,234.7L481.5,234.3L481.3,237.4L479.6,239.4L478.1,239.4L477.0,236.8ZM-47.6,233.9L-44.9,234.7L-42.3,234.3L-42.5,237.4L-44.2,239.4L-45.7,239.4L-46.8,236.8ZM1000.0,233.9L1002.7,234.7L1005.3,234.3L1005.1,237.4L1003.4,239.4L1001.9,239.4L1000.8,236.8ZM517.0,222.4L519.3,224.3L521.1,226.1L521.8,228.1L525.1,228.1L524.5,231.1L523.2,231.7L522.9,233.6L520.8,235.7L519.9,235.1L520.6,232.8L518.6,231.3L519.9,229.8L519.9,227.4L519.2,225.8L517.4,223.8ZM-6.8,222.4L-4.5,224.3L-2.7,226.1L-2.0,228.1L1.3,228.1L0.7,231.1L-0.6,231.7L-0.9,233.6L-3.0,235.7L-3.9,235.1L-3.2,232.8L-5.2,231.3L-3.9,229.8L-3.9,227.4L-4.6,225.8L-6.4,223.8ZM1040.8,222.4L1043.1,224.3L1044.9,226.1L1045.6,228.1L1048.9,228.1L1048.3,231.1L1047.0,231.7L1046.7,233.6L1044.6,235.7L1043.7,235.1L1044.4,232.8L1042.4,231.3L1043.7,229.8L1043.7,227.4L1043.0,225.8L1041.2,223.8ZM517.0,233.6L519.3,235.9L517.1,239.8L514.9,241.0L514.1,244.1L511.6,245.8L509.4,245.0L508.0,244.1L510.1,240.8L513.8,238.4L515.2,235.9ZM-6.8,233.6L-4.5,235.9L-6.7,239.8L-8.9,241.0L-9.7,244.1L-12.2,245.8L-14.4,245.0L-15.8,244.1L-13.7,240.8L-10.0,238.4L-8.6,235.9ZM1040.8,233.6L1043.1,235.9L1040.9,239.8L1038.7,241.0L1037.9,244.1L1035.4,245.8L1033.2,245.0L1031.8,244.1L1033.9,240.8L1037.6,238.4L1039.0,235.9ZM166.8,305.5L172.6,294.6L181.3,288.6L182.8,291.2L175.5,298.1L172.6,307.5ZM-357.0,305.5L-351.2,294.6L-342.5,288.6L-341.0,291.2L-348.3,298.1L-351.2,307.5ZM690.6,305.5L696.4,294.6L705.1,288.6L706.6,291.2L699.3,298.1L696.4,307.5Z" fill="#343332" stroke="#191a1a" stroke-width="1" stroke-linejoin="round"/><path d="M337.7,110.1L339.9,111.3L344.3,111.0L344.0,106.9L342.8,105.4L342.5,102.5L345.0,101.5L342.1,100.0L339.9,96.5L342.8,95.1L342.8,92.0L339.9,91.3L337.0,92.4L334.8,94.5L333.8,96.5L334.8,99.6L336.4,101.9L337.7,104.4L337.0,106.9ZM350.5,96.5L352.3,98.0L354.5,95.5L354.5,92.8L352.3,92.4L350.8,93.9ZM416.7,81.1L418.5,81.5L421.4,78.9L425.3,74.0L425.8,70.7L424.3,71.0L422.8,74.8L419.9,77.7L417.7,79.6ZM372.6,94.9L374.8,92.8L379.9,92.8L380.6,92.0L377.0,91.5L373.4,92.4ZM309.6,59.2L313.4,58.3L313.0,55.4L310.1,55.0ZM315.9,56.3L318.5,55.4L317.4,51.6L315.6,52.3ZM312.0,169.7L313.0,168.6L315.5,168.6L315.6,170.5L314.4,172.9L312.3,172.9L311.8,171.2ZM308.2,173.9L309.1,173.9L309.6,177.7L311.1,181.6L310.2,181.9L308.6,178.5ZM315.0,182.9L316.0,183.0L316.8,186.6L317.1,190.2L316.0,190.0L315.6,186.6ZM131.8,92.0L136.2,89.2L140.6,88.1L142.5,91.3L142.3,92.4L139.1,92.4L134.8,92.0ZM138.0,101.5L140.1,101.5L141.6,94.9L142.0,93.7L139.1,94.1L137.7,96.5ZM142.8,93.7L147.1,93.4L149.3,95.5L148.6,96.5L146.8,99.2L145.7,99.6L144.2,97.6L144.5,95.1ZM144.5,102.3L147.8,102.1L150.8,100.2L150.8,99.6L147.1,100.2L144.6,101.5ZM149.7,99.0L154.7,98.6L154.4,97.2L150.8,97.8ZM121.7,83.6L125.3,83.6L123.8,75.8L121.4,76.5ZM95.5,56.3L99.8,56.3L104.2,51.6L107.1,50.7L103.5,50.1L98.4,52.6L95.5,54.7ZM83.8,43.4L89.6,43.4L94.0,39.9L93.3,36.3L88.2,37.4L83.8,39.9ZM103.5,62.9L108.6,62.1L112.2,61.2L108.6,60.1L105.7,61.2ZM115.8,68.9L118.0,68.9L118.0,64.9L115.8,64.9ZM140.6,152.6L142.0,152.6L142.0,151.4L140.9,151.3ZM163.9,191.5L164.9,191.8L165.6,193.3L164.6,193.0Z" fill="#191a1a"/></g></svg>
<div class="b" style="left:356.0px;top:1013.9px;width:59.0px;height:59.0px;border-radius:50%;background:radial-gradient(circle closest-side,#fdd035 0%,#fdd035 52%,#fdd035ee 60%,#fdd035c0 68%,#fdd03580 77%,#fdd03540 86%,#fdd03514 94%,#fdd03500 100%);"></div>
<span class="t" style="left:375.49px;top:1037.00px;font-size:12px;line-height:15px;color:#14182a;font-weight:700;-webkit-text-stroke:0.35px #14182a;">236</span>
<div class="b" style="left:413.1px;top:1014.5px;width:59.0px;height:59.0px;border-radius:50%;background:radial-gradient(circle closest-side,#fdd035 0%,#fdd035 52%,#fdd035ee 60%,#fdd035c0 68%,#fdd03580 77%,#fdd03540 86%,#fdd03514 94%,#fdd03500 100%);"></div>
<span class="t" style="left:432.59px;top:1037.00px;font-size:12px;line-height:15px;color:#14182a;font-weight:700;-webkit-text-stroke:0.35px #14182a;">655</span>
<div class="b" style="left:536.6px;top:977.6px;width:84.0px;height:84.0px;border-radius:50%;background:radial-gradient(circle closest-side,#e5521f 0%,#e5521f 52%,#e5521fee 60%,#e5521fc0 68%,#e5521f80 77%,#e5521f40 86%,#e5521f14 94%,#e5521f00 100%);"></div>
<span class="t" style="left:566.92px;top:1013.00px;font-size:12px;line-height:15px;color:#14182a;font-weight:700;-webkit-text-stroke:0.35px #14182a;">1.7k</span>
<div class="b" style="left:619.6px;top:989.8px;width:38.6px;height:38.6px;border-radius:50%;background:radial-gradient(circle closest-side,#8fc320 0%,#8fc320 52%,#8fc320ee 60%,#8fc320c0 68%,#8fc32080 77%,#8fc32040 86%,#8fc32014 94%,#8fc32000 100%);"></div>
<span class="t" style="left:632.23px;top:1003.00px;font-size:12px;line-height:15px;color:#14182a;font-weight:700;-webkit-text-stroke:0.35px #14182a;">52</span>
<div class="b" style="left:612.1px;top:1042.7px;width:38.6px;height:38.6px;border-radius:50%;background:radial-gradient(circle closest-side,#8fc320 0%,#8fc320 52%,#8fc320ee 60%,#8fc320c0 68%,#8fc32080 77%,#8fc32040 86%,#8fc32014 94%,#8fc32000 100%);"></div>
<span class="t" style="left:624.73px;top:1055.00px;font-size:12px;line-height:15px;color:#14182a;font-weight:700;-webkit-text-stroke:0.35px #14182a;">26</span>
<div class="b" style="left:723.8px;top:1019.7px;width:59.0px;height:59.0px;border-radius:50%;background:radial-gradient(circle closest-side,#fdd035 0%,#fdd035 52%,#fdd035ee 60%,#fdd035c0 68%,#fdd03580 77%,#fdd03540 86%,#fdd03514 94%,#fdd03500 100%);"></div>
<span class="t" style="left:746.63px;top:1043.00px;font-size:12px;line-height:15px;color:#14182a;font-weight:700;-webkit-text-stroke:0.35px #14182a;">88</span>
<div class="b" style="left:681.5px;top:1066.5px;width:38.6px;height:38.6px;border-radius:50%;background:radial-gradient(circle closest-side,#8fc320 0%,#8fc320 52%,#8fc320ee 60%,#8fc320c0 68%,#8fc32080 77%,#8fc32040 86%,#8fc32014 94%,#8fc32000 100%);"></div>
<span class="t" style="left:694.13px;top:1079.00px;font-size:12px;line-height:15px;color:#14182a;font-weight:700;-webkit-text-stroke:0.35px #14182a;">71</span>
<div class="b" style="left:860px;top:205px;width:811px;height:287px;overflow:hidden;">
<div class="b" style="left:1px;top:1px;width:809px;height:26px;background:#1a243c;"></div>
<div class="b" style="left:1px;top:27px;width:799px;height:1px;background:#25385a;"></div>
<span class="t" style="left:45.00px;top:7.00px;font-size:12px;line-height:15px;color:#8fa3b8;letter-spacing:0.043px;">interfaceID</span>
<span class="t" style="left:145.00px;top:7.00px;font-size:12px;line-height:15px;color:#8fa3b8;letter-spacing:0.015px;">accountid</span>
<span class="t" style="left:245.00px;top:7.00px;font-size:12px;line-height:15px;color:#8fa3b8;letter-spacing:-0.165px;">src</span>
<span class="t" style="left:345.00px;top:7.00px;font-size:12px;line-height:15px;color:#8fa3b8;letter-spacing:0.205px;">dest</span>
<span class="t" style="left:445.00px;top:7.00px;font-size:12px;line-height:15px;color:#8fa3b8;letter-spacing:0.164px;">protocol</span>
<span class="t" style="left:516.00px;top:7.00px;font-size:12px;line-height:15px;color:#8fa3b8;letter-spacing:-0.062px;">malicious_confidence</span>
<span class="t" style="left:616.00px;top:7.00px;font-size:12px;line-height:15px;color:#8fa3b8;letter-spacing:-0.055px;">label_name</span>
<span class="t" style="left:18.93px;top:34.00px;font-size:12px;line-height:15px;color:#8593a5;">1</span>
<span class="t" style="left:45.00px;top:34.00px;font-size:12px;line-height:15px;color:#d5dde6;letter-spacing:-0.151px;">eni-4b118871</span>
<span class="t" style="left:145.00px;top:34.00px;font-size:12px;line-height:15px;color:#d5dde6;letter-spacing:0.026px;">382844716374</span>
<span class="t" style="left:245.00px;top:34.00px;font-size:12px;line-height:15px;color:#d5dde6;letter-spacing:-0.474px;">80.252.107.173 :</span>
<span class="t" style="left:245.00px;top:52.00px;font-size:12px;line-height:15px;color:#d5dde6;letter-spacing:-0.074px;">20641</span>
<span class="t" style="left:345.00px;top:34.00px;font-size:12px;line-height:15px;color:#d5dde6;letter-spacing:-0.620px;">172.31.10.8 :</span>
<span class="t" style="left:345.00px;top:52.00px;font-size:12px;line-height:15px;color:#d5dde6;letter-spacing:-0.274px;">21567</span>
<span class="t" style="left:445.00px;top:34.00px;font-size:12px;line-height:15px;color:#d5dde6;">6</span>
<span class="t" style="left:516.00px;top:34.00px;font-size:12px;line-height:15px;color:#d5dde6;letter-spacing:-0.047px;">high</span>
<span class="t" style="left:616.70px;top:34.00px;font-size:12px;line-height:15px;color:#d5dde6;letter-spacing:0.063px;">[ Malware/Emotet , Actor/MUMMYSPIDER ,</span>
<span class="t" style="left:616.70px;top:52.00px;font-size:12px;line-height:15px;color:#d5dde6;letter-spacing:-0.137px;">ThreatType/Downloader , MaliciousConfidence/High ,</span>
<span class="t" style="left:616.70px;top:70.00px;font-size:12px;line-height:15px;color:#d5dde6;letter-spacing:-0.033px;">MitreATTCK/CommandAndControl/Emotet ,</span>
<span class="t" style="left:616.70px;top:88.00px;font-size:12px;line-height:15px;color:#d5dde6;letter-spacing:-0.033px;">MitreATTCK/CommandAndControl/Geodo ,</span>
<div class="b" style="left:1px;top:108px;width:809px;height:1px;background:#25385a;"></div>
<span class="t" style="left:18.93px;top:115.00px;font-size:12px;line-height:15px;color:#8593a5;">2</span>
<span class="t" style="left:45.00px;top:115.00px;font-size:12px;line-height:15px;color:#d5dde6;letter-spacing:-0.151px;">eni-4b118871</span>
<span class="t" style="left:145.00px;top:115.00px;font-size:12px;line-height:15px;color:#d5dde6;letter-spacing:0.026px;">382844716374</span>
<span class="t" style="left:245.00px;top:115.00px;font-size:12px;line-height:15px;color:#d5dde6;letter-spacing:-0.280px;">168.235.74.192</span>
<span class="t" style="left:245.00px;top:133.00px;font-size:12px;line-height:15px;color:#d5dde6;letter-spacing:0.066px;">: 22509</span>
<span class="t" style="left:345.00px;top:115.00px;font-size:12px;line-height:15px;color:#d5dde6;letter-spacing:-0.453px;">172.31.10.8 : 22</span>
<span class="t" style="left:445.00px;top:115.00px;font-size:12px;line-height:15px;color:#d5dde6;">6</span>
<span class="t" style="left:516.00px;top:115.00px;font-size:12px;line-height:15px;color:#d5dde6;letter-spacing:-0.047px;">high</span>
<span class="t" style="left:616.70px;top:115.00px;font-size:12px;line-height:15px;color:#d5dde6;letter-spacing:-0.109px;">[ CSD/CSWR-17049 , ThreatType/Criminal ,</span>
<span class="t" style="left:616.70px;top:133.00px;font-size:12px;line-height:15px;color:#d5dde6;letter-spacing:-0.096px;">Actor/MUMMYSPIDER , KillChain/C2 ,</span>
<span class="t" style="left:616.70px;top:151.00px;font-size:12px;line-height:15px;color:#d5dde6;letter-spacing:-0.062px;">MaliciousConfidence/High , IPAddressType/C2 ]</span>
<div class="b" style="left:1px;top:171px;width:809px;height:1px;background:#25385a;"></div>
<span class="t" style="left:18.93px;top:178.00px;font-size:12px;line-height:15px;color:#8593a5;">3</span>
<span class="t" style="left:45.00px;top:178.00px;font-size:12px;line-height:15px;color:#d5dde6;letter-spacing:-0.151px;">eni-4b118871</span>
<span class="t" style="left:145.00px;top:178.00px;font-size:12px;line-height:15px;color:#d5dde6;letter-spacing:0.026px;">382844716374</span>
<span class="t" style="left:245.00px;top:178.00px;font-size:12px;line-height:15px;color:#d5dde6;letter-spacing:-0.401px;">199.119.78.38 :</span>
<span class="t" style="left:245.00px;top:196.00px;font-size:12px;line-height:15px;color:#d5dde6;letter-spacing:-0.274px;">21567</span>
<span class="t" style="left:345.00px;top:178.00px;font-size:12px;line-height:15px;color:#d5dde6;letter-spacing:-0.749px;">209.114.111.1 :</span>
<span class="t" style="left:345.00px;top:196.00px;font-size:12px;line-height:15px;color:#d5dde6;letter-spacing:0.226px;">23242</span>
<span class="t" style="left:445.00px;top:178.00px;font-size:12px;line-height:15px;color:#d5dde6;">6</span>
<span class="t" style="left:516.00px;top:178.00px;font-size:12px;line-height:15px;color:#d5dde6;letter-spacing:-0.047px;">high</span>
<span class="t" style="left:616.70px;top:178.00px;font-size:12px;line-height:15px;color:#d5dde6;letter-spacing:-0.185px;">[ Malware/Geodo , ThreatType/Criminal ,</span>
<span class="t" style="left:616.70px;top:196.00px;font-size:12px;line-height:15px;color:#d5dde6;letter-spacing:-0.033px;">MitreATTCK/CommandAndControl/Geodo ,</span>
<span class="t" style="left:616.70px;top:214.00px;font-size:12px;line-height:15px;color:#d5dde6;letter-spacing:-0.124px;">Actor/MUMMYSPIDER , ThreatType/Downloader</span>
<span class="t" style="left:616.70px;top:232.00px;font-size:12px;line-height:15px;color:#d5dde6;letter-spacing:-0.223px;">, CSD/CSA-18704 , MitreATTCK/CommandAndControl ]</span>
<div class="b" style="left:1px;top:252px;width:809px;height:1px;background:#25385a;"></div>
<div class="b" style="left:0px;top:252px;width:811px;height:10px;background:#1a243c;"></div>
<div class="b" style="left:3px;top:254px;width:462px;height:6px;background:#2f506e;border-radius:3px;"></div>
<div class="b" style="left:0px;top:262px;width:811px;height:26px;background:#1a243c;"></div>
<div class="b" style="left:56px;top:263px;width:24px;height:24px;background:#243352;"></div>
<span class="t" style="left:64.38px;top:267.00px;font-size:13px;line-height:16px;color:#c5d0dc;">1</span>
<span class="t" style="left:89.60px;top:267.00px;font-size:13px;line-height:16px;color:#9db3c6;letter-spacing:0.829px;">of</span>
<span class="t" style="left:116.70px;top:267.00px;font-size:13px;line-height:16px;color:#9db3c6;letter-spacing:0.020px;">14</span>
<svg style="left:6px;top:268px" width="190" height="14" viewBox="0 0 190 14"><g fill="none" stroke-width="1.3"><path d="M5.5 1.8L1 7L5.5 12.2M11.3 1.8L6.8 7L11.3 12.2M36.5 1.8L32 7L36.5 12.2" stroke="#46628a"/><path d="M143 1.8L147.5 7L143 12.2M168.8 1.8L173.3 7L168.8 12.2M174.6 1.8L179.1 7L174.6 12.2" stroke="#7d9cc2"/></g></svg>
<div class="b" style="left:800px;top:28px;width:10px;height:224px;background:#1a243c;"></div>
<div class="b" style="left:802px;top:29px;width:6px;height:11px;background:#2f5373;border-radius:3px;"></div>
<div class="b" style="left:0px;top:0px;width:811px;height:1px;background:#25385a;"></div>
<div class="b" style="left:0px;top:0px;width:1px;height:262px;background:#25385a;"></div>
<div class="b" style="left:810px;top:0px;width:1px;height:262px;background:#25385a;"></div>
</div>
<div class="b" style="left:860px;top:936px;width:811px;height:200px;overflow:hidden;">
<div class="b" style="left:1px;top:1px;width:809px;height:26px;background:#1a243c;"></div>
<div class="b" style="left:1px;top:27px;width:799px;height:1px;background:#25385a;"></div>
<span class="t" style="left:45.00px;top:7.00px;font-size:12px;line-height:15px;color:#8fa3b8;letter-spacing:0.043px;">interfaceID</span>
<span class="t" style="left:145.00px;top:7.00px;font-size:12px;line-height:15px;color:#8fa3b8;letter-spacing:0.015px;">accountid</span>
<span class="t" style="left:245.00px;top:7.00px;font-size:12px;line-height:15px;color:#8fa3b8;letter-spacing:-0.165px;">src</span>
<span class="t" style="left:345.00px;top:7.00px;font-size:12px;line-height:15px;color:#8fa3b8;letter-spacing:0.205px;">dest</span>
<span class="t" style="left:445.00px;top:7.00px;font-size:12px;line-height:15px;color:#8fa3b8;letter-spacing:0.164px;">protocol</span>
<span class="t" style="left:516.00px;top:7.00px;font-size:12px;line-height:15px;color:#8fa3b8;letter-spacing:-0.062px;">malicious_confidence</span>
<span class="t" style="left:616.00px;top:7.00px;font-size:12px;line-height:15px;color:#8fa3b8;letter-spacing:-0.055px;">label_name</span>
<span class="t" style="left:18.93px;top:34.00px;font-size:12px;line-height:15px;color:#8593a5;">1</span>
<span class="t" style="left:45.00px;top:34.00px;font-size:12px;line-height:15px;color:#d5dde6;letter-spacing:-0.068px;">eni-4b118872</span>
<span class="t" style="left:145.00px;top:34.00px;font-size:12px;line-height:15px;color:#d5dde6;letter-spacing:0.026px;">382844716374</span>
<span class="t" style="left:245.00px;top:34.00px;font-size:12px;line-height:15px;color:#d5dde6;letter-spacing:-0.208px;">176.126.244.20</span>
<span class="t" style="left:245.00px;top:52.00px;font-size:12px;line-height:15px;color:#d5dde6;letter-spacing:0.106px;">7 : 23788</span>
<span class="t" style="left:345.00px;top:34.00px;font-size:12px;line-height:15px;color:#d5dde6;letter-spacing:-0.453px;">172.31.10.8 : 22</span>
<span class="t" style="left:445.00px;top:34.00px;font-size:12px;line-height:15px;color:#d5dde6;">6</span>
<span class="t" style="left:516.00px;top:34.00px;font-size:12px;line-height:15px;color:#d5dde6;letter-spacing:-0.047px;">high</span>
<span class="t" style="left:616.70px;top:34.00px;font-size:12px;line-height:15px;color:#d5dde6;letter-spacing:-0.185px;">[ Malware/Geodo , ThreatType/Criminal ,</span>
<span class="t" style="left:616.70px;top:52.00px;font-size:12px;line-height:15px;color:#d5dde6;letter-spacing:-0.096px;">MaliciousConfidence/High , CSD/CSA-18704 ,</span>
<span class="t" style="left:616.70px;top:70.00px;font-size:12px;line-height:15px;color:#d5dde6;letter-spacing:-0.002px;">ThreatType/Downloader ]</span>
<div class="b" style="left:1px;top:90px;width:809px;height:1px;background:#25385a;"></div>
<span class="t" style="left:18.93px;top:97.00px;font-size:12px;line-height:15px;color:#8593a5;">2</span>
<span class="t" style="left:45.00px;top:97.00px;font-size:12px;line-height:15px;color:#d5dde6;letter-spacing:-0.151px;">eni-4b118871</span>
<span class="t" style="left:145.00px;top:97.00px;font-size:12px;line-height:15px;color:#d5dde6;letter-spacing:0.026px;">382844716374</span>
<span class="t" style="left:245.00px;top:97.00px;font-size:12px;line-height:15px;color:#d5dde6;letter-spacing:-0.327px;">92.222.219.26 :</span>
<span class="t" style="left:245.00px;top:115.00px;font-size:12px;line-height:15px;color:#d5dde6;letter-spacing:-0.074px;">20641</span>
<span class="t" style="left:345.00px;top:97.00px;font-size:12px;line-height:15px;color:#d5dde6;letter-spacing:-0.427px;">12.219.43.133 :</span>
<span class="t" style="left:345.00px;top:115.00px;font-size:12px;line-height:15px;color:#d5dde6;letter-spacing:0.076px;">22</span>
<span class="t" style="left:445.00px;top:97.00px;font-size:12px;line-height:15px;color:#d5dde6;">6</span>
<span class="t" style="left:516.00px;top:97.00px;font-size:12px;line-height:15px;color:#d5dde6;letter-spacing:-0.047px;">high</span>
<span class="t" style="left:616.70px;top:97.00px;font-size:12px;line-height:15px;color:#d5dde6;letter-spacing:-0.056px;">[ Malware/DoppelDridex , Actor/DOPPELSPIDER ,</span>
<span class="t" style="left:616.70px;top:115.00px;font-size:12px;line-height:15px;color:#d5dde6;letter-spacing:-0.078px;">Malware/Dridex , ThreatType/Criminal ,</span>
<span class="t" style="left:616.70px;top:133.00px;font-size:12px;line-height:15px;color:#d5dde6;letter-spacing:-0.079px;">MaliciousConfidence/High , ThreatType/Banking ]</span>
<div class="b" style="left:1px;top:153px;width:809px;height:1px;background:#25385a;"></div>
<div class="b" style="left:1px;top:154px;width:809px;height:63px;background:#24304e;"></div>
<span class="t" style="left:18.93px;top:160.00px;font-size:12px;line-height:15px;color:#8593a5;">3</span>
<span class="t" style="left:45.00px;top:160.00px;font-size:12px;line-height:15px;color:#d5dde6;letter-spacing:-0.151px;">eni-4b118871</span>
<span class="t" style="left:145.00px;top:160.00px;font-size:12px;line-height:15px;color:#d5dde6;letter-spacing:0.026px;">382844716374</span>
<span class="t" style="left:245.00px;top:160.00px;font-size:12px;line-height:15px;color:#d5dde6;letter-spacing:-0.401px;">199.119.78.38 :</span>
<span class="t" style="left:245.00px;top:178.00px;font-size:12px;line-height:15px;color:#d5dde6;letter-spacing:-0.274px;">21567</span>
<span class="t" style="left:345.00px;top:160.00px;font-size:12px;line-height:15px;color:#d5dde6;letter-spacing:-0.749px;">209.114.111.1 :</span>
<span class="t" style="left:345.00px;top:178.00px;font-size:12px;line-height:15px;color:#d5dde6;letter-spacing:0.226px;">23242</span>
<span class="t" style="left:445.00px;top:160.00px;font-size:12px;line-height:15px;color:#d5dde6;">6</span>
<span class="t" style="left:516.00px;top:160.00px;font-size:12px;line-height:15px;color:#d5dde6;letter-spacing:-0.047px;">high</span>
<span class="t" style="left:616.70px;top:160.00px;font-size:12px;line-height:15px;color:#d5dde6;letter-spacing:-0.185px;">[ Malware/Geodo , ThreatType/Criminal ,</span>
<span class="t" style="left:616.70px;top:178.00px;font-size:12px;line-height:15px;color:#d5dde6;letter-spacing:-0.033px;">MitreATTCK/CommandAndControl/Geodo ,</span>
<span class="t" style="left:616.70px;top:196.00px;font-size:12px;line-height:15px;color:#d5dde6;letter-spacing:-0.492px;">Actor/MUMMYSPIDER ]</span>
<div class="b" style="left:1px;top:216px;width:809px;height:1px;background:#25385a;"></div>
<div class="b" style="left:800px;top:28px;width:10px;height:200px;background:#1a243c;"></div>
<div class="b" style="left:802px;top:29px;width:6px;height:11px;background:#2f5373;border-radius:3px;"></div>
<div class="b" style="left:0px;top:0px;width:811px;height:1px;background:#25385a;"></div>
<div class="b" style="left:0px;top:0px;width:1px;height:200px;background:#25385a;"></div>
<div class="b" style="left:810px;top:0px;width:1px;height:200px;background:#25385a;"></div>
</div>
<div class="b" style="left:851px;top:916px;width:1px;height:10px;background:#6f86a0;"></div>
<div class="b" style="left:853.5px;top:916px;width:1px;height:10px;background:#6f86a0;"></div>
<svg style="left:1585.5px;top:910.5px" width="15" height="15" viewBox="0 0 15 15"><path d="M12.9 5.6A5.7 5.7 0 0 0 2 5.6" fill="none" stroke="#7f98ad" stroke-width="2.2"/><path d="M14.8 0.4V6.4H8.8Z" fill="#7f98ad"/><path d="M2.1 9.4A5.7 5.7 0 0 0 13 9.4" fill="none" stroke="#7f98ad" stroke-width="2.2"/><path d="M0.2 14.6V8.6H6.2Z" fill="#7f98ad"/></svg>
<svg style="left:1605px;top:909px" width="18" height="18" viewBox="0 0 18 18"><circle cx="9" cy="9" r="6.2" fill="none" stroke="#7f98ad" stroke-width="1.8"/><path d="M9.2 5.2V9.6H5.6" fill="none" stroke="#7f98ad" stroke-width="1.5"/></svg>
<span class="t" style="left:1627.00px;top:909.00px;font-size:14px;line-height:18px;color:#9db3c6;font-weight:700;letter-spacing:-0.247px;">-24h</span>
<svg style="left:1659px;top:910px" width="8" height="16" viewBox="0 0 8 16"><circle cx="4" cy="2.7" r="2.1" fill="#8fa3b8"/><circle cx="4" cy="8.1" r="2.1" fill="#8fa3b8"/><circle cx="4" cy="13.5" r="2.1" fill="#8fa3b8"/></svg>
<!-- donut charts -->
<svg style="left:71.7px;top:609.9px" width="140" height="140" viewBox="-70 -70 140 140"><path d="M0 -69 A69 69 0 1 1 0 69 A69 69 0 1 1 0 -69 Z M0 -20.4 A20.4 20.4 0 1 0 0 20.4 A20.4 20.4 0 1 0 0 -20.4 Z" fill="#d64758" fill-rule="evenodd"/></svg>
<svg style="left:138px;top:745px" width="16" height="28" viewBox="0 0 16 28"><path d="M3.7 2V24.4H13.5" fill="none" stroke="#d64758" stroke-width="1"/></svg>
<span class="t" style="left:152.00px;top:736.00px;font-size:13.4px;line-height:17px;color:#f0f2f5;letter-spacing:-0.220px;font-family:'DejaVu Sans Condensed','DejaVu Sans',sans-serif;">4,856</span>
<span class="t" style="left:152.00px;top:752.00px;font-size:13.4px;line-height:17px;color:#f0f2f5;letter-spacing:-0.496px;font-family:'DejaVu Sans Condensed','DejaVu Sans',sans-serif;">(100.0%)</span>
<span class="t" style="left:152.00px;top:768.00px;font-size:13.4px;line-height:17px;color:#f0f2f5;letter-spacing:-0.423px;font-family:'DejaVu Sans Condensed','DejaVu Sans',sans-serif;">38284471637</span>
<span class="t" style="left:152.00px;top:784.00px;font-size:13.4px;line-height:17px;color:#f0f2f5;letter-spacing:-0.368px;font-family:'DejaVu Sans Condensed','DejaVu Sans',sans-serif;">4</span>
<div class="b" style="left:21.9px;top:816px;width:10px;height:10px;border-radius:50%;background:#d64758"></div>
<span class="t" style="left:37.60px;top:815.00px;font-size:12px;line-height:15px;color:#d5dde6;letter-spacing:0.009px;">382844716374</span>
<svg style="left:71.9px;top:1009.6px" width="139.6" height="139.6" viewBox="-69.8 -69.8 139.6 139.6"><path d="M0.00 -68.80 A68.8 68.8 0 1 1 -28.53 -62.61 L-8.46 -18.56 A20.4 20.4 0 1 0 0.00 -20.40 Z" fill="#8fcc2f"/><path d="M-28.53 -62.61 A68.8 68.8 0 0 1 -0.00 -68.80 L-0.00 -20.40 A20.4 20.4 0 0 0 -8.46 -18.56 Z" fill="#2db39a"/></svg>
<svg style="left:110px;top:985px" width="22" height="30" viewBox="0 0 22 30"><path d="M2.5 6.7H12.8L17.8 27" fill="none" stroke="#2db39a" stroke-width="1"/></svg>
<span class="t" style="left:44.80px;top:974.00px;font-size:13.4px;line-height:17px;color:#f0f2f5;letter-spacing:-0.148px;font-family:'DejaVu Sans Condensed','DejaVu Sans',sans-serif;">128,485</span>
<span class="t" style="left:44.80px;top:990.00px;font-size:13.4px;line-height:17px;color:#f0f2f5;letter-spacing:-0.124px;font-family:'DejaVu Sans Condensed','DejaVu Sans',sans-serif;">(6.7%) UDP</span>
<!-- stacked bar chart -->
<div class="b" style="left:327px;top:807.5px;width:772px;height:1px;background:#2d4264;"></div>
<span class="t" style="left:314.83px;top:801.00px;font-size:12px;line-height:15px;color:#d5dde6;">0</span>
<div class="b" style="left:327px;top:757.5px;width:772px;height:1px;background:#2d4264;"></div>
<span class="t" style="left:308.08px;top:751.00px;font-size:12px;line-height:15px;color:#d5dde6;letter-spacing:0.076px;">20</span>
<div class="b" style="left:327px;top:707.5px;width:772px;height:1px;background:#2d4264;"></div>
<span class="t" style="left:308.08px;top:702.00px;font-size:12px;line-height:15px;color:#d5dde6;letter-spacing:0.076px;">40</span>
<div class="b" style="left:327px;top:658.5px;width:772px;height:1px;background:#2d4264;"></div>
<span class="t" style="left:308.08px;top:652.00px;font-size:12px;line-height:15px;color:#d5dde6;letter-spacing:0.076px;">60</span>
<div class="b" style="left:327px;top:608.5px;width:772px;height:1px;background:#2d4264;"></div>
<span class="t" style="left:308.08px;top:602.00px;font-size:12px;line-height:15px;color:#d5dde6;letter-spacing:0.076px;">80</span>
<div class="b" style="left:327px;top:558.5px;width:772px;height:1px;background:#2d4264;"></div>
<span class="t" style="left:301.83px;top:552.00px;font-size:12px;line-height:15px;color:#d5dde6;letter-spacing:-0.174px;">100</span>
<div class="b" style="left:335px;top:559.1px;width:51px;height:248.6px;background:#a6cee3;"></div>
<div class="b" style="left:335px;top:558.8px;width:51px;height:0.8px;background:#c9803a;"></div>
<div class="b" style="left:392px;top:559.1px;width:51px;height:248.6px;background:#33a02c;"></div>
<div class="b" style="left:392px;top:558.8px;width:51px;height:0.8px;background:#c9803a;"></div>
<div class="b" style="left:449px;top:683.4px;width:51px;height:124.3px;background:#1f78b4;"></div>
<div class="b" style="left:449px;top:559.1px;width:51px;height:124.3px;background:#33a02c;"></div>
<div class="b" style="left:449px;top:558.8px;width:51px;height:0.8px;background:#c9803a;"></div>
<div class="b" style="left:507px;top:559.1px;width:51px;height:248.6px;background:#1f78b4;"></div>
<div class="b" style="left:507px;top:558.8px;width:51px;height:0.8px;background:#c9803a;"></div>
<div class="b" style="left:564px;top:559.1px;width:51px;height:248.6px;background:#33a02c;"></div>
<div class="b" style="left:564px;top:558.8px;width:51px;height:0.8px;background:#c9803a;"></div>
<div class="b" style="left:621px;top:790.795px;width:51px;height:16.9048px;background:#a6cee3;"></div>
<div class="b" style="left:621px;top:559.1px;width:51px;height:231.695px;background:#33a02c;"></div>
<div class="b" style="left:621px;top:558.8px;width:51px;height:0.8px;background:#c9803a;"></div>
<div class="b" style="left:679px;top:559.1px;width:51px;height:248.6px;background:#33a02c;"></div>
<div class="b" style="left:679px;top:558.8px;width:51px;height:0.8px;background:#c9803a;"></div>
<div class="b" style="left:794px;top:559.1px;width:51px;height:248.6px;background:#33a02c;"></div>
<div class="b" style="left:794px;top:558.8px;width:51px;height:0.8px;background:#c9803a;"></div>
<div class="b" style="left:851px;top:683.4px;width:51px;height:124.3px;background:#1f78b4;"></div>
<div class="b" style="left:851px;top:559.1px;width:51px;height:124.3px;background:#33a02c;"></div>
<div class="b" style="left:851px;top:558.8px;width:51px;height:0.8px;background:#c9803a;"></div>
<div class="b" style="left:908px;top:799.496px;width:51px;height:8.2038px;background:#1f78b4;"></div>
<div class="b" style="left:908px;top:670.97px;width:51px;height:128.526px;background:#b2df8a;"></div>
<div class="b" style="left:908px;top:559.1px;width:51px;height:111.87px;background:#ff7f27;"></div>
<div class="b" style="left:966px;top:728.894px;width:51px;height:78.8062px;background:#1f78b4;"></div>
<div class="b" style="left:966px;top:559.1px;width:51px;height:169.794px;background:#33a02c;"></div>
<div class="b" style="left:360.2px;top:808px;width:1px;height:4px;background:#2d4264;"></div>
<span class="t" style="left:334.96px;top:811.00px;font-size:12px;line-height:15px;color:#d5dde6;letter-spacing:0.017px;">05:10 PM</span>
<div class="b" style="left:474.97px;top:808px;width:1px;height:4px;background:#2d4264;"></div>
<span class="t" style="left:449.73px;top:811.00px;font-size:12px;line-height:15px;color:#d5dde6;letter-spacing:0.017px;">05:20 PM</span>
<div class="b" style="left:589.74px;top:808px;width:1px;height:4px;background:#2d4264;"></div>
<span class="t" style="left:564.50px;top:811.00px;font-size:12px;line-height:15px;color:#d5dde6;letter-spacing:0.017px;">05:30 PM</span>
<div class="b" style="left:704.51px;top:808px;width:1px;height:4px;background:#2d4264;"></div>
<span class="t" style="left:679.27px;top:811.00px;font-size:12px;line-height:15px;color:#d5dde6;letter-spacing:0.017px;">05:40 PM</span>
<div class="b" style="left:819.28px;top:808px;width:1px;height:4px;background:#2d4264;"></div>
<span class="t" style="left:794.04px;top:811.00px;font-size:12px;line-height:15px;color:#d5dde6;letter-spacing:0.017px;">05:50 PM</span>
<div class="b" style="left:934.05px;top:808px;width:1px;height:4px;background:#2d4264;"></div>
<span class="t" style="left:908.81px;top:811.00px;font-size:12px;line-height:15px;color:#d5dde6;letter-spacing:0.017px;">06:00 PM</span>
<div class="b" style="left:1048.82px;top:808px;width:1px;height:4px;background:#2d4264;"></div>
<span class="t" style="left:1023.58px;top:811.00px;font-size:12px;line-height:15px;color:#d5dde6;letter-spacing:0.017px;">06:10 PM</span>
<svg style="left:1038px;top:522px" width="18" height="18" viewBox="0 0 18 18"><circle cx="9" cy="9" r="6.2" fill="none" stroke="#7f98ad" stroke-width="1.8"/><path d="M9.2 5.2V9.6H5.6" fill="none" stroke="#7f98ad" stroke-width="1.5"/></svg>
<span class="t" style="left:1060.30px;top:522.00px;font-size:14px;line-height:18px;color:#9db3c6;font-weight:700;letter-spacing:-0.171px;">-60m</span>
<!-- top20 tables -->
<div class="b" style="left:1140.3px;top:549px;width:249px;height:287px;background:transparent;border:1px solid #25385a;"></div>
<div class="b" style="left:1141.3px;top:550px;width:247px;height:26.5px;background:#1a243c;"></div>
<div class="b" style="left:1141.3px;top:576.3px;width:247px;height:1px;background:#25385a;"></div>
<span class="t" style="left:1165.00px;top:556.00px;font-size:12px;line-height:15px;color:#8fa3b8;letter-spacing:-0.016px;">srcDevice_ip</span>
<span class="t" style="left:1342.55px;top:556.00px;font-size:12px;line-height:15px;color:#8fa3b8;letter-spacing:0.245px;">_count</span>
<span class="t" style="left:1149.43px;top:583.00px;font-size:12px;line-height:15px;color:#8593a5;">1</span>
<span class="t" style="left:1165.00px;top:583.00px;font-size:12px;line-height:15px;color:#d5dde6;letter-spacing:-0.403px;">12.219.43.133</span>
<span class="t" style="left:1359.46px;top:583.00px;font-size:12px;line-height:15px;color:#d5dde6;letter-spacing:0.159px;">179</span>
<div class="b" style="left:1141.3px;top:603.3px;width:247px;height:1px;background:#25385a;"></div>
<span class="t" style="left:1149.43px;top:610.00px;font-size:12px;line-height:15px;color:#8593a5;">2</span>
<span class="t" style="left:1165.00px;top:610.00px;font-size:12px;line-height:15px;color:#d5dde6;letter-spacing:-0.581px;">172.31.10.8</span>
<span class="t" style="left:1366.38px;top:610.00px;font-size:12px;line-height:15px;color:#d5dde6;letter-spacing:0.076px;">91</span>
<div class="b" style="left:1141.3px;top:630.3px;width:247px;height:1px;background:#25385a;"></div>
<span class="t" style="left:1149.43px;top:637.00px;font-size:12px;line-height:15px;color:#8593a5;">3</span>
<span class="t" style="left:1165.00px;top:637.00px;font-size:12px;line-height:15px;color:#d5dde6;letter-spacing:-0.326px;">82.165.148.62</span>
<span class="t" style="left:1366.38px;top:637.00px;font-size:12px;line-height:15px;color:#d5dde6;letter-spacing:0.076px;">71</span>
<div class="b" style="left:1141.3px;top:657.3px;width:247px;height:1px;background:#25385a;"></div>
<span class="t" style="left:1149.43px;top:664.00px;font-size:12px;line-height:15px;color:#8593a5;">4</span>
<span class="t" style="left:1165.00px;top:664.00px;font-size:12px;line-height:15px;color:#d5dde6;letter-spacing:-0.716px;">211.167.104.51</span>
<span class="t" style="left:1366.38px;top:664.00px;font-size:12px;line-height:15px;color:#d5dde6;letter-spacing:0.076px;">45</span>
<div class="b" style="left:1141.3px;top:684.3px;width:247px;height:1px;background:#25385a;"></div>
<span class="t" style="left:1149.43px;top:691.00px;font-size:12px;line-height:15px;color:#8593a5;">5</span>
<span class="t" style="left:1165.00px;top:691.00px;font-size:12px;line-height:15px;color:#d5dde6;letter-spacing:-0.211px;">204.74.99.100</span>
<span class="t" style="left:1366.38px;top:691.00px;font-size:12px;line-height:15px;color:#d5dde6;letter-spacing:0.076px;">39</span>
<div class="b" style="left:1141.3px;top:711.3px;width:247px;height:1px;background:#25385a;"></div>
<span class="t" style="left:1149.43px;top:718.00px;font-size:12px;line-height:15px;color:#8593a5;">6</span>
<span class="t" style="left:1165.00px;top:718.00px;font-size:12px;line-height:15px;color:#d5dde6;letter-spacing:-0.403px;">199.200.17.56</span>
<span class="t" style="left:1366.38px;top:718.00px;font-size:12px;line-height:15px;color:#d5dde6;letter-spacing:0.076px;">29</span>
<div class="b" style="left:1141.3px;top:738.3px;width:247px;height:1px;background:#25385a;"></div>
<div class="b" style="left:1421.3px;top:549px;width:249px;height:287px;background:transparent;border:1px solid #25385a;"></div>
<div class="b" style="left:1422.3px;top:550px;width:247px;height:26.5px;background:#1a243c;"></div>
<div class="b" style="left:1422.3px;top:576.3px;width:247px;height:1px;background:#25385a;"></div>
<span class="t" style="left:1446.00px;top:556.00px;font-size:12px;line-height:15px;color:#8fa3b8;letter-spacing:-0.017px;">dstDevice_ip</span>
<span class="t" style="left:1623.55px;top:556.00px;font-size:12px;line-height:15px;color:#8fa3b8;letter-spacing:0.245px;">_count</span>
<span class="t" style="left:1430.43px;top:583.00px;font-size:12px;line-height:15px;color:#8593a5;">1</span>
<span class="t" style="left:1446.00px;top:583.00px;font-size:12px;line-height:15px;color:#d5dde6;letter-spacing:-0.403px;">12.219.43.133</span>
<span class="t" style="left:1640.46px;top:583.00px;font-size:12px;line-height:15px;color:#d5dde6;letter-spacing:0.159px;">159</span>
<div class="b" style="left:1422.3px;top:603.3px;width:247px;height:1px;background:#25385a;"></div>
<span class="t" style="left:1430.43px;top:610.00px;font-size:12px;line-height:15px;color:#8593a5;">2</span>
<span class="t" style="left:1446.00px;top:610.00px;font-size:12px;line-height:15px;color:#d5dde6;letter-spacing:-0.581px;">172.31.10.8</span>
<span class="t" style="left:1640.46px;top:610.00px;font-size:12px;line-height:15px;color:#d5dde6;letter-spacing:0.159px;">153</span>
<div class="b" style="left:1422.3px;top:630.3px;width:247px;height:1px;background:#25385a;"></div>
<span class="t" style="left:1430.43px;top:637.00px;font-size:12px;line-height:15px;color:#8593a5;">3</span>
<span class="t" style="left:1446.00px;top:637.00px;font-size:12px;line-height:15px;color:#d5dde6;letter-spacing:-0.851px;">209.114.111.1</span>
<span class="t" style="left:1640.46px;top:637.00px;font-size:12px;line-height:15px;color:#d5dde6;letter-spacing:0.159px;">142</span>
<div class="b" style="left:1422.3px;top:657.3px;width:247px;height:1px;background:#25385a;"></div>
</div></body></html>
